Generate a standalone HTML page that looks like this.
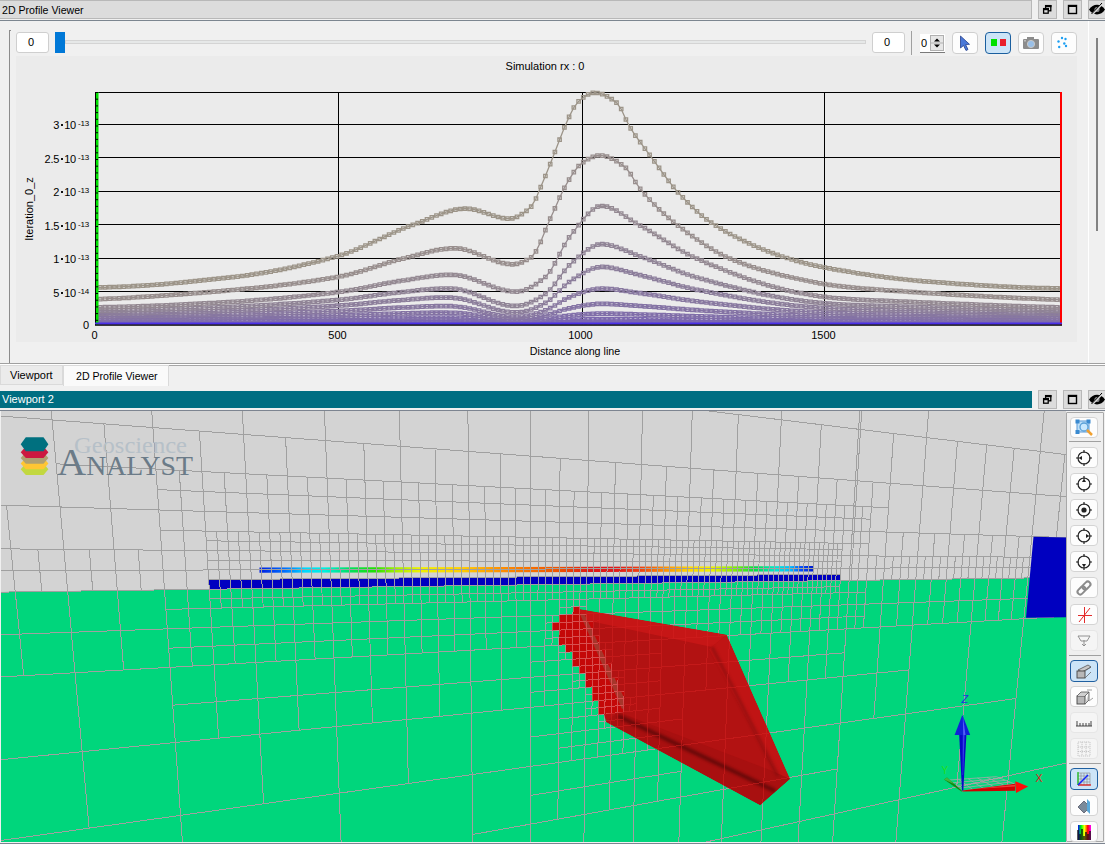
<!DOCTYPE html><html><head><meta charset="utf-8"><style>
*{box-sizing:border-box}
html,body{margin:0;padding:0}
body{width:1105px;height:844px;overflow:hidden;position:relative;background:#f0f0f0;font-family:"Liberation Sans", sans-serif;font-size:12px;color:#000}
.a{position:absolute}
.t{position:absolute;white-space:nowrap;line-height:1}
.btn{position:absolute;background:#fdfdfd;border:1px solid #cfcfcf;border-radius:4px}
</style></head><body>

<div class="a" style="left:0;top:0;width:1032px;height:19px;background:#dcdcdc;border:1px solid #b8b8b8;border-left:none"></div>
<div class="t" style="left:2px;top:4.5px;font-size:10.6px">2D Profile Viewer</div>
<div class="a" style="left:1038px;top:0;width:19px;height:19px;background:#dcdcdc;border:1px solid #b8b8b8"></div>
<div class="a" style="left:1063px;top:0;width:19px;height:19px;background:#dcdcdc;border:1px solid #b8b8b8"></div>
<div class="a" style="left:1088px;top:0;width:19px;height:19px;background:#dcdcdc;border:1px solid #b8b8b8"></div>
<div class="a" style="left:0;top:20px;width:1105px;height:1px;background:#7c8690"></div>
<svg class="a" style="left:1038px;top:0px" width="19" height="19" viewBox="0 0 19 19"><rect x="7.6" y="5.6" width="5.2" height="5.2" fill="none" stroke="#000" stroke-width="1.3"/><rect x="7" y="5" width="6.5" height="2.2" fill="#000"/><rect x="5.6" y="8.6" width="4.6" height="4.6" fill="#dcdcdc" stroke="#000" stroke-width="1.3"/><rect x="5" y="8" width="6" height="2.2" fill="#000"/></svg><svg class="a" style="left:1063px;top:0px" width="19" height="19" viewBox="0 0 19 19"><rect x="5.5" y="5.5" width="8" height="8" fill="none" stroke="#000" stroke-width="1.4"/><rect x="5" y="5" width="9" height="2" fill="#000"/></svg><svg class="a" style="left:1088px;top:0px" width="17" height="19" viewBox="0 0 17 19"><path d="M1,9.5 C5,3 13,3 17,9.5 C13,16 5,16 1,9.5Z" fill="#000"/><circle cx="9" cy="9.5" r="2.6" fill="#888"/><line x1="3.5" y1="15" x2="14.5" y2="3.5" stroke="#dcdcdc" stroke-width="2"/><line x1="3.5" y1="14" x2="14" y2="3" stroke="#000" stroke-width="1"/></svg>
<div class="a" style="left:9px;top:30px;width:2px;height:334px;border-left:1px solid #8c8c8c;border-top:1px solid #8c8c8c"></div>
<div class="a" style="left:1088px;top:21px;width:1px;height:342px;background:#ffffff"></div>
<div class="a" style="left:1096px;top:38px;width:2px;height:193px;background:#828282"></div>
<div class="btn" style="left:16px;top:32px;width:33px;height:21px;border-radius:3px;background:#fff"></div>
<div class="t" style="left:28px;top:37px;font-size:11px">0</div>
<div class="a" style="left:65px;top:40px;width:801px;height:4px;background:#e6e8e8;border:1px solid #d4d4d4"></div>
<div class="a" style="left:55px;top:32px;width:10px;height:21px;background:#0078d7"></div>
<div class="btn" style="left:872px;top:32px;width:33px;height:21px;border-radius:3px;background:#fff"></div>
<div class="t" style="left:884px;top:37px;font-size:11px">0</div>
<div class="a" style="left:911px;top:31px;width:1px;height:24px;background:#a0a0a0"></div>
<div class="a" style="left:920px;top:34px;width:25px;height:19px;background:#fff;border-bottom:1px solid #7a7a7a"></div>
<div class="t" style="left:921px;top:38px;font-size:11px">0</div>
<div class="a" style="left:930px;top:35px;width:14px;height:16px;background:#e6e6e6;border:1px solid #b0b0b0"></div>
<svg class="a" style="left:930px;top:35px" width="14" height="16"><path d="M4,6.5 L7,3.5 L10,6.5Z" fill="#000"/><path d="M4,9.5 L7,12.5 L10,9.5Z" fill="#000"/><line x1="1" y1="8" x2="13" y2="8" stroke="#b0b0b0"/></svg>
<div class="btn" style="left:952px;top:32px;width:26px;height:22px"></div>
<svg class="a" style="left:952px;top:32px" width="26" height="22"><path d="M8.5,4 L8.5,16 L11.5,13.5 L14,18.5 L16,17.5 L13.6,12.6 L17.5,12.3Z" fill="#4a78d8" stroke="#27408b" stroke-width="0.8"/></svg>
<div class="btn" style="left:985px;top:32px;width:26px;height:22px;background:#cce4f7;border:1px solid #1a5e9e"></div>
<div class="a" style="left:991px;top:39px;width:6px;height:7px;background:#00e000"></div><div class="a" style="left:1000px;top:39px;width:6px;height:7px;background:#e8202a"></div>
<div class="btn" style="left:1018px;top:32px;width:26px;height:22px"></div>
<svg class="a" style="left:1018px;top:32px" width="26" height="22"><rect x="5" y="7" width="16" height="10" rx="1" fill="#8c8c8c"/><rect x="9" y="5" width="7" height="3" fill="#8c8c8c"/><circle cx="13" cy="12" r="3.6" fill="#9ac0e8" stroke="#c8c8c8" stroke-width="1"/><rect x="6" y="8" width="2" height="1.5" fill="#bbb"/></svg>
<div class="btn" style="left:1051px;top:32px;width:26px;height:22px"></div>
<svg class="a" style="left:1051px;top:32px" width="26" height="22" fill="#1e9ff2"><circle cx="11" cy="6" r="1.2"/><circle cx="14.5" cy="7" r="1.2"/><circle cx="7.5" cy="9.5" r="1.2"/><circle cx="13.3" cy="11.5" r="1.2"/><circle cx="8.2" cy="15" r="1.2"/><circle cx="15" cy="14" r="1.2"/></svg>
<div class="a" style="left:16px;top:56px;width:1061px;height:286px;background:#ebebeb"></div>
<div class="t" style="left:0;top:61px;width:1090px;text-align:center;font-size:11px;padding-left:0px"><span style="position:relative;left:0px">Simulation rx : 0</span></div>
<svg class="a" style="left:0;top:0" width="1105" height="364" viewBox="0 0 1105 364"><line x1="95" y1="291.5" x2="1061" y2="291.5" stroke="#000" stroke-width="1"/><line x1="95" y1="258.5" x2="1061" y2="258.5" stroke="#000" stroke-width="1"/><line x1="95" y1="224.5" x2="1061" y2="224.5" stroke="#000" stroke-width="1"/><line x1="95" y1="191.5" x2="1061" y2="191.5" stroke="#000" stroke-width="1"/><line x1="95" y1="157.5" x2="1061" y2="157.5" stroke="#000" stroke-width="1"/><line x1="95" y1="124.5" x2="1061" y2="124.5" stroke="#000" stroke-width="1"/><line x1="338.5" y1="92" x2="338.5" y2="325" stroke="#000" stroke-width="1"/><line x1="582.5" y1="92" x2="582.5" y2="325" stroke="#000" stroke-width="1"/><line x1="824.5" y1="92" x2="824.5" y2="325" stroke="#000" stroke-width="1"/><line x1="95" y1="92.5" x2="1062" y2="92.5" stroke="#000" stroke-width="1.2"/><defs><clipPath id="plotc"><rect x="96" y="80" width="966" height="245"/></clipPath></defs><g clip-path="url(#plotc)"><polyline points="95.5,324.4 100.2,324.4 105.0,324.4 109.7,324.4 114.4,324.3 119.2,324.3 123.9,324.3 128.7,324.3 133.4,324.3 138.1,324.3 142.9,324.3 147.6,324.3 152.3,324.3 157.1,324.3 161.8,324.3 166.5,324.3 171.3,324.3 176.0,324.3 180.8,324.3 185.5,324.3 190.2,324.3 195.0,324.3 199.7,324.3 204.4,324.3 209.2,324.3 213.9,324.3 218.6,324.3 223.4,324.3 228.1,324.3 232.8,324.3 237.6,324.3 242.3,324.3 247.1,324.3 251.8,324.3 256.5,324.3 261.3,324.3 266.0,324.3 270.7,324.3 275.5,324.3 280.2,324.3 284.9,324.3 289.7,324.3 294.4,324.3 299.2,324.3 303.9,324.3 308.6,324.3 313.4,324.3 318.1,324.3 322.8,324.3 327.6,324.3 332.3,324.3 337.0,324.3 341.8,324.3 346.5,324.3 351.3,324.3 356.0,324.3 360.7,324.3 365.5,324.3 370.2,324.3 374.9,324.3 379.7,324.3 384.4,324.2 389.1,324.2 393.9,324.2 398.6,324.2 403.3,324.2 408.1,324.2 412.8,324.2 417.6,324.2 422.3,324.2 427.0,324.2 431.8,324.2 436.5,324.2 441.2,324.2 446.0,324.2 450.7,324.2 455.4,324.2 460.2,324.3 464.9,324.3 469.7,324.3 474.4,324.3 479.1,324.4 483.9,324.4 488.6,324.4 493.3,324.5 498.1,324.5 502.8,324.5 507.5,324.5 512.3,324.6 517.0,324.6 521.8,324.5 526.5,324.5 531.2,324.5 536.0,324.5 540.7,324.4 545.4,324.4 550.2,324.3 554.9,324.3 559.6,324.2 564.4,324.2 569.1,324.2 573.8,324.2 578.6,324.1 583.3,324.1 588.1,324.1 592.8,324.1 597.5,324.1 602.3,324.1 607.0,324.1 611.7,324.1 616.5,324.1 621.2,324.1 625.9,324.1 630.7,324.1 635.4,324.1 640.2,324.1 644.9,324.1 649.6,324.1 654.4,324.1 659.1,324.1 663.8,324.1 668.6,324.2 673.3,324.2 678.0,324.2 682.8,324.2 687.5,324.2 692.3,324.2 697.0,324.2 701.7,324.2 706.5,324.2 711.2,324.2 715.9,324.2 720.7,324.2 725.4,324.2 730.1,324.2 734.9,324.2 739.6,324.2 744.3,324.2 749.1,324.2 753.8,324.2 758.6,324.2 763.3,324.3 768.0,324.3 772.8,324.3 777.5,324.3 782.2,324.3 787.0,324.3 791.7,324.3 796.4,324.3 801.2,324.3 805.9,324.3 810.7,324.3 815.4,324.3 820.1,324.3 824.9,324.3 829.6,324.3 834.3,324.3 839.1,324.3 843.8,324.3 848.5,324.3 853.3,324.3 858.0,324.3 862.8,324.3 867.5,324.3 872.2,324.3 877.0,324.3 881.7,324.3 886.4,324.3 891.2,324.3 895.9,324.3 900.6,324.3 905.4,324.3 910.1,324.3 914.8,324.3 919.6,324.3 924.3,324.3 929.1,324.3 933.8,324.3 938.5,324.3 943.3,324.3 948.0,324.3 952.7,324.3 957.5,324.3 962.2,324.3 966.9,324.3 971.7,324.3 976.4,324.3 981.2,324.3 985.9,324.3 990.6,324.3 995.4,324.3 1000.1,324.3 1004.8,324.3 1009.6,324.3 1014.3,324.3 1019.0,324.3 1023.8,324.3 1028.5,324.3 1033.3,324.3 1038.0,324.3 1042.7,324.3 1047.5,324.3 1052.2,324.4 1056.9,324.4 1061.7,324.4" fill="none" stroke="rgb(124,104,174)" stroke-width="1.3"/><path d="M93.8,322.7h3.4v3.4h-3.4zM98.5,322.7h3.4v3.4h-3.4zM103.3,322.7h3.4v3.4h-3.4zM108.0,322.7h3.4v3.4h-3.4zM112.7,322.6h3.4v3.4h-3.4zM117.5,322.6h3.4v3.4h-3.4zM122.2,322.6h3.4v3.4h-3.4zM127.0,322.6h3.4v3.4h-3.4zM131.7,322.6h3.4v3.4h-3.4zM136.4,322.6h3.4v3.4h-3.4zM141.2,322.6h3.4v3.4h-3.4zM145.9,322.6h3.4v3.4h-3.4zM150.6,322.6h3.4v3.4h-3.4zM155.4,322.6h3.4v3.4h-3.4zM160.1,322.6h3.4v3.4h-3.4zM164.8,322.6h3.4v3.4h-3.4zM169.6,322.6h3.4v3.4h-3.4zM174.3,322.6h3.4v3.4h-3.4zM179.1,322.6h3.4v3.4h-3.4zM183.8,322.6h3.4v3.4h-3.4zM188.5,322.6h3.4v3.4h-3.4zM193.3,322.6h3.4v3.4h-3.4zM198.0,322.6h3.4v3.4h-3.4zM202.7,322.6h3.4v3.4h-3.4zM207.5,322.6h3.4v3.4h-3.4zM212.2,322.6h3.4v3.4h-3.4zM216.9,322.6h3.4v3.4h-3.4zM221.7,322.6h3.4v3.4h-3.4zM226.4,322.6h3.4v3.4h-3.4zM231.1,322.6h3.4v3.4h-3.4zM235.9,322.6h3.4v3.4h-3.4zM240.6,322.6h3.4v3.4h-3.4zM245.4,322.6h3.4v3.4h-3.4zM250.1,322.6h3.4v3.4h-3.4zM254.8,322.6h3.4v3.4h-3.4zM259.6,322.6h3.4v3.4h-3.4zM264.3,322.6h3.4v3.4h-3.4zM269.0,322.6h3.4v3.4h-3.4zM273.8,322.6h3.4v3.4h-3.4zM278.5,322.6h3.4v3.4h-3.4zM283.2,322.6h3.4v3.4h-3.4zM288.0,322.6h3.4v3.4h-3.4zM292.7,322.6h3.4v3.4h-3.4zM297.5,322.6h3.4v3.4h-3.4zM302.2,322.6h3.4v3.4h-3.4zM306.9,322.6h3.4v3.4h-3.4zM311.7,322.6h3.4v3.4h-3.4zM316.4,322.6h3.4v3.4h-3.4zM321.1,322.6h3.4v3.4h-3.4zM325.9,322.6h3.4v3.4h-3.4zM330.6,322.6h3.4v3.4h-3.4zM335.3,322.6h3.4v3.4h-3.4zM340.1,322.6h3.4v3.4h-3.4zM344.8,322.6h3.4v3.4h-3.4zM349.6,322.6h3.4v3.4h-3.4zM354.3,322.6h3.4v3.4h-3.4zM359.0,322.6h3.4v3.4h-3.4zM363.8,322.6h3.4v3.4h-3.4zM368.5,322.6h3.4v3.4h-3.4zM373.2,322.6h3.4v3.4h-3.4zM378.0,322.6h3.4v3.4h-3.4zM382.7,322.5h3.4v3.4h-3.4zM387.4,322.5h3.4v3.4h-3.4zM392.2,322.5h3.4v3.4h-3.4zM396.9,322.5h3.4v3.4h-3.4zM401.6,322.5h3.4v3.4h-3.4zM406.4,322.5h3.4v3.4h-3.4zM411.1,322.5h3.4v3.4h-3.4zM415.9,322.5h3.4v3.4h-3.4zM420.6,322.5h3.4v3.4h-3.4zM425.3,322.5h3.4v3.4h-3.4zM430.1,322.5h3.4v3.4h-3.4zM434.8,322.5h3.4v3.4h-3.4zM439.5,322.5h3.4v3.4h-3.4zM444.3,322.5h3.4v3.4h-3.4zM449.0,322.5h3.4v3.4h-3.4zM453.7,322.5h3.4v3.4h-3.4zM458.5,322.6h3.4v3.4h-3.4zM463.2,322.6h3.4v3.4h-3.4zM468.0,322.6h3.4v3.4h-3.4zM472.7,322.6h3.4v3.4h-3.4zM477.4,322.7h3.4v3.4h-3.4zM482.2,322.7h3.4v3.4h-3.4zM486.9,322.7h3.4v3.4h-3.4zM491.6,322.8h3.4v3.4h-3.4zM496.4,322.8h3.4v3.4h-3.4zM501.1,322.8h3.4v3.4h-3.4zM505.8,322.8h3.4v3.4h-3.4zM510.6,322.9h3.4v3.4h-3.4zM515.3,322.9h3.4v3.4h-3.4zM520.1,322.8h3.4v3.4h-3.4zM524.8,322.8h3.4v3.4h-3.4zM529.5,322.8h3.4v3.4h-3.4zM534.3,322.8h3.4v3.4h-3.4zM539.0,322.7h3.4v3.4h-3.4zM543.7,322.7h3.4v3.4h-3.4zM548.5,322.6h3.4v3.4h-3.4zM553.2,322.6h3.4v3.4h-3.4zM557.9,322.5h3.4v3.4h-3.4zM562.7,322.5h3.4v3.4h-3.4zM567.4,322.5h3.4v3.4h-3.4zM572.1,322.5h3.4v3.4h-3.4zM576.9,322.4h3.4v3.4h-3.4zM581.6,322.4h3.4v3.4h-3.4zM586.4,322.4h3.4v3.4h-3.4zM591.1,322.4h3.4v3.4h-3.4zM595.8,322.4h3.4v3.4h-3.4zM600.6,322.4h3.4v3.4h-3.4zM605.3,322.4h3.4v3.4h-3.4zM610.0,322.4h3.4v3.4h-3.4zM614.8,322.4h3.4v3.4h-3.4zM619.5,322.4h3.4v3.4h-3.4zM624.2,322.4h3.4v3.4h-3.4zM629.0,322.4h3.4v3.4h-3.4zM633.7,322.4h3.4v3.4h-3.4zM638.5,322.4h3.4v3.4h-3.4zM643.2,322.4h3.4v3.4h-3.4zM647.9,322.4h3.4v3.4h-3.4zM652.7,322.4h3.4v3.4h-3.4zM657.4,322.4h3.4v3.4h-3.4zM662.1,322.4h3.4v3.4h-3.4zM666.9,322.5h3.4v3.4h-3.4zM671.6,322.5h3.4v3.4h-3.4zM676.3,322.5h3.4v3.4h-3.4zM681.1,322.5h3.4v3.4h-3.4zM685.8,322.5h3.4v3.4h-3.4zM690.6,322.5h3.4v3.4h-3.4zM695.3,322.5h3.4v3.4h-3.4zM700.0,322.5h3.4v3.4h-3.4zM704.8,322.5h3.4v3.4h-3.4zM709.5,322.5h3.4v3.4h-3.4zM714.2,322.5h3.4v3.4h-3.4zM719.0,322.5h3.4v3.4h-3.4zM723.7,322.5h3.4v3.4h-3.4zM728.4,322.5h3.4v3.4h-3.4zM733.2,322.5h3.4v3.4h-3.4zM737.9,322.5h3.4v3.4h-3.4zM742.6,322.5h3.4v3.4h-3.4zM747.4,322.5h3.4v3.4h-3.4zM752.1,322.5h3.4v3.4h-3.4zM756.9,322.5h3.4v3.4h-3.4zM761.6,322.6h3.4v3.4h-3.4zM766.3,322.6h3.4v3.4h-3.4zM771.1,322.6h3.4v3.4h-3.4zM775.8,322.6h3.4v3.4h-3.4zM780.5,322.6h3.4v3.4h-3.4zM785.3,322.6h3.4v3.4h-3.4zM790.0,322.6h3.4v3.4h-3.4zM794.7,322.6h3.4v3.4h-3.4zM799.5,322.6h3.4v3.4h-3.4zM804.2,322.6h3.4v3.4h-3.4zM809.0,322.6h3.4v3.4h-3.4zM813.7,322.6h3.4v3.4h-3.4zM818.4,322.6h3.4v3.4h-3.4zM823.2,322.6h3.4v3.4h-3.4zM827.9,322.6h3.4v3.4h-3.4zM832.6,322.6h3.4v3.4h-3.4zM837.4,322.6h3.4v3.4h-3.4zM842.1,322.6h3.4v3.4h-3.4zM846.8,322.6h3.4v3.4h-3.4zM851.6,322.6h3.4v3.4h-3.4zM856.3,322.6h3.4v3.4h-3.4zM861.1,322.6h3.4v3.4h-3.4zM865.8,322.6h3.4v3.4h-3.4zM870.5,322.6h3.4v3.4h-3.4zM875.3,322.6h3.4v3.4h-3.4zM880.0,322.6h3.4v3.4h-3.4zM884.7,322.6h3.4v3.4h-3.4zM889.5,322.6h3.4v3.4h-3.4zM894.2,322.6h3.4v3.4h-3.4zM898.9,322.6h3.4v3.4h-3.4zM903.7,322.6h3.4v3.4h-3.4zM908.4,322.6h3.4v3.4h-3.4zM913.1,322.6h3.4v3.4h-3.4zM917.9,322.6h3.4v3.4h-3.4zM922.6,322.6h3.4v3.4h-3.4zM927.4,322.6h3.4v3.4h-3.4zM932.1,322.6h3.4v3.4h-3.4zM936.8,322.6h3.4v3.4h-3.4zM941.6,322.6h3.4v3.4h-3.4zM946.3,322.6h3.4v3.4h-3.4zM951.0,322.6h3.4v3.4h-3.4zM955.8,322.6h3.4v3.4h-3.4zM960.5,322.6h3.4v3.4h-3.4zM965.2,322.6h3.4v3.4h-3.4zM970.0,322.6h3.4v3.4h-3.4zM974.7,322.6h3.4v3.4h-3.4zM979.5,322.6h3.4v3.4h-3.4zM984.2,322.6h3.4v3.4h-3.4zM988.9,322.6h3.4v3.4h-3.4zM993.7,322.6h3.4v3.4h-3.4zM998.4,322.6h3.4v3.4h-3.4zM1003.1,322.6h3.4v3.4h-3.4zM1007.9,322.6h3.4v3.4h-3.4zM1012.6,322.6h3.4v3.4h-3.4zM1017.3,322.6h3.4v3.4h-3.4zM1022.1,322.6h3.4v3.4h-3.4zM1026.8,322.6h3.4v3.4h-3.4zM1031.6,322.6h3.4v3.4h-3.4zM1036.3,322.6h3.4v3.4h-3.4zM1041.0,322.6h3.4v3.4h-3.4zM1045.8,322.6h3.4v3.4h-3.4zM1050.5,322.7h3.4v3.4h-3.4zM1055.2,322.7h3.4v3.4h-3.4zM1060.0,322.7h3.4v3.4h-3.4z" stroke="rgb(124,104,174)" stroke-width="1.3" fill="none"/><polyline points="95.5,323.9 100.2,323.9 105.0,323.9 109.7,323.9 114.4,323.9 119.2,323.9 123.9,323.9 128.7,323.9 133.4,323.9 138.1,323.9 142.9,323.9 147.6,323.9 152.3,323.9 157.1,323.9 161.8,323.9 166.5,323.9 171.3,323.9 176.0,323.9 180.8,323.9 185.5,323.9 190.2,323.9 195.0,323.9 199.7,323.9 204.4,323.9 209.2,323.9 213.9,323.9 218.6,323.9 223.4,323.9 228.1,323.9 232.8,323.9 237.6,323.9 242.3,323.9 247.1,323.9 251.8,323.9 256.5,323.9 261.3,323.9 266.0,323.9 270.7,323.8 275.5,323.8 280.2,323.8 284.9,323.8 289.7,323.8 294.4,323.8 299.2,323.8 303.9,323.8 308.6,323.8 313.4,323.8 318.1,323.8 322.8,323.8 327.6,323.8 332.3,323.8 337.0,323.8 341.8,323.8 346.5,323.8 351.3,323.8 356.0,323.8 360.7,323.8 365.5,323.7 370.2,323.7 374.9,323.7 379.7,323.7 384.4,323.7 389.1,323.7 393.9,323.7 398.6,323.7 403.3,323.7 408.1,323.7 412.8,323.7 417.6,323.7 422.3,323.7 427.0,323.7 431.8,323.7 436.5,323.7 441.2,323.7 446.0,323.7 450.7,323.7 455.4,323.7 460.2,323.7 464.9,323.8 469.7,323.8 474.4,323.9 479.1,323.9 483.9,324.0 488.6,324.0 493.3,324.1 498.1,324.2 502.8,324.2 507.5,324.3 512.3,324.3 517.0,324.3 521.8,324.3 526.5,324.2 531.2,324.2 536.0,324.1 540.7,324.0 545.4,323.9 550.2,323.9 554.9,323.8 559.6,323.7 564.4,323.6 569.1,323.5 573.8,323.5 578.6,323.5 583.3,323.4 588.1,323.4 592.8,323.4 597.5,323.4 602.3,323.4 607.0,323.4 611.7,323.4 616.5,323.4 621.2,323.4 625.9,323.4 630.7,323.4 635.4,323.4 640.2,323.4 644.9,323.4 649.6,323.4 654.4,323.5 659.1,323.5 663.8,323.5 668.6,323.5 673.3,323.5 678.0,323.5 682.8,323.5 687.5,323.5 692.3,323.6 697.0,323.6 701.7,323.6 706.5,323.6 711.2,323.6 715.9,323.6 720.7,323.6 725.4,323.6 730.1,323.6 734.9,323.7 739.6,323.7 744.3,323.7 749.1,323.7 753.8,323.7 758.6,323.7 763.3,323.7 768.0,323.7 772.8,323.7 777.5,323.7 782.2,323.8 787.0,323.8 791.7,323.8 796.4,323.8 801.2,323.8 805.9,323.8 810.7,323.8 815.4,323.8 820.1,323.8 824.9,323.8 829.6,323.8 834.3,323.8 839.1,323.8 843.8,323.8 848.5,323.8 853.3,323.9 858.0,323.9 862.8,323.9 867.5,323.9 872.2,323.9 877.0,323.9 881.7,323.9 886.4,323.9 891.2,323.9 895.9,323.9 900.6,323.9 905.4,323.9 910.1,323.9 914.8,323.9 919.6,323.9 924.3,323.9 929.1,323.9 933.8,323.9 938.5,323.9 943.3,323.9 948.0,323.9 952.7,323.9 957.5,323.9 962.2,323.9 966.9,323.9 971.7,323.9 976.4,323.9 981.2,323.9 985.9,323.9 990.6,323.9 995.4,323.9 1000.1,323.9 1004.8,323.9 1009.6,323.9 1014.3,323.9 1019.0,323.9 1023.8,323.9 1028.5,323.9 1033.3,323.9 1038.0,323.9 1042.7,323.9 1047.5,323.9 1052.2,323.9 1056.9,323.9 1061.7,323.9" fill="none" stroke="rgb(124,104,174)" stroke-width="1.3"/><path d="M93.8,322.2h3.4v3.4h-3.4zM98.5,322.2h3.4v3.4h-3.4zM103.3,322.2h3.4v3.4h-3.4zM108.0,322.2h3.4v3.4h-3.4zM112.7,322.2h3.4v3.4h-3.4zM117.5,322.2h3.4v3.4h-3.4zM122.2,322.2h3.4v3.4h-3.4zM127.0,322.2h3.4v3.4h-3.4zM131.7,322.2h3.4v3.4h-3.4zM136.4,322.2h3.4v3.4h-3.4zM141.2,322.2h3.4v3.4h-3.4zM145.9,322.2h3.4v3.4h-3.4zM150.6,322.2h3.4v3.4h-3.4zM155.4,322.2h3.4v3.4h-3.4zM160.1,322.2h3.4v3.4h-3.4zM164.8,322.2h3.4v3.4h-3.4zM169.6,322.2h3.4v3.4h-3.4zM174.3,322.2h3.4v3.4h-3.4zM179.1,322.2h3.4v3.4h-3.4zM183.8,322.2h3.4v3.4h-3.4zM188.5,322.2h3.4v3.4h-3.4zM193.3,322.2h3.4v3.4h-3.4zM198.0,322.2h3.4v3.4h-3.4zM202.7,322.2h3.4v3.4h-3.4zM207.5,322.2h3.4v3.4h-3.4zM212.2,322.2h3.4v3.4h-3.4zM216.9,322.2h3.4v3.4h-3.4zM221.7,322.2h3.4v3.4h-3.4zM226.4,322.2h3.4v3.4h-3.4zM231.1,322.2h3.4v3.4h-3.4zM235.9,322.2h3.4v3.4h-3.4zM240.6,322.2h3.4v3.4h-3.4zM245.4,322.2h3.4v3.4h-3.4zM250.1,322.2h3.4v3.4h-3.4zM254.8,322.2h3.4v3.4h-3.4zM259.6,322.2h3.4v3.4h-3.4zM264.3,322.2h3.4v3.4h-3.4zM269.0,322.1h3.4v3.4h-3.4zM273.8,322.1h3.4v3.4h-3.4zM278.5,322.1h3.4v3.4h-3.4zM283.2,322.1h3.4v3.4h-3.4zM288.0,322.1h3.4v3.4h-3.4zM292.7,322.1h3.4v3.4h-3.4zM297.5,322.1h3.4v3.4h-3.4zM302.2,322.1h3.4v3.4h-3.4zM306.9,322.1h3.4v3.4h-3.4zM311.7,322.1h3.4v3.4h-3.4zM316.4,322.1h3.4v3.4h-3.4zM321.1,322.1h3.4v3.4h-3.4zM325.9,322.1h3.4v3.4h-3.4zM330.6,322.1h3.4v3.4h-3.4zM335.3,322.1h3.4v3.4h-3.4zM340.1,322.1h3.4v3.4h-3.4zM344.8,322.1h3.4v3.4h-3.4zM349.6,322.1h3.4v3.4h-3.4zM354.3,322.1h3.4v3.4h-3.4zM359.0,322.1h3.4v3.4h-3.4zM363.8,322.0h3.4v3.4h-3.4zM368.5,322.0h3.4v3.4h-3.4zM373.2,322.0h3.4v3.4h-3.4zM378.0,322.0h3.4v3.4h-3.4zM382.7,322.0h3.4v3.4h-3.4zM387.4,322.0h3.4v3.4h-3.4zM392.2,322.0h3.4v3.4h-3.4zM396.9,322.0h3.4v3.4h-3.4zM401.6,322.0h3.4v3.4h-3.4zM406.4,322.0h3.4v3.4h-3.4zM411.1,322.0h3.4v3.4h-3.4zM415.9,322.0h3.4v3.4h-3.4zM420.6,322.0h3.4v3.4h-3.4zM425.3,322.0h3.4v3.4h-3.4zM430.1,322.0h3.4v3.4h-3.4zM434.8,322.0h3.4v3.4h-3.4zM439.5,322.0h3.4v3.4h-3.4zM444.3,322.0h3.4v3.4h-3.4zM449.0,322.0h3.4v3.4h-3.4zM453.7,322.0h3.4v3.4h-3.4zM458.5,322.0h3.4v3.4h-3.4zM463.2,322.1h3.4v3.4h-3.4zM468.0,322.1h3.4v3.4h-3.4zM472.7,322.2h3.4v3.4h-3.4zM477.4,322.2h3.4v3.4h-3.4zM482.2,322.3h3.4v3.4h-3.4zM486.9,322.3h3.4v3.4h-3.4zM491.6,322.4h3.4v3.4h-3.4zM496.4,322.5h3.4v3.4h-3.4zM501.1,322.5h3.4v3.4h-3.4zM505.8,322.6h3.4v3.4h-3.4zM510.6,322.6h3.4v3.4h-3.4zM515.3,322.6h3.4v3.4h-3.4zM520.1,322.6h3.4v3.4h-3.4zM524.8,322.5h3.4v3.4h-3.4zM529.5,322.5h3.4v3.4h-3.4zM534.3,322.4h3.4v3.4h-3.4zM539.0,322.3h3.4v3.4h-3.4zM543.7,322.2h3.4v3.4h-3.4zM548.5,322.2h3.4v3.4h-3.4zM553.2,322.1h3.4v3.4h-3.4zM557.9,322.0h3.4v3.4h-3.4zM562.7,321.9h3.4v3.4h-3.4zM567.4,321.8h3.4v3.4h-3.4zM572.1,321.8h3.4v3.4h-3.4zM576.9,321.8h3.4v3.4h-3.4zM581.6,321.7h3.4v3.4h-3.4zM586.4,321.7h3.4v3.4h-3.4zM591.1,321.7h3.4v3.4h-3.4zM595.8,321.7h3.4v3.4h-3.4zM600.6,321.7h3.4v3.4h-3.4zM605.3,321.7h3.4v3.4h-3.4zM610.0,321.7h3.4v3.4h-3.4zM614.8,321.7h3.4v3.4h-3.4zM619.5,321.7h3.4v3.4h-3.4zM624.2,321.7h3.4v3.4h-3.4zM629.0,321.7h3.4v3.4h-3.4zM633.7,321.7h3.4v3.4h-3.4zM638.5,321.7h3.4v3.4h-3.4zM643.2,321.7h3.4v3.4h-3.4zM647.9,321.7h3.4v3.4h-3.4zM652.7,321.8h3.4v3.4h-3.4zM657.4,321.8h3.4v3.4h-3.4zM662.1,321.8h3.4v3.4h-3.4zM666.9,321.8h3.4v3.4h-3.4zM671.6,321.8h3.4v3.4h-3.4zM676.3,321.8h3.4v3.4h-3.4zM681.1,321.8h3.4v3.4h-3.4zM685.8,321.8h3.4v3.4h-3.4zM690.6,321.9h3.4v3.4h-3.4zM695.3,321.9h3.4v3.4h-3.4zM700.0,321.9h3.4v3.4h-3.4zM704.8,321.9h3.4v3.4h-3.4zM709.5,321.9h3.4v3.4h-3.4zM714.2,321.9h3.4v3.4h-3.4zM719.0,321.9h3.4v3.4h-3.4zM723.7,321.9h3.4v3.4h-3.4zM728.4,321.9h3.4v3.4h-3.4zM733.2,322.0h3.4v3.4h-3.4zM737.9,322.0h3.4v3.4h-3.4zM742.6,322.0h3.4v3.4h-3.4zM747.4,322.0h3.4v3.4h-3.4zM752.1,322.0h3.4v3.4h-3.4zM756.9,322.0h3.4v3.4h-3.4zM761.6,322.0h3.4v3.4h-3.4zM766.3,322.0h3.4v3.4h-3.4zM771.1,322.0h3.4v3.4h-3.4zM775.8,322.0h3.4v3.4h-3.4zM780.5,322.1h3.4v3.4h-3.4zM785.3,322.1h3.4v3.4h-3.4zM790.0,322.1h3.4v3.4h-3.4zM794.7,322.1h3.4v3.4h-3.4zM799.5,322.1h3.4v3.4h-3.4zM804.2,322.1h3.4v3.4h-3.4zM809.0,322.1h3.4v3.4h-3.4zM813.7,322.1h3.4v3.4h-3.4zM818.4,322.1h3.4v3.4h-3.4zM823.2,322.1h3.4v3.4h-3.4zM827.9,322.1h3.4v3.4h-3.4zM832.6,322.1h3.4v3.4h-3.4zM837.4,322.1h3.4v3.4h-3.4zM842.1,322.1h3.4v3.4h-3.4zM846.8,322.1h3.4v3.4h-3.4zM851.6,322.2h3.4v3.4h-3.4zM856.3,322.2h3.4v3.4h-3.4zM861.1,322.2h3.4v3.4h-3.4zM865.8,322.2h3.4v3.4h-3.4zM870.5,322.2h3.4v3.4h-3.4zM875.3,322.2h3.4v3.4h-3.4zM880.0,322.2h3.4v3.4h-3.4zM884.7,322.2h3.4v3.4h-3.4zM889.5,322.2h3.4v3.4h-3.4zM894.2,322.2h3.4v3.4h-3.4zM898.9,322.2h3.4v3.4h-3.4zM903.7,322.2h3.4v3.4h-3.4zM908.4,322.2h3.4v3.4h-3.4zM913.1,322.2h3.4v3.4h-3.4zM917.9,322.2h3.4v3.4h-3.4zM922.6,322.2h3.4v3.4h-3.4zM927.4,322.2h3.4v3.4h-3.4zM932.1,322.2h3.4v3.4h-3.4zM936.8,322.2h3.4v3.4h-3.4zM941.6,322.2h3.4v3.4h-3.4zM946.3,322.2h3.4v3.4h-3.4zM951.0,322.2h3.4v3.4h-3.4zM955.8,322.2h3.4v3.4h-3.4zM960.5,322.2h3.4v3.4h-3.4zM965.2,322.2h3.4v3.4h-3.4zM970.0,322.2h3.4v3.4h-3.4zM974.7,322.2h3.4v3.4h-3.4zM979.5,322.2h3.4v3.4h-3.4zM984.2,322.2h3.4v3.4h-3.4zM988.9,322.2h3.4v3.4h-3.4zM993.7,322.2h3.4v3.4h-3.4zM998.4,322.2h3.4v3.4h-3.4zM1003.1,322.2h3.4v3.4h-3.4zM1007.9,322.2h3.4v3.4h-3.4zM1012.6,322.2h3.4v3.4h-3.4zM1017.3,322.2h3.4v3.4h-3.4zM1022.1,322.2h3.4v3.4h-3.4zM1026.8,322.2h3.4v3.4h-3.4zM1031.6,322.2h3.4v3.4h-3.4zM1036.3,322.2h3.4v3.4h-3.4zM1041.0,322.2h3.4v3.4h-3.4zM1045.8,322.2h3.4v3.4h-3.4zM1050.5,322.2h3.4v3.4h-3.4zM1055.2,322.2h3.4v3.4h-3.4zM1060.0,322.2h3.4v3.4h-3.4z" stroke="rgb(124,104,174)" stroke-width="1.3" fill="none"/><polyline points="95.5,323.2 100.2,323.2 105.0,323.2 109.7,323.2 114.4,323.2 119.2,323.2 123.9,323.2 128.7,323.2 133.4,323.2 138.1,323.2 142.9,323.2 147.6,323.2 152.3,323.2 157.1,323.2 161.8,323.1 166.5,323.1 171.3,323.1 176.0,323.1 180.8,323.1 185.5,323.1 190.2,323.1 195.0,323.1 199.7,323.1 204.4,323.1 209.2,323.1 213.9,323.1 218.6,323.1 223.4,323.1 228.1,323.1 232.8,323.1 237.6,323.1 242.3,323.0 247.1,323.0 251.8,323.0 256.5,323.0 261.3,323.0 266.0,323.0 270.7,323.0 275.5,323.0 280.2,323.0 284.9,323.0 289.7,323.0 294.4,322.9 299.2,322.9 303.9,322.9 308.6,322.9 313.4,322.9 318.1,322.9 322.8,322.9 327.6,322.9 332.3,322.9 337.0,322.9 341.8,322.8 346.5,322.8 351.3,322.8 356.0,322.8 360.7,322.8 365.5,322.8 370.2,322.8 374.9,322.7 379.7,322.7 384.4,322.7 389.1,322.7 393.9,322.7 398.6,322.7 403.3,322.7 408.1,322.6 412.8,322.6 417.6,322.6 422.3,322.6 427.0,322.6 431.8,322.6 436.5,322.6 441.2,322.6 446.0,322.6 450.7,322.6 455.4,322.7 460.2,322.7 464.9,322.8 469.7,322.8 474.4,322.9 479.1,323.1 483.9,323.2 488.6,323.3 493.3,323.4 498.1,323.6 502.8,323.7 507.5,323.7 512.3,323.8 517.0,323.8 521.8,323.7 526.5,323.6 531.2,323.5 536.0,323.4 540.7,323.3 545.4,323.1 550.2,322.9 554.9,322.7 559.6,322.6 564.4,322.4 569.1,322.3 573.8,322.2 578.6,322.1 583.3,322.0 588.1,322.0 592.8,321.9 597.5,321.9 602.3,321.9 607.0,321.9 611.7,321.9 616.5,321.9 621.2,321.9 625.9,322.0 630.7,322.0 635.4,322.0 640.2,322.0 644.9,322.1 649.6,322.1 654.4,322.1 659.1,322.1 663.8,322.2 668.6,322.2 673.3,322.2 678.0,322.3 682.8,322.3 687.5,322.3 692.3,322.3 697.0,322.4 701.7,322.4 706.5,322.4 711.2,322.4 715.9,322.5 720.7,322.5 725.4,322.5 730.1,322.5 734.9,322.6 739.6,322.6 744.3,322.6 749.1,322.6 753.8,322.7 758.6,322.7 763.3,322.7 768.0,322.7 772.8,322.8 777.5,322.8 782.2,322.8 787.0,322.8 791.7,322.8 796.4,322.9 801.2,322.9 805.9,322.9 810.7,322.9 815.4,322.9 820.1,322.9 824.9,322.9 829.6,323.0 834.3,323.0 839.1,323.0 843.8,323.0 848.5,323.0 853.3,323.0 858.0,323.0 862.8,323.0 867.5,323.0 872.2,323.0 877.0,323.0 881.7,323.0 886.4,323.0 891.2,323.0 895.9,323.0 900.6,323.0 905.4,323.1 910.1,323.1 914.8,323.1 919.6,323.1 924.3,323.1 929.1,323.1 933.8,323.1 938.5,323.1 943.3,323.1 948.0,323.1 952.7,323.1 957.5,323.1 962.2,323.1 966.9,323.1 971.7,323.1 976.4,323.1 981.2,323.1 985.9,323.1 990.6,323.1 995.4,323.1 1000.1,323.1 1004.8,323.2 1009.6,323.2 1014.3,323.2 1019.0,323.2 1023.8,323.2 1028.5,323.2 1033.3,323.2 1038.0,323.2 1042.7,323.2 1047.5,323.2 1052.2,323.2 1056.9,323.2 1061.7,323.2" fill="none" stroke="rgb(124,104,174)" stroke-width="1.3"/><path d="M93.8,321.5h3.4v3.4h-3.4zM98.5,321.5h3.4v3.4h-3.4zM103.3,321.5h3.4v3.4h-3.4zM108.0,321.5h3.4v3.4h-3.4zM112.7,321.5h3.4v3.4h-3.4zM117.5,321.5h3.4v3.4h-3.4zM122.2,321.5h3.4v3.4h-3.4zM127.0,321.5h3.4v3.4h-3.4zM131.7,321.5h3.4v3.4h-3.4zM136.4,321.5h3.4v3.4h-3.4zM141.2,321.5h3.4v3.4h-3.4zM145.9,321.5h3.4v3.4h-3.4zM150.6,321.5h3.4v3.4h-3.4zM155.4,321.5h3.4v3.4h-3.4zM160.1,321.4h3.4v3.4h-3.4zM164.8,321.4h3.4v3.4h-3.4zM169.6,321.4h3.4v3.4h-3.4zM174.3,321.4h3.4v3.4h-3.4zM179.1,321.4h3.4v3.4h-3.4zM183.8,321.4h3.4v3.4h-3.4zM188.5,321.4h3.4v3.4h-3.4zM193.3,321.4h3.4v3.4h-3.4zM198.0,321.4h3.4v3.4h-3.4zM202.7,321.4h3.4v3.4h-3.4zM207.5,321.4h3.4v3.4h-3.4zM212.2,321.4h3.4v3.4h-3.4zM216.9,321.4h3.4v3.4h-3.4zM221.7,321.4h3.4v3.4h-3.4zM226.4,321.4h3.4v3.4h-3.4zM231.1,321.4h3.4v3.4h-3.4zM235.9,321.4h3.4v3.4h-3.4zM240.6,321.3h3.4v3.4h-3.4zM245.4,321.3h3.4v3.4h-3.4zM250.1,321.3h3.4v3.4h-3.4zM254.8,321.3h3.4v3.4h-3.4zM259.6,321.3h3.4v3.4h-3.4zM264.3,321.3h3.4v3.4h-3.4zM269.0,321.3h3.4v3.4h-3.4zM273.8,321.3h3.4v3.4h-3.4zM278.5,321.3h3.4v3.4h-3.4zM283.2,321.3h3.4v3.4h-3.4zM288.0,321.3h3.4v3.4h-3.4zM292.7,321.2h3.4v3.4h-3.4zM297.5,321.2h3.4v3.4h-3.4zM302.2,321.2h3.4v3.4h-3.4zM306.9,321.2h3.4v3.4h-3.4zM311.7,321.2h3.4v3.4h-3.4zM316.4,321.2h3.4v3.4h-3.4zM321.1,321.2h3.4v3.4h-3.4zM325.9,321.2h3.4v3.4h-3.4zM330.6,321.2h3.4v3.4h-3.4zM335.3,321.2h3.4v3.4h-3.4zM340.1,321.1h3.4v3.4h-3.4zM344.8,321.1h3.4v3.4h-3.4zM349.6,321.1h3.4v3.4h-3.4zM354.3,321.1h3.4v3.4h-3.4zM359.0,321.1h3.4v3.4h-3.4zM363.8,321.1h3.4v3.4h-3.4zM368.5,321.1h3.4v3.4h-3.4zM373.2,321.0h3.4v3.4h-3.4zM378.0,321.0h3.4v3.4h-3.4zM382.7,321.0h3.4v3.4h-3.4zM387.4,321.0h3.4v3.4h-3.4zM392.2,321.0h3.4v3.4h-3.4zM396.9,321.0h3.4v3.4h-3.4zM401.6,321.0h3.4v3.4h-3.4zM406.4,320.9h3.4v3.4h-3.4zM411.1,320.9h3.4v3.4h-3.4zM415.9,320.9h3.4v3.4h-3.4zM420.6,320.9h3.4v3.4h-3.4zM425.3,320.9h3.4v3.4h-3.4zM430.1,320.9h3.4v3.4h-3.4zM434.8,320.9h3.4v3.4h-3.4zM439.5,320.9h3.4v3.4h-3.4zM444.3,320.9h3.4v3.4h-3.4zM449.0,320.9h3.4v3.4h-3.4zM453.7,321.0h3.4v3.4h-3.4zM458.5,321.0h3.4v3.4h-3.4zM463.2,321.1h3.4v3.4h-3.4zM468.0,321.1h3.4v3.4h-3.4zM472.7,321.2h3.4v3.4h-3.4zM477.4,321.4h3.4v3.4h-3.4zM482.2,321.5h3.4v3.4h-3.4zM486.9,321.6h3.4v3.4h-3.4zM491.6,321.7h3.4v3.4h-3.4zM496.4,321.9h3.4v3.4h-3.4zM501.1,322.0h3.4v3.4h-3.4zM505.8,322.0h3.4v3.4h-3.4zM510.6,322.1h3.4v3.4h-3.4zM515.3,322.1h3.4v3.4h-3.4zM520.1,322.0h3.4v3.4h-3.4zM524.8,321.9h3.4v3.4h-3.4zM529.5,321.8h3.4v3.4h-3.4zM534.3,321.7h3.4v3.4h-3.4zM539.0,321.6h3.4v3.4h-3.4zM543.7,321.4h3.4v3.4h-3.4zM548.5,321.2h3.4v3.4h-3.4zM553.2,321.0h3.4v3.4h-3.4zM557.9,320.9h3.4v3.4h-3.4zM562.7,320.7h3.4v3.4h-3.4zM567.4,320.6h3.4v3.4h-3.4zM572.1,320.5h3.4v3.4h-3.4zM576.9,320.4h3.4v3.4h-3.4zM581.6,320.3h3.4v3.4h-3.4zM586.4,320.3h3.4v3.4h-3.4zM591.1,320.2h3.4v3.4h-3.4zM595.8,320.2h3.4v3.4h-3.4zM600.6,320.2h3.4v3.4h-3.4zM605.3,320.2h3.4v3.4h-3.4zM610.0,320.2h3.4v3.4h-3.4zM614.8,320.2h3.4v3.4h-3.4zM619.5,320.2h3.4v3.4h-3.4zM624.2,320.3h3.4v3.4h-3.4zM629.0,320.3h3.4v3.4h-3.4zM633.7,320.3h3.4v3.4h-3.4zM638.5,320.3h3.4v3.4h-3.4zM643.2,320.4h3.4v3.4h-3.4zM647.9,320.4h3.4v3.4h-3.4zM652.7,320.4h3.4v3.4h-3.4zM657.4,320.4h3.4v3.4h-3.4zM662.1,320.5h3.4v3.4h-3.4zM666.9,320.5h3.4v3.4h-3.4zM671.6,320.5h3.4v3.4h-3.4zM676.3,320.6h3.4v3.4h-3.4zM681.1,320.6h3.4v3.4h-3.4zM685.8,320.6h3.4v3.4h-3.4zM690.6,320.6h3.4v3.4h-3.4zM695.3,320.7h3.4v3.4h-3.4zM700.0,320.7h3.4v3.4h-3.4zM704.8,320.7h3.4v3.4h-3.4zM709.5,320.7h3.4v3.4h-3.4zM714.2,320.8h3.4v3.4h-3.4zM719.0,320.8h3.4v3.4h-3.4zM723.7,320.8h3.4v3.4h-3.4zM728.4,320.8h3.4v3.4h-3.4zM733.2,320.9h3.4v3.4h-3.4zM737.9,320.9h3.4v3.4h-3.4zM742.6,320.9h3.4v3.4h-3.4zM747.4,320.9h3.4v3.4h-3.4zM752.1,321.0h3.4v3.4h-3.4zM756.9,321.0h3.4v3.4h-3.4zM761.6,321.0h3.4v3.4h-3.4zM766.3,321.0h3.4v3.4h-3.4zM771.1,321.1h3.4v3.4h-3.4zM775.8,321.1h3.4v3.4h-3.4zM780.5,321.1h3.4v3.4h-3.4zM785.3,321.1h3.4v3.4h-3.4zM790.0,321.1h3.4v3.4h-3.4zM794.7,321.2h3.4v3.4h-3.4zM799.5,321.2h3.4v3.4h-3.4zM804.2,321.2h3.4v3.4h-3.4zM809.0,321.2h3.4v3.4h-3.4zM813.7,321.2h3.4v3.4h-3.4zM818.4,321.2h3.4v3.4h-3.4zM823.2,321.2h3.4v3.4h-3.4zM827.9,321.3h3.4v3.4h-3.4zM832.6,321.3h3.4v3.4h-3.4zM837.4,321.3h3.4v3.4h-3.4zM842.1,321.3h3.4v3.4h-3.4zM846.8,321.3h3.4v3.4h-3.4zM851.6,321.3h3.4v3.4h-3.4zM856.3,321.3h3.4v3.4h-3.4zM861.1,321.3h3.4v3.4h-3.4zM865.8,321.3h3.4v3.4h-3.4zM870.5,321.3h3.4v3.4h-3.4zM875.3,321.3h3.4v3.4h-3.4zM880.0,321.3h3.4v3.4h-3.4zM884.7,321.3h3.4v3.4h-3.4zM889.5,321.3h3.4v3.4h-3.4zM894.2,321.3h3.4v3.4h-3.4zM898.9,321.3h3.4v3.4h-3.4zM903.7,321.4h3.4v3.4h-3.4zM908.4,321.4h3.4v3.4h-3.4zM913.1,321.4h3.4v3.4h-3.4zM917.9,321.4h3.4v3.4h-3.4zM922.6,321.4h3.4v3.4h-3.4zM927.4,321.4h3.4v3.4h-3.4zM932.1,321.4h3.4v3.4h-3.4zM936.8,321.4h3.4v3.4h-3.4zM941.6,321.4h3.4v3.4h-3.4zM946.3,321.4h3.4v3.4h-3.4zM951.0,321.4h3.4v3.4h-3.4zM955.8,321.4h3.4v3.4h-3.4zM960.5,321.4h3.4v3.4h-3.4zM965.2,321.4h3.4v3.4h-3.4zM970.0,321.4h3.4v3.4h-3.4zM974.7,321.4h3.4v3.4h-3.4zM979.5,321.4h3.4v3.4h-3.4zM984.2,321.4h3.4v3.4h-3.4zM988.9,321.4h3.4v3.4h-3.4zM993.7,321.4h3.4v3.4h-3.4zM998.4,321.4h3.4v3.4h-3.4zM1003.1,321.5h3.4v3.4h-3.4zM1007.9,321.5h3.4v3.4h-3.4zM1012.6,321.5h3.4v3.4h-3.4zM1017.3,321.5h3.4v3.4h-3.4zM1022.1,321.5h3.4v3.4h-3.4zM1026.8,321.5h3.4v3.4h-3.4zM1031.6,321.5h3.4v3.4h-3.4zM1036.3,321.5h3.4v3.4h-3.4zM1041.0,321.5h3.4v3.4h-3.4zM1045.8,321.5h3.4v3.4h-3.4zM1050.5,321.5h3.4v3.4h-3.4zM1055.2,321.5h3.4v3.4h-3.4zM1060.0,321.5h3.4v3.4h-3.4z" stroke="rgb(124,104,174)" stroke-width="1.3" fill="none"/><polyline points="95.5,321.9 100.2,321.9 105.0,321.9 109.7,321.9 114.4,321.9 119.2,321.9 123.9,321.9 128.7,321.9 133.4,321.9 138.1,321.9 142.9,321.9 147.6,321.9 152.3,321.8 157.1,321.8 161.8,321.8 166.5,321.8 171.3,321.8 176.0,321.8 180.8,321.8 185.5,321.8 190.2,321.8 195.0,321.7 199.7,321.7 204.4,321.7 209.2,321.7 213.9,321.7 218.6,321.7 223.4,321.7 228.1,321.7 232.8,321.6 237.6,321.6 242.3,321.6 247.1,321.6 251.8,321.6 256.5,321.6 261.3,321.5 266.0,321.5 270.7,321.5 275.5,321.5 280.2,321.5 284.9,321.4 289.7,321.4 294.4,321.4 299.2,321.4 303.9,321.4 308.6,321.3 313.4,321.3 318.1,321.3 322.8,321.3 327.6,321.2 332.3,321.2 337.0,321.2 341.8,321.2 346.5,321.1 351.3,321.1 356.0,321.1 360.7,321.0 365.5,321.0 370.2,321.0 374.9,320.9 379.7,320.9 384.4,320.9 389.1,320.8 393.9,320.8 398.6,320.8 403.3,320.8 408.1,320.7 412.8,320.7 417.6,320.7 422.3,320.7 427.0,320.6 431.8,320.6 436.5,320.6 441.2,320.6 446.0,320.6 450.7,320.7 455.4,320.7 460.2,320.8 464.9,320.9 469.7,321.1 474.4,321.3 479.1,321.5 483.9,321.8 488.6,322.0 493.3,322.2 498.1,322.5 502.8,322.6 507.5,322.8 512.3,322.8 517.0,322.8 521.8,322.8 526.5,322.6 531.2,322.4 536.0,322.2 540.7,321.9 545.4,321.6 550.2,321.2 554.9,320.9 559.6,320.5 564.4,320.1 569.1,319.9 573.8,319.7 578.6,319.5 583.3,319.3 588.1,319.2 592.8,319.1 597.5,319.0 602.3,319.0 607.0,319.0 611.7,319.0 616.5,319.1 621.2,319.1 625.9,319.2 630.7,319.3 635.4,319.3 640.2,319.4 644.9,319.4 649.6,319.5 654.4,319.5 659.1,319.6 663.8,319.7 668.6,319.7 673.3,319.8 678.0,319.9 682.8,319.9 687.5,320.0 692.3,320.1 697.0,320.1 701.7,320.2 706.5,320.2 711.2,320.3 715.9,320.3 720.7,320.4 725.4,320.5 730.1,320.5 734.9,320.6 739.6,320.6 744.3,320.7 749.1,320.7 753.8,320.8 758.6,320.8 763.3,320.9 768.0,320.9 772.8,321.0 777.5,321.0 782.2,321.1 787.0,321.1 791.7,321.2 796.4,321.2 801.2,321.2 805.9,321.3 810.7,321.3 815.4,321.3 820.1,321.4 824.9,321.4 829.6,321.4 834.3,321.4 839.1,321.5 843.8,321.5 848.5,321.5 853.3,321.5 858.0,321.5 862.8,321.5 867.5,321.5 872.2,321.6 877.0,321.6 881.7,321.6 886.4,321.6 891.2,321.6 895.9,321.6 900.6,321.6 905.4,321.6 910.1,321.6 914.8,321.6 919.6,321.7 924.3,321.7 929.1,321.7 933.8,321.7 938.5,321.7 943.3,321.7 948.0,321.7 952.7,321.7 957.5,321.7 962.2,321.8 966.9,321.8 971.7,321.8 976.4,321.8 981.2,321.8 985.9,321.8 990.6,321.8 995.4,321.8 1000.1,321.8 1004.8,321.8 1009.6,321.8 1014.3,321.9 1019.0,321.9 1023.8,321.9 1028.5,321.9 1033.3,321.9 1038.0,321.9 1042.7,321.9 1047.5,321.9 1052.2,321.9 1056.9,321.9 1061.7,321.9" fill="none" stroke="rgb(124,104,174)" stroke-width="1.3"/><path d="M93.8,320.2h3.4v3.4h-3.4zM98.5,320.2h3.4v3.4h-3.4zM103.3,320.2h3.4v3.4h-3.4zM108.0,320.2h3.4v3.4h-3.4zM112.7,320.2h3.4v3.4h-3.4zM117.5,320.2h3.4v3.4h-3.4zM122.2,320.2h3.4v3.4h-3.4zM127.0,320.2h3.4v3.4h-3.4zM131.7,320.2h3.4v3.4h-3.4zM136.4,320.2h3.4v3.4h-3.4zM141.2,320.2h3.4v3.4h-3.4zM145.9,320.2h3.4v3.4h-3.4zM150.6,320.1h3.4v3.4h-3.4zM155.4,320.1h3.4v3.4h-3.4zM160.1,320.1h3.4v3.4h-3.4zM164.8,320.1h3.4v3.4h-3.4zM169.6,320.1h3.4v3.4h-3.4zM174.3,320.1h3.4v3.4h-3.4zM179.1,320.1h3.4v3.4h-3.4zM183.8,320.1h3.4v3.4h-3.4zM188.5,320.1h3.4v3.4h-3.4zM193.3,320.0h3.4v3.4h-3.4zM198.0,320.0h3.4v3.4h-3.4zM202.7,320.0h3.4v3.4h-3.4zM207.5,320.0h3.4v3.4h-3.4zM212.2,320.0h3.4v3.4h-3.4zM216.9,320.0h3.4v3.4h-3.4zM221.7,320.0h3.4v3.4h-3.4zM226.4,320.0h3.4v3.4h-3.4zM231.1,319.9h3.4v3.4h-3.4zM235.9,319.9h3.4v3.4h-3.4zM240.6,319.9h3.4v3.4h-3.4zM245.4,319.9h3.4v3.4h-3.4zM250.1,319.9h3.4v3.4h-3.4zM254.8,319.9h3.4v3.4h-3.4zM259.6,319.8h3.4v3.4h-3.4zM264.3,319.8h3.4v3.4h-3.4zM269.0,319.8h3.4v3.4h-3.4zM273.8,319.8h3.4v3.4h-3.4zM278.5,319.8h3.4v3.4h-3.4zM283.2,319.7h3.4v3.4h-3.4zM288.0,319.7h3.4v3.4h-3.4zM292.7,319.7h3.4v3.4h-3.4zM297.5,319.7h3.4v3.4h-3.4zM302.2,319.7h3.4v3.4h-3.4zM306.9,319.6h3.4v3.4h-3.4zM311.7,319.6h3.4v3.4h-3.4zM316.4,319.6h3.4v3.4h-3.4zM321.1,319.6h3.4v3.4h-3.4zM325.9,319.5h3.4v3.4h-3.4zM330.6,319.5h3.4v3.4h-3.4zM335.3,319.5h3.4v3.4h-3.4zM340.1,319.5h3.4v3.4h-3.4zM344.8,319.4h3.4v3.4h-3.4zM349.6,319.4h3.4v3.4h-3.4zM354.3,319.4h3.4v3.4h-3.4zM359.0,319.3h3.4v3.4h-3.4zM363.8,319.3h3.4v3.4h-3.4zM368.5,319.3h3.4v3.4h-3.4zM373.2,319.2h3.4v3.4h-3.4zM378.0,319.2h3.4v3.4h-3.4zM382.7,319.2h3.4v3.4h-3.4zM387.4,319.1h3.4v3.4h-3.4zM392.2,319.1h3.4v3.4h-3.4zM396.9,319.1h3.4v3.4h-3.4zM401.6,319.1h3.4v3.4h-3.4zM406.4,319.0h3.4v3.4h-3.4zM411.1,319.0h3.4v3.4h-3.4zM415.9,319.0h3.4v3.4h-3.4zM420.6,319.0h3.4v3.4h-3.4zM425.3,318.9h3.4v3.4h-3.4zM430.1,318.9h3.4v3.4h-3.4zM434.8,318.9h3.4v3.4h-3.4zM439.5,318.9h3.4v3.4h-3.4zM444.3,318.9h3.4v3.4h-3.4zM449.0,319.0h3.4v3.4h-3.4zM453.7,319.0h3.4v3.4h-3.4zM458.5,319.1h3.4v3.4h-3.4zM463.2,319.2h3.4v3.4h-3.4zM468.0,319.4h3.4v3.4h-3.4zM472.7,319.6h3.4v3.4h-3.4zM477.4,319.8h3.4v3.4h-3.4zM482.2,320.1h3.4v3.4h-3.4zM486.9,320.3h3.4v3.4h-3.4zM491.6,320.5h3.4v3.4h-3.4zM496.4,320.8h3.4v3.4h-3.4zM501.1,320.9h3.4v3.4h-3.4zM505.8,321.1h3.4v3.4h-3.4zM510.6,321.1h3.4v3.4h-3.4zM515.3,321.1h3.4v3.4h-3.4zM520.1,321.1h3.4v3.4h-3.4zM524.8,320.9h3.4v3.4h-3.4zM529.5,320.7h3.4v3.4h-3.4zM534.3,320.5h3.4v3.4h-3.4zM539.0,320.2h3.4v3.4h-3.4zM543.7,319.9h3.4v3.4h-3.4zM548.5,319.5h3.4v3.4h-3.4zM553.2,319.2h3.4v3.4h-3.4zM557.9,318.8h3.4v3.4h-3.4zM562.7,318.4h3.4v3.4h-3.4zM567.4,318.2h3.4v3.4h-3.4zM572.1,318.0h3.4v3.4h-3.4zM576.9,317.8h3.4v3.4h-3.4zM581.6,317.6h3.4v3.4h-3.4zM586.4,317.5h3.4v3.4h-3.4zM591.1,317.4h3.4v3.4h-3.4zM595.8,317.3h3.4v3.4h-3.4zM600.6,317.3h3.4v3.4h-3.4zM605.3,317.3h3.4v3.4h-3.4zM610.0,317.3h3.4v3.4h-3.4zM614.8,317.4h3.4v3.4h-3.4zM619.5,317.4h3.4v3.4h-3.4zM624.2,317.5h3.4v3.4h-3.4zM629.0,317.6h3.4v3.4h-3.4zM633.7,317.6h3.4v3.4h-3.4zM638.5,317.7h3.4v3.4h-3.4zM643.2,317.7h3.4v3.4h-3.4zM647.9,317.8h3.4v3.4h-3.4zM652.7,317.8h3.4v3.4h-3.4zM657.4,317.9h3.4v3.4h-3.4zM662.1,318.0h3.4v3.4h-3.4zM666.9,318.0h3.4v3.4h-3.4zM671.6,318.1h3.4v3.4h-3.4zM676.3,318.2h3.4v3.4h-3.4zM681.1,318.2h3.4v3.4h-3.4zM685.8,318.3h3.4v3.4h-3.4zM690.6,318.4h3.4v3.4h-3.4zM695.3,318.4h3.4v3.4h-3.4zM700.0,318.5h3.4v3.4h-3.4zM704.8,318.5h3.4v3.4h-3.4zM709.5,318.6h3.4v3.4h-3.4zM714.2,318.6h3.4v3.4h-3.4zM719.0,318.7h3.4v3.4h-3.4zM723.7,318.8h3.4v3.4h-3.4zM728.4,318.8h3.4v3.4h-3.4zM733.2,318.9h3.4v3.4h-3.4zM737.9,318.9h3.4v3.4h-3.4zM742.6,319.0h3.4v3.4h-3.4zM747.4,319.0h3.4v3.4h-3.4zM752.1,319.1h3.4v3.4h-3.4zM756.9,319.1h3.4v3.4h-3.4zM761.6,319.2h3.4v3.4h-3.4zM766.3,319.2h3.4v3.4h-3.4zM771.1,319.3h3.4v3.4h-3.4zM775.8,319.3h3.4v3.4h-3.4zM780.5,319.4h3.4v3.4h-3.4zM785.3,319.4h3.4v3.4h-3.4zM790.0,319.5h3.4v3.4h-3.4zM794.7,319.5h3.4v3.4h-3.4zM799.5,319.5h3.4v3.4h-3.4zM804.2,319.6h3.4v3.4h-3.4zM809.0,319.6h3.4v3.4h-3.4zM813.7,319.6h3.4v3.4h-3.4zM818.4,319.7h3.4v3.4h-3.4zM823.2,319.7h3.4v3.4h-3.4zM827.9,319.7h3.4v3.4h-3.4zM832.6,319.7h3.4v3.4h-3.4zM837.4,319.8h3.4v3.4h-3.4zM842.1,319.8h3.4v3.4h-3.4zM846.8,319.8h3.4v3.4h-3.4zM851.6,319.8h3.4v3.4h-3.4zM856.3,319.8h3.4v3.4h-3.4zM861.1,319.8h3.4v3.4h-3.4zM865.8,319.8h3.4v3.4h-3.4zM870.5,319.9h3.4v3.4h-3.4zM875.3,319.9h3.4v3.4h-3.4zM880.0,319.9h3.4v3.4h-3.4zM884.7,319.9h3.4v3.4h-3.4zM889.5,319.9h3.4v3.4h-3.4zM894.2,319.9h3.4v3.4h-3.4zM898.9,319.9h3.4v3.4h-3.4zM903.7,319.9h3.4v3.4h-3.4zM908.4,319.9h3.4v3.4h-3.4zM913.1,319.9h3.4v3.4h-3.4zM917.9,320.0h3.4v3.4h-3.4zM922.6,320.0h3.4v3.4h-3.4zM927.4,320.0h3.4v3.4h-3.4zM932.1,320.0h3.4v3.4h-3.4zM936.8,320.0h3.4v3.4h-3.4zM941.6,320.0h3.4v3.4h-3.4zM946.3,320.0h3.4v3.4h-3.4zM951.0,320.0h3.4v3.4h-3.4zM955.8,320.0h3.4v3.4h-3.4zM960.5,320.1h3.4v3.4h-3.4zM965.2,320.1h3.4v3.4h-3.4zM970.0,320.1h3.4v3.4h-3.4zM974.7,320.1h3.4v3.4h-3.4zM979.5,320.1h3.4v3.4h-3.4zM984.2,320.1h3.4v3.4h-3.4zM988.9,320.1h3.4v3.4h-3.4zM993.7,320.1h3.4v3.4h-3.4zM998.4,320.1h3.4v3.4h-3.4zM1003.1,320.1h3.4v3.4h-3.4zM1007.9,320.1h3.4v3.4h-3.4zM1012.6,320.2h3.4v3.4h-3.4zM1017.3,320.2h3.4v3.4h-3.4zM1022.1,320.2h3.4v3.4h-3.4zM1026.8,320.2h3.4v3.4h-3.4zM1031.6,320.2h3.4v3.4h-3.4zM1036.3,320.2h3.4v3.4h-3.4zM1041.0,320.2h3.4v3.4h-3.4zM1045.8,320.2h3.4v3.4h-3.4zM1050.5,320.2h3.4v3.4h-3.4zM1055.2,320.2h3.4v3.4h-3.4zM1060.0,320.2h3.4v3.4h-3.4z" stroke="rgb(124,104,174)" stroke-width="1.3" fill="none"/><polyline points="95.5,320.3 100.2,320.3 105.0,320.3 109.7,320.3 114.4,320.3 119.2,320.3 123.9,320.2 128.7,320.2 133.4,320.2 138.1,320.2 142.9,320.2 147.6,320.2 152.3,320.1 157.1,320.1 161.8,320.1 166.5,320.1 171.3,320.0 176.0,320.0 180.8,320.0 185.5,320.0 190.2,319.9 195.0,319.9 199.7,319.9 204.4,319.9 209.2,319.8 213.9,319.8 218.6,319.8 223.4,319.8 228.1,319.7 232.8,319.7 237.6,319.7 242.3,319.6 247.1,319.6 251.8,319.6 256.5,319.5 261.3,319.5 266.0,319.4 270.7,319.4 275.5,319.4 280.2,319.3 284.9,319.3 289.7,319.2 294.4,319.2 299.2,319.1 303.9,319.1 308.6,319.1 313.4,319.0 318.1,319.0 322.8,318.9 327.6,318.9 332.3,318.8 337.0,318.8 341.8,318.7 346.5,318.6 351.3,318.6 356.0,318.5 360.7,318.4 365.5,318.3 370.2,318.3 374.9,318.2 379.7,318.1 384.4,318.0 389.1,318.0 393.9,317.9 398.6,317.8 403.3,317.8 408.1,317.7 412.8,317.7 417.6,317.6 422.3,317.6 427.0,317.5 431.8,317.5 436.5,317.5 441.2,317.5 446.0,317.5 450.7,317.5 455.4,317.6 460.2,317.8 464.9,318.0 469.7,318.3 474.4,318.7 479.1,319.1 483.9,319.5 488.6,320.0 493.3,320.4 498.1,320.8 502.8,321.1 507.5,321.4 512.3,321.5 517.0,321.5 521.8,321.4 526.5,321.1 531.2,320.7 536.0,320.2 540.7,319.7 545.4,319.1 550.2,318.5 554.9,317.7 559.6,316.9 564.4,316.2 569.1,315.6 573.8,315.1 578.6,314.7 583.3,314.3 588.1,314.0 592.8,313.8 597.5,313.6 602.3,313.6 607.0,313.6 611.7,313.7 616.5,313.8 621.2,313.9 625.9,314.1 630.7,314.2 635.4,314.4 640.2,314.5 644.9,314.6 649.6,314.8 654.4,314.9 659.1,315.1 663.8,315.2 668.6,315.4 673.3,315.6 678.0,315.7 682.8,315.9 687.5,316.0 692.3,316.2 697.0,316.3 701.7,316.4 706.5,316.6 711.2,316.7 715.9,316.8 720.7,317.0 725.4,317.1 730.1,317.2 734.9,317.3 739.6,317.5 744.3,317.6 749.1,317.7 753.8,317.8 758.6,317.9 763.3,318.1 768.0,318.2 772.8,318.3 777.5,318.4 782.2,318.5 787.0,318.6 791.7,318.7 796.4,318.8 801.2,318.8 805.9,318.9 810.7,319.0 815.4,319.1 820.1,319.1 824.9,319.2 829.6,319.2 834.3,319.3 839.1,319.3 843.8,319.4 848.5,319.4 853.3,319.4 858.0,319.5 862.8,319.5 867.5,319.5 872.2,319.5 877.0,319.5 881.7,319.6 886.4,319.6 891.2,319.6 895.9,319.6 900.6,319.6 905.4,319.7 910.1,319.7 914.8,319.7 919.6,319.7 924.3,319.8 929.1,319.8 933.8,319.8 938.5,319.8 943.3,319.8 948.0,319.9 952.7,319.9 957.5,319.9 962.2,319.9 966.9,320.0 971.7,320.0 976.4,320.0 981.2,320.0 985.9,320.0 990.6,320.1 995.4,320.1 1000.1,320.1 1004.8,320.1 1009.6,320.1 1014.3,320.2 1019.0,320.2 1023.8,320.2 1028.5,320.2 1033.3,320.2 1038.0,320.2 1042.7,320.3 1047.5,320.3 1052.2,320.3 1056.9,320.3 1061.7,320.3" fill="none" stroke="rgb(128,110,169)" stroke-width="1.3"/><path d="M93.8,318.6h3.4v3.4h-3.4zM98.5,318.6h3.4v3.4h-3.4zM103.3,318.6h3.4v3.4h-3.4zM108.0,318.6h3.4v3.4h-3.4zM112.7,318.6h3.4v3.4h-3.4zM117.5,318.6h3.4v3.4h-3.4zM122.2,318.5h3.4v3.4h-3.4zM127.0,318.5h3.4v3.4h-3.4zM131.7,318.5h3.4v3.4h-3.4zM136.4,318.5h3.4v3.4h-3.4zM141.2,318.5h3.4v3.4h-3.4zM145.9,318.5h3.4v3.4h-3.4zM150.6,318.4h3.4v3.4h-3.4zM155.4,318.4h3.4v3.4h-3.4zM160.1,318.4h3.4v3.4h-3.4zM164.8,318.4h3.4v3.4h-3.4zM169.6,318.3h3.4v3.4h-3.4zM174.3,318.3h3.4v3.4h-3.4zM179.1,318.3h3.4v3.4h-3.4zM183.8,318.3h3.4v3.4h-3.4zM188.5,318.2h3.4v3.4h-3.4zM193.3,318.2h3.4v3.4h-3.4zM198.0,318.2h3.4v3.4h-3.4zM202.7,318.2h3.4v3.4h-3.4zM207.5,318.1h3.4v3.4h-3.4zM212.2,318.1h3.4v3.4h-3.4zM216.9,318.1h3.4v3.4h-3.4zM221.7,318.1h3.4v3.4h-3.4zM226.4,318.0h3.4v3.4h-3.4zM231.1,318.0h3.4v3.4h-3.4zM235.9,318.0h3.4v3.4h-3.4zM240.6,317.9h3.4v3.4h-3.4zM245.4,317.9h3.4v3.4h-3.4zM250.1,317.9h3.4v3.4h-3.4zM254.8,317.8h3.4v3.4h-3.4zM259.6,317.8h3.4v3.4h-3.4zM264.3,317.7h3.4v3.4h-3.4zM269.0,317.7h3.4v3.4h-3.4zM273.8,317.7h3.4v3.4h-3.4zM278.5,317.6h3.4v3.4h-3.4zM283.2,317.6h3.4v3.4h-3.4zM288.0,317.5h3.4v3.4h-3.4zM292.7,317.5h3.4v3.4h-3.4zM297.5,317.4h3.4v3.4h-3.4zM302.2,317.4h3.4v3.4h-3.4zM306.9,317.4h3.4v3.4h-3.4zM311.7,317.3h3.4v3.4h-3.4zM316.4,317.3h3.4v3.4h-3.4zM321.1,317.2h3.4v3.4h-3.4zM325.9,317.2h3.4v3.4h-3.4zM330.6,317.1h3.4v3.4h-3.4zM335.3,317.1h3.4v3.4h-3.4zM340.1,317.0h3.4v3.4h-3.4zM344.8,316.9h3.4v3.4h-3.4zM349.6,316.9h3.4v3.4h-3.4zM354.3,316.8h3.4v3.4h-3.4zM359.0,316.7h3.4v3.4h-3.4zM363.8,316.6h3.4v3.4h-3.4zM368.5,316.6h3.4v3.4h-3.4zM373.2,316.5h3.4v3.4h-3.4zM378.0,316.4h3.4v3.4h-3.4zM382.7,316.3h3.4v3.4h-3.4zM387.4,316.3h3.4v3.4h-3.4zM392.2,316.2h3.4v3.4h-3.4zM396.9,316.1h3.4v3.4h-3.4zM401.6,316.1h3.4v3.4h-3.4zM406.4,316.0h3.4v3.4h-3.4zM411.1,316.0h3.4v3.4h-3.4zM415.9,315.9h3.4v3.4h-3.4zM420.6,315.9h3.4v3.4h-3.4zM425.3,315.8h3.4v3.4h-3.4zM430.1,315.8h3.4v3.4h-3.4zM434.8,315.8h3.4v3.4h-3.4zM439.5,315.8h3.4v3.4h-3.4zM444.3,315.8h3.4v3.4h-3.4zM449.0,315.8h3.4v3.4h-3.4zM453.7,315.9h3.4v3.4h-3.4zM458.5,316.1h3.4v3.4h-3.4zM463.2,316.3h3.4v3.4h-3.4zM468.0,316.6h3.4v3.4h-3.4zM472.7,317.0h3.4v3.4h-3.4zM477.4,317.4h3.4v3.4h-3.4zM482.2,317.8h3.4v3.4h-3.4zM486.9,318.3h3.4v3.4h-3.4zM491.6,318.7h3.4v3.4h-3.4zM496.4,319.1h3.4v3.4h-3.4zM501.1,319.4h3.4v3.4h-3.4zM505.8,319.7h3.4v3.4h-3.4zM510.6,319.8h3.4v3.4h-3.4zM515.3,319.8h3.4v3.4h-3.4zM520.1,319.7h3.4v3.4h-3.4zM524.8,319.4h3.4v3.4h-3.4zM529.5,319.0h3.4v3.4h-3.4zM534.3,318.5h3.4v3.4h-3.4zM539.0,318.0h3.4v3.4h-3.4zM543.7,317.4h3.4v3.4h-3.4zM548.5,316.8h3.4v3.4h-3.4zM553.2,316.0h3.4v3.4h-3.4zM557.9,315.2h3.4v3.4h-3.4zM562.7,314.5h3.4v3.4h-3.4zM567.4,313.9h3.4v3.4h-3.4zM572.1,313.4h3.4v3.4h-3.4zM576.9,313.0h3.4v3.4h-3.4zM581.6,312.6h3.4v3.4h-3.4zM586.4,312.3h3.4v3.4h-3.4zM591.1,312.1h3.4v3.4h-3.4zM595.8,311.9h3.4v3.4h-3.4zM600.6,311.9h3.4v3.4h-3.4zM605.3,311.9h3.4v3.4h-3.4zM610.0,312.0h3.4v3.4h-3.4zM614.8,312.1h3.4v3.4h-3.4zM619.5,312.2h3.4v3.4h-3.4zM624.2,312.4h3.4v3.4h-3.4zM629.0,312.5h3.4v3.4h-3.4zM633.7,312.7h3.4v3.4h-3.4zM638.5,312.8h3.4v3.4h-3.4zM643.2,312.9h3.4v3.4h-3.4zM647.9,313.1h3.4v3.4h-3.4zM652.7,313.2h3.4v3.4h-3.4zM657.4,313.4h3.4v3.4h-3.4zM662.1,313.5h3.4v3.4h-3.4zM666.9,313.7h3.4v3.4h-3.4zM671.6,313.9h3.4v3.4h-3.4zM676.3,314.0h3.4v3.4h-3.4zM681.1,314.2h3.4v3.4h-3.4zM685.8,314.3h3.4v3.4h-3.4zM690.6,314.5h3.4v3.4h-3.4zM695.3,314.6h3.4v3.4h-3.4zM700.0,314.7h3.4v3.4h-3.4zM704.8,314.9h3.4v3.4h-3.4zM709.5,315.0h3.4v3.4h-3.4zM714.2,315.1h3.4v3.4h-3.4zM719.0,315.3h3.4v3.4h-3.4zM723.7,315.4h3.4v3.4h-3.4zM728.4,315.5h3.4v3.4h-3.4zM733.2,315.6h3.4v3.4h-3.4zM737.9,315.8h3.4v3.4h-3.4zM742.6,315.9h3.4v3.4h-3.4zM747.4,316.0h3.4v3.4h-3.4zM752.1,316.1h3.4v3.4h-3.4zM756.9,316.2h3.4v3.4h-3.4zM761.6,316.4h3.4v3.4h-3.4zM766.3,316.5h3.4v3.4h-3.4zM771.1,316.6h3.4v3.4h-3.4zM775.8,316.7h3.4v3.4h-3.4zM780.5,316.8h3.4v3.4h-3.4zM785.3,316.9h3.4v3.4h-3.4zM790.0,317.0h3.4v3.4h-3.4zM794.7,317.1h3.4v3.4h-3.4zM799.5,317.1h3.4v3.4h-3.4zM804.2,317.2h3.4v3.4h-3.4zM809.0,317.3h3.4v3.4h-3.4zM813.7,317.4h3.4v3.4h-3.4zM818.4,317.4h3.4v3.4h-3.4zM823.2,317.5h3.4v3.4h-3.4zM827.9,317.5h3.4v3.4h-3.4zM832.6,317.6h3.4v3.4h-3.4zM837.4,317.6h3.4v3.4h-3.4zM842.1,317.7h3.4v3.4h-3.4zM846.8,317.7h3.4v3.4h-3.4zM851.6,317.7h3.4v3.4h-3.4zM856.3,317.8h3.4v3.4h-3.4zM861.1,317.8h3.4v3.4h-3.4zM865.8,317.8h3.4v3.4h-3.4zM870.5,317.8h3.4v3.4h-3.4zM875.3,317.8h3.4v3.4h-3.4zM880.0,317.9h3.4v3.4h-3.4zM884.7,317.9h3.4v3.4h-3.4zM889.5,317.9h3.4v3.4h-3.4zM894.2,317.9h3.4v3.4h-3.4zM898.9,317.9h3.4v3.4h-3.4zM903.7,318.0h3.4v3.4h-3.4zM908.4,318.0h3.4v3.4h-3.4zM913.1,318.0h3.4v3.4h-3.4zM917.9,318.0h3.4v3.4h-3.4zM922.6,318.1h3.4v3.4h-3.4zM927.4,318.1h3.4v3.4h-3.4zM932.1,318.1h3.4v3.4h-3.4zM936.8,318.1h3.4v3.4h-3.4zM941.6,318.1h3.4v3.4h-3.4zM946.3,318.2h3.4v3.4h-3.4zM951.0,318.2h3.4v3.4h-3.4zM955.8,318.2h3.4v3.4h-3.4zM960.5,318.2h3.4v3.4h-3.4zM965.2,318.3h3.4v3.4h-3.4zM970.0,318.3h3.4v3.4h-3.4zM974.7,318.3h3.4v3.4h-3.4zM979.5,318.3h3.4v3.4h-3.4zM984.2,318.3h3.4v3.4h-3.4zM988.9,318.4h3.4v3.4h-3.4zM993.7,318.4h3.4v3.4h-3.4zM998.4,318.4h3.4v3.4h-3.4zM1003.1,318.4h3.4v3.4h-3.4zM1007.9,318.4h3.4v3.4h-3.4zM1012.6,318.5h3.4v3.4h-3.4zM1017.3,318.5h3.4v3.4h-3.4zM1022.1,318.5h3.4v3.4h-3.4zM1026.8,318.5h3.4v3.4h-3.4zM1031.6,318.5h3.4v3.4h-3.4zM1036.3,318.5h3.4v3.4h-3.4zM1041.0,318.6h3.4v3.4h-3.4zM1045.8,318.6h3.4v3.4h-3.4zM1050.5,318.6h3.4v3.4h-3.4zM1055.2,318.6h3.4v3.4h-3.4zM1060.0,318.6h3.4v3.4h-3.4z" stroke="rgb(128,110,169)" stroke-width="1.3" fill="none"/><polyline points="95.5,318.4 100.2,318.4 105.0,318.4 109.7,318.4 114.4,318.3 119.2,318.3 123.9,318.3 128.7,318.2 133.4,318.2 138.1,318.2 142.9,318.1 147.6,318.1 152.3,318.1 157.1,318.0 161.8,318.0 166.5,317.9 171.3,317.9 176.0,317.8 180.8,317.8 185.5,317.8 190.2,317.7 195.0,317.7 199.7,317.6 204.4,317.6 209.2,317.5 213.9,317.4 218.6,317.4 223.4,317.3 228.1,317.3 232.8,317.2 237.6,317.2 242.3,317.1 247.1,317.0 251.8,317.0 256.5,316.9 261.3,316.8 266.0,316.7 270.7,316.7 275.5,316.6 280.2,316.5 284.9,316.4 289.7,316.3 294.4,316.2 299.2,316.2 303.9,316.1 308.6,316.0 313.4,315.9 318.1,315.8 322.8,315.7 327.6,315.6 332.3,315.5 337.0,315.4 341.8,315.3 346.5,315.1 351.3,315.0 356.0,314.9 360.7,314.7 365.5,314.5 370.2,314.4 374.9,314.2 379.7,314.1 384.4,313.9 389.1,313.8 393.9,313.6 398.6,313.5 403.3,313.4 408.1,313.3 412.8,313.2 417.6,313.0 422.3,312.9 427.0,312.8 431.8,312.7 436.5,312.7 441.2,312.7 446.0,312.7 450.7,312.8 455.4,312.9 460.2,313.2 464.9,313.7 469.7,314.2 474.4,314.8 479.1,315.5 483.9,316.3 488.6,317.1 493.3,317.8 498.1,318.5 502.8,319.0 507.5,319.4 512.3,319.6 517.0,319.6 521.8,319.4 526.5,318.9 531.2,318.3 536.0,317.4 540.7,316.5 545.4,315.5 550.2,314.2 554.9,312.7 559.6,311.0 564.4,309.5 569.1,308.3 573.8,307.3 578.6,306.3 583.3,305.5 588.1,304.8 592.8,304.3 597.5,303.9 602.3,303.8 607.0,303.9 611.7,304.1 616.5,304.3 621.2,304.6 625.9,305.0 630.7,305.3 635.4,305.7 640.2,306.0 644.9,306.3 649.6,306.7 654.4,307.0 659.1,307.4 663.8,307.7 668.6,308.1 673.3,308.5 678.0,308.9 682.8,309.2 687.5,309.6 692.3,309.9 697.0,310.2 701.7,310.5 706.5,310.8 711.2,311.0 715.9,311.3 720.7,311.6 725.4,311.9 730.1,312.1 734.9,312.4 739.6,312.7 744.3,312.9 749.1,313.2 753.8,313.5 758.6,313.7 763.3,313.9 768.0,314.2 772.8,314.4 777.5,314.6 782.2,314.8 787.0,315.0 791.7,315.2 796.4,315.4 801.2,315.6 805.9,315.7 810.7,315.9 815.4,316.0 820.1,316.1 824.9,316.2 829.6,316.4 834.3,316.4 839.1,316.5 843.8,316.6 848.5,316.7 853.3,316.7 858.0,316.8 862.8,316.8 867.5,316.9 872.2,316.9 877.0,316.9 881.7,317.0 886.4,317.0 891.2,317.1 895.9,317.1 900.6,317.1 905.4,317.2 910.1,317.2 914.8,317.3 919.6,317.3 924.3,317.4 929.1,317.4 933.8,317.4 938.5,317.5 943.3,317.5 948.0,317.6 952.7,317.6 957.5,317.6 962.2,317.7 966.9,317.7 971.7,317.8 976.4,317.8 981.2,317.8 985.9,317.9 990.6,317.9 995.4,318.0 1000.1,318.0 1004.8,318.0 1009.6,318.1 1014.3,318.1 1019.0,318.1 1023.8,318.2 1028.5,318.2 1033.3,318.2 1038.0,318.3 1042.7,318.3 1047.5,318.3 1052.2,318.4 1056.9,318.4 1061.7,318.4" fill="none" stroke="rgb(132,115,164)" stroke-width="1.3"/><path d="M93.8,316.7h3.4v3.4h-3.4zM98.5,316.7h3.4v3.4h-3.4zM103.3,316.7h3.4v3.4h-3.4zM108.0,316.7h3.4v3.4h-3.4zM112.7,316.6h3.4v3.4h-3.4zM117.5,316.6h3.4v3.4h-3.4zM122.2,316.6h3.4v3.4h-3.4zM127.0,316.5h3.4v3.4h-3.4zM131.7,316.5h3.4v3.4h-3.4zM136.4,316.5h3.4v3.4h-3.4zM141.2,316.4h3.4v3.4h-3.4zM145.9,316.4h3.4v3.4h-3.4zM150.6,316.4h3.4v3.4h-3.4zM155.4,316.3h3.4v3.4h-3.4zM160.1,316.3h3.4v3.4h-3.4zM164.8,316.2h3.4v3.4h-3.4zM169.6,316.2h3.4v3.4h-3.4zM174.3,316.1h3.4v3.4h-3.4zM179.1,316.1h3.4v3.4h-3.4zM183.8,316.1h3.4v3.4h-3.4zM188.5,316.0h3.4v3.4h-3.4zM193.3,316.0h3.4v3.4h-3.4zM198.0,315.9h3.4v3.4h-3.4zM202.7,315.9h3.4v3.4h-3.4zM207.5,315.8h3.4v3.4h-3.4zM212.2,315.7h3.4v3.4h-3.4zM216.9,315.7h3.4v3.4h-3.4zM221.7,315.6h3.4v3.4h-3.4zM226.4,315.6h3.4v3.4h-3.4zM231.1,315.5h3.4v3.4h-3.4zM235.9,315.5h3.4v3.4h-3.4zM240.6,315.4h3.4v3.4h-3.4zM245.4,315.3h3.4v3.4h-3.4zM250.1,315.3h3.4v3.4h-3.4zM254.8,315.2h3.4v3.4h-3.4zM259.6,315.1h3.4v3.4h-3.4zM264.3,315.0h3.4v3.4h-3.4zM269.0,315.0h3.4v3.4h-3.4zM273.8,314.9h3.4v3.4h-3.4zM278.5,314.8h3.4v3.4h-3.4zM283.2,314.7h3.4v3.4h-3.4zM288.0,314.6h3.4v3.4h-3.4zM292.7,314.5h3.4v3.4h-3.4zM297.5,314.5h3.4v3.4h-3.4zM302.2,314.4h3.4v3.4h-3.4zM306.9,314.3h3.4v3.4h-3.4zM311.7,314.2h3.4v3.4h-3.4zM316.4,314.1h3.4v3.4h-3.4zM321.1,314.0h3.4v3.4h-3.4zM325.9,313.9h3.4v3.4h-3.4zM330.6,313.8h3.4v3.4h-3.4zM335.3,313.7h3.4v3.4h-3.4zM340.1,313.6h3.4v3.4h-3.4zM344.8,313.4h3.4v3.4h-3.4zM349.6,313.3h3.4v3.4h-3.4zM354.3,313.2h3.4v3.4h-3.4zM359.0,313.0h3.4v3.4h-3.4zM363.8,312.8h3.4v3.4h-3.4zM368.5,312.7h3.4v3.4h-3.4zM373.2,312.5h3.4v3.4h-3.4zM378.0,312.4h3.4v3.4h-3.4zM382.7,312.2h3.4v3.4h-3.4zM387.4,312.1h3.4v3.4h-3.4zM392.2,311.9h3.4v3.4h-3.4zM396.9,311.8h3.4v3.4h-3.4zM401.6,311.7h3.4v3.4h-3.4zM406.4,311.6h3.4v3.4h-3.4zM411.1,311.5h3.4v3.4h-3.4zM415.9,311.3h3.4v3.4h-3.4zM420.6,311.2h3.4v3.4h-3.4zM425.3,311.1h3.4v3.4h-3.4zM430.1,311.0h3.4v3.4h-3.4zM434.8,311.0h3.4v3.4h-3.4zM439.5,311.0h3.4v3.4h-3.4zM444.3,311.0h3.4v3.4h-3.4zM449.0,311.1h3.4v3.4h-3.4zM453.7,311.2h3.4v3.4h-3.4zM458.5,311.5h3.4v3.4h-3.4zM463.2,312.0h3.4v3.4h-3.4zM468.0,312.5h3.4v3.4h-3.4zM472.7,313.1h3.4v3.4h-3.4zM477.4,313.8h3.4v3.4h-3.4zM482.2,314.6h3.4v3.4h-3.4zM486.9,315.4h3.4v3.4h-3.4zM491.6,316.1h3.4v3.4h-3.4zM496.4,316.8h3.4v3.4h-3.4zM501.1,317.3h3.4v3.4h-3.4zM505.8,317.7h3.4v3.4h-3.4zM510.6,317.9h3.4v3.4h-3.4zM515.3,317.9h3.4v3.4h-3.4zM520.1,317.7h3.4v3.4h-3.4zM524.8,317.2h3.4v3.4h-3.4zM529.5,316.6h3.4v3.4h-3.4zM534.3,315.7h3.4v3.4h-3.4zM539.0,314.8h3.4v3.4h-3.4zM543.7,313.8h3.4v3.4h-3.4zM548.5,312.5h3.4v3.4h-3.4zM553.2,311.0h3.4v3.4h-3.4zM557.9,309.3h3.4v3.4h-3.4zM562.7,307.8h3.4v3.4h-3.4zM567.4,306.6h3.4v3.4h-3.4zM572.1,305.6h3.4v3.4h-3.4zM576.9,304.6h3.4v3.4h-3.4zM581.6,303.8h3.4v3.4h-3.4zM586.4,303.1h3.4v3.4h-3.4zM591.1,302.6h3.4v3.4h-3.4zM595.8,302.2h3.4v3.4h-3.4zM600.6,302.1h3.4v3.4h-3.4zM605.3,302.2h3.4v3.4h-3.4zM610.0,302.4h3.4v3.4h-3.4zM614.8,302.6h3.4v3.4h-3.4zM619.5,302.9h3.4v3.4h-3.4zM624.2,303.3h3.4v3.4h-3.4zM629.0,303.6h3.4v3.4h-3.4zM633.7,304.0h3.4v3.4h-3.4zM638.5,304.3h3.4v3.4h-3.4zM643.2,304.6h3.4v3.4h-3.4zM647.9,305.0h3.4v3.4h-3.4zM652.7,305.3h3.4v3.4h-3.4zM657.4,305.7h3.4v3.4h-3.4zM662.1,306.0h3.4v3.4h-3.4zM666.9,306.4h3.4v3.4h-3.4zM671.6,306.8h3.4v3.4h-3.4zM676.3,307.2h3.4v3.4h-3.4zM681.1,307.5h3.4v3.4h-3.4zM685.8,307.9h3.4v3.4h-3.4zM690.6,308.2h3.4v3.4h-3.4zM695.3,308.5h3.4v3.4h-3.4zM700.0,308.8h3.4v3.4h-3.4zM704.8,309.1h3.4v3.4h-3.4zM709.5,309.3h3.4v3.4h-3.4zM714.2,309.6h3.4v3.4h-3.4zM719.0,309.9h3.4v3.4h-3.4zM723.7,310.2h3.4v3.4h-3.4zM728.4,310.4h3.4v3.4h-3.4zM733.2,310.7h3.4v3.4h-3.4zM737.9,311.0h3.4v3.4h-3.4zM742.6,311.2h3.4v3.4h-3.4zM747.4,311.5h3.4v3.4h-3.4zM752.1,311.8h3.4v3.4h-3.4zM756.9,312.0h3.4v3.4h-3.4zM761.6,312.2h3.4v3.4h-3.4zM766.3,312.5h3.4v3.4h-3.4zM771.1,312.7h3.4v3.4h-3.4zM775.8,312.9h3.4v3.4h-3.4zM780.5,313.1h3.4v3.4h-3.4zM785.3,313.3h3.4v3.4h-3.4zM790.0,313.5h3.4v3.4h-3.4zM794.7,313.7h3.4v3.4h-3.4zM799.5,313.9h3.4v3.4h-3.4zM804.2,314.0h3.4v3.4h-3.4zM809.0,314.2h3.4v3.4h-3.4zM813.7,314.3h3.4v3.4h-3.4zM818.4,314.4h3.4v3.4h-3.4zM823.2,314.5h3.4v3.4h-3.4zM827.9,314.7h3.4v3.4h-3.4zM832.6,314.7h3.4v3.4h-3.4zM837.4,314.8h3.4v3.4h-3.4zM842.1,314.9h3.4v3.4h-3.4zM846.8,315.0h3.4v3.4h-3.4zM851.6,315.0h3.4v3.4h-3.4zM856.3,315.1h3.4v3.4h-3.4zM861.1,315.1h3.4v3.4h-3.4zM865.8,315.2h3.4v3.4h-3.4zM870.5,315.2h3.4v3.4h-3.4zM875.3,315.2h3.4v3.4h-3.4zM880.0,315.3h3.4v3.4h-3.4zM884.7,315.3h3.4v3.4h-3.4zM889.5,315.4h3.4v3.4h-3.4zM894.2,315.4h3.4v3.4h-3.4zM898.9,315.4h3.4v3.4h-3.4zM903.7,315.5h3.4v3.4h-3.4zM908.4,315.5h3.4v3.4h-3.4zM913.1,315.6h3.4v3.4h-3.4zM917.9,315.6h3.4v3.4h-3.4zM922.6,315.7h3.4v3.4h-3.4zM927.4,315.7h3.4v3.4h-3.4zM932.1,315.7h3.4v3.4h-3.4zM936.8,315.8h3.4v3.4h-3.4zM941.6,315.8h3.4v3.4h-3.4zM946.3,315.9h3.4v3.4h-3.4zM951.0,315.9h3.4v3.4h-3.4zM955.8,315.9h3.4v3.4h-3.4zM960.5,316.0h3.4v3.4h-3.4zM965.2,316.0h3.4v3.4h-3.4zM970.0,316.1h3.4v3.4h-3.4zM974.7,316.1h3.4v3.4h-3.4zM979.5,316.1h3.4v3.4h-3.4zM984.2,316.2h3.4v3.4h-3.4zM988.9,316.2h3.4v3.4h-3.4zM993.7,316.3h3.4v3.4h-3.4zM998.4,316.3h3.4v3.4h-3.4zM1003.1,316.3h3.4v3.4h-3.4zM1007.9,316.4h3.4v3.4h-3.4zM1012.6,316.4h3.4v3.4h-3.4zM1017.3,316.4h3.4v3.4h-3.4zM1022.1,316.5h3.4v3.4h-3.4zM1026.8,316.5h3.4v3.4h-3.4zM1031.6,316.5h3.4v3.4h-3.4zM1036.3,316.6h3.4v3.4h-3.4zM1041.0,316.6h3.4v3.4h-3.4zM1045.8,316.6h3.4v3.4h-3.4zM1050.5,316.7h3.4v3.4h-3.4zM1055.2,316.7h3.4v3.4h-3.4zM1060.0,316.7h3.4v3.4h-3.4z" stroke="rgb(132,115,164)" stroke-width="1.3" fill="none"/><polyline points="95.5,316.2 100.2,316.2 105.0,316.1 109.7,316.1 114.4,316.1 119.2,316.0 123.9,316.0 128.7,315.9 133.4,315.9 138.1,315.8 142.9,315.8 147.6,315.7 152.3,315.6 157.1,315.6 161.8,315.5 166.5,315.4 171.3,315.3 176.0,315.3 180.8,315.2 185.5,315.1 190.2,315.0 195.0,314.9 199.7,314.9 204.4,314.8 209.2,314.7 213.9,314.6 218.6,314.5 223.4,314.4 228.1,314.3 232.8,314.2 237.6,314.1 242.3,314.0 247.1,313.9 251.8,313.8 256.5,313.7 261.3,313.5 266.0,313.4 270.7,313.3 275.5,313.2 280.2,313.0 284.9,312.9 289.7,312.7 294.4,312.6 299.2,312.4 303.9,312.3 308.6,312.1 313.4,311.9 318.1,311.8 322.8,311.6 327.6,311.4 332.3,311.2 337.0,311.1 341.8,310.9 346.5,310.6 351.3,310.4 356.0,310.1 360.7,309.9 365.5,309.6 370.2,309.3 374.9,309.0 379.7,308.7 384.4,308.4 389.1,308.2 393.9,307.9 398.6,307.7 403.3,307.5 408.1,307.3 412.8,307.1 417.6,306.8 422.3,306.6 427.0,306.4 431.8,306.3 436.5,306.2 441.2,306.1 446.0,306.1 450.7,306.2 455.4,306.5 460.2,307.0 464.9,307.6 469.7,308.5 474.4,309.5 479.1,310.6 483.9,311.8 488.6,313.0 493.3,314.2 498.1,315.2 502.8,316.0 507.5,316.5 512.3,316.9 517.0,316.9 521.8,316.6 526.5,315.8 531.2,314.8 536.0,313.5 540.7,312.0 545.4,310.3 550.2,308.2 554.9,305.5 559.6,302.5 564.4,299.7 569.1,297.3 573.8,295.5 578.6,293.7 583.3,292.0 588.1,290.6 592.8,289.5 597.5,288.8 602.3,288.6 607.0,288.8 611.7,289.1 616.5,289.7 621.2,290.3 625.9,291.0 630.7,291.8 635.4,292.5 640.2,293.2 644.9,293.8 649.6,294.5 654.4,295.2 659.1,295.9 663.8,296.6 668.6,297.4 673.3,298.1 678.0,298.9 682.8,299.6 687.5,300.2 692.3,300.9 697.0,301.4 701.7,302.0 706.5,302.5 711.2,303.1 715.9,303.6 720.7,304.1 725.4,304.6 730.1,305.2 734.9,305.7 739.6,306.2 744.3,306.7 749.1,307.1 753.8,307.6 758.6,308.0 763.3,308.5 768.0,308.9 772.8,309.3 777.5,309.7 782.2,310.1 787.0,310.4 791.7,310.8 796.4,311.1 801.2,311.4 805.9,311.6 810.7,311.9 815.4,312.1 820.1,312.4 824.9,312.6 829.6,312.7 834.3,312.9 839.1,313.0 843.8,313.2 848.5,313.3 853.3,313.4 858.0,313.5 862.8,313.5 867.5,313.6 872.2,313.7 877.0,313.8 881.7,313.8 886.4,313.9 891.2,314.0 895.9,314.0 900.6,314.1 905.4,314.2 910.1,314.2 914.8,314.3 919.6,314.4 924.3,314.4 929.1,314.5 933.8,314.6 938.5,314.7 943.3,314.7 948.0,314.8 952.7,314.9 957.5,314.9 962.2,315.0 966.9,315.1 971.7,315.1 976.4,315.2 981.2,315.3 985.9,315.3 990.6,315.4 995.4,315.4 1000.1,315.5 1004.8,315.6 1009.6,315.6 1014.3,315.7 1019.0,315.7 1023.8,315.8 1028.5,315.9 1033.3,315.9 1038.0,316.0 1042.7,316.0 1047.5,316.1 1052.2,316.1 1056.9,316.2 1061.7,316.2" fill="none" stroke="rgb(136,120,160)" stroke-width="1.3"/><path d="M93.8,314.5h3.4v3.4h-3.4zM98.5,314.5h3.4v3.4h-3.4zM103.3,314.4h3.4v3.4h-3.4zM108.0,314.4h3.4v3.4h-3.4zM112.7,314.4h3.4v3.4h-3.4zM117.5,314.3h3.4v3.4h-3.4zM122.2,314.3h3.4v3.4h-3.4zM127.0,314.2h3.4v3.4h-3.4zM131.7,314.2h3.4v3.4h-3.4zM136.4,314.1h3.4v3.4h-3.4zM141.2,314.1h3.4v3.4h-3.4zM145.9,314.0h3.4v3.4h-3.4zM150.6,313.9h3.4v3.4h-3.4zM155.4,313.9h3.4v3.4h-3.4zM160.1,313.8h3.4v3.4h-3.4zM164.8,313.7h3.4v3.4h-3.4zM169.6,313.6h3.4v3.4h-3.4zM174.3,313.6h3.4v3.4h-3.4zM179.1,313.5h3.4v3.4h-3.4zM183.8,313.4h3.4v3.4h-3.4zM188.5,313.3h3.4v3.4h-3.4zM193.3,313.2h3.4v3.4h-3.4zM198.0,313.2h3.4v3.4h-3.4zM202.7,313.1h3.4v3.4h-3.4zM207.5,313.0h3.4v3.4h-3.4zM212.2,312.9h3.4v3.4h-3.4zM216.9,312.8h3.4v3.4h-3.4zM221.7,312.7h3.4v3.4h-3.4zM226.4,312.6h3.4v3.4h-3.4zM231.1,312.5h3.4v3.4h-3.4zM235.9,312.4h3.4v3.4h-3.4zM240.6,312.3h3.4v3.4h-3.4zM245.4,312.2h3.4v3.4h-3.4zM250.1,312.1h3.4v3.4h-3.4zM254.8,312.0h3.4v3.4h-3.4zM259.6,311.8h3.4v3.4h-3.4zM264.3,311.7h3.4v3.4h-3.4zM269.0,311.6h3.4v3.4h-3.4zM273.8,311.5h3.4v3.4h-3.4zM278.5,311.3h3.4v3.4h-3.4zM283.2,311.2h3.4v3.4h-3.4zM288.0,311.0h3.4v3.4h-3.4zM292.7,310.9h3.4v3.4h-3.4zM297.5,310.7h3.4v3.4h-3.4zM302.2,310.6h3.4v3.4h-3.4zM306.9,310.4h3.4v3.4h-3.4zM311.7,310.2h3.4v3.4h-3.4zM316.4,310.1h3.4v3.4h-3.4zM321.1,309.9h3.4v3.4h-3.4zM325.9,309.7h3.4v3.4h-3.4zM330.6,309.5h3.4v3.4h-3.4zM335.3,309.4h3.4v3.4h-3.4zM340.1,309.2h3.4v3.4h-3.4zM344.8,308.9h3.4v3.4h-3.4zM349.6,308.7h3.4v3.4h-3.4zM354.3,308.4h3.4v3.4h-3.4zM359.0,308.2h3.4v3.4h-3.4zM363.8,307.9h3.4v3.4h-3.4zM368.5,307.6h3.4v3.4h-3.4zM373.2,307.3h3.4v3.4h-3.4zM378.0,307.0h3.4v3.4h-3.4zM382.7,306.7h3.4v3.4h-3.4zM387.4,306.5h3.4v3.4h-3.4zM392.2,306.2h3.4v3.4h-3.4zM396.9,306.0h3.4v3.4h-3.4zM401.6,305.8h3.4v3.4h-3.4zM406.4,305.6h3.4v3.4h-3.4zM411.1,305.4h3.4v3.4h-3.4zM415.9,305.1h3.4v3.4h-3.4zM420.6,304.9h3.4v3.4h-3.4zM425.3,304.7h3.4v3.4h-3.4zM430.1,304.6h3.4v3.4h-3.4zM434.8,304.5h3.4v3.4h-3.4zM439.5,304.4h3.4v3.4h-3.4zM444.3,304.4h3.4v3.4h-3.4zM449.0,304.5h3.4v3.4h-3.4zM453.7,304.8h3.4v3.4h-3.4zM458.5,305.3h3.4v3.4h-3.4zM463.2,305.9h3.4v3.4h-3.4zM468.0,306.8h3.4v3.4h-3.4zM472.7,307.8h3.4v3.4h-3.4zM477.4,308.9h3.4v3.4h-3.4zM482.2,310.1h3.4v3.4h-3.4zM486.9,311.3h3.4v3.4h-3.4zM491.6,312.5h3.4v3.4h-3.4zM496.4,313.5h3.4v3.4h-3.4zM501.1,314.3h3.4v3.4h-3.4zM505.8,314.8h3.4v3.4h-3.4zM510.6,315.2h3.4v3.4h-3.4zM515.3,315.2h3.4v3.4h-3.4zM520.1,314.9h3.4v3.4h-3.4zM524.8,314.1h3.4v3.4h-3.4zM529.5,313.1h3.4v3.4h-3.4zM534.3,311.8h3.4v3.4h-3.4zM539.0,310.3h3.4v3.4h-3.4zM543.7,308.6h3.4v3.4h-3.4zM548.5,306.5h3.4v3.4h-3.4zM553.2,303.8h3.4v3.4h-3.4zM557.9,300.8h3.4v3.4h-3.4zM562.7,298.0h3.4v3.4h-3.4zM567.4,295.6h3.4v3.4h-3.4zM572.1,293.8h3.4v3.4h-3.4zM576.9,292.0h3.4v3.4h-3.4zM581.6,290.3h3.4v3.4h-3.4zM586.4,288.9h3.4v3.4h-3.4zM591.1,287.8h3.4v3.4h-3.4zM595.8,287.1h3.4v3.4h-3.4zM600.6,286.9h3.4v3.4h-3.4zM605.3,287.1h3.4v3.4h-3.4zM610.0,287.4h3.4v3.4h-3.4zM614.8,288.0h3.4v3.4h-3.4zM619.5,288.6h3.4v3.4h-3.4zM624.2,289.3h3.4v3.4h-3.4zM629.0,290.1h3.4v3.4h-3.4zM633.7,290.8h3.4v3.4h-3.4zM638.5,291.5h3.4v3.4h-3.4zM643.2,292.1h3.4v3.4h-3.4zM647.9,292.8h3.4v3.4h-3.4zM652.7,293.5h3.4v3.4h-3.4zM657.4,294.2h3.4v3.4h-3.4zM662.1,294.9h3.4v3.4h-3.4zM666.9,295.7h3.4v3.4h-3.4zM671.6,296.4h3.4v3.4h-3.4zM676.3,297.2h3.4v3.4h-3.4zM681.1,297.9h3.4v3.4h-3.4zM685.8,298.5h3.4v3.4h-3.4zM690.6,299.2h3.4v3.4h-3.4zM695.3,299.7h3.4v3.4h-3.4zM700.0,300.3h3.4v3.4h-3.4zM704.8,300.8h3.4v3.4h-3.4zM709.5,301.4h3.4v3.4h-3.4zM714.2,301.9h3.4v3.4h-3.4zM719.0,302.4h3.4v3.4h-3.4zM723.7,302.9h3.4v3.4h-3.4zM728.4,303.5h3.4v3.4h-3.4zM733.2,304.0h3.4v3.4h-3.4zM737.9,304.5h3.4v3.4h-3.4zM742.6,305.0h3.4v3.4h-3.4zM747.4,305.4h3.4v3.4h-3.4zM752.1,305.9h3.4v3.4h-3.4zM756.9,306.3h3.4v3.4h-3.4zM761.6,306.8h3.4v3.4h-3.4zM766.3,307.2h3.4v3.4h-3.4zM771.1,307.6h3.4v3.4h-3.4zM775.8,308.0h3.4v3.4h-3.4zM780.5,308.4h3.4v3.4h-3.4zM785.3,308.7h3.4v3.4h-3.4zM790.0,309.1h3.4v3.4h-3.4zM794.7,309.4h3.4v3.4h-3.4zM799.5,309.7h3.4v3.4h-3.4zM804.2,309.9h3.4v3.4h-3.4zM809.0,310.2h3.4v3.4h-3.4zM813.7,310.4h3.4v3.4h-3.4zM818.4,310.7h3.4v3.4h-3.4zM823.2,310.9h3.4v3.4h-3.4zM827.9,311.0h3.4v3.4h-3.4zM832.6,311.2h3.4v3.4h-3.4zM837.4,311.3h3.4v3.4h-3.4zM842.1,311.5h3.4v3.4h-3.4zM846.8,311.6h3.4v3.4h-3.4zM851.6,311.7h3.4v3.4h-3.4zM856.3,311.8h3.4v3.4h-3.4zM861.1,311.8h3.4v3.4h-3.4zM865.8,311.9h3.4v3.4h-3.4zM870.5,312.0h3.4v3.4h-3.4zM875.3,312.1h3.4v3.4h-3.4zM880.0,312.1h3.4v3.4h-3.4zM884.7,312.2h3.4v3.4h-3.4zM889.5,312.3h3.4v3.4h-3.4zM894.2,312.3h3.4v3.4h-3.4zM898.9,312.4h3.4v3.4h-3.4zM903.7,312.5h3.4v3.4h-3.4zM908.4,312.5h3.4v3.4h-3.4zM913.1,312.6h3.4v3.4h-3.4zM917.9,312.7h3.4v3.4h-3.4zM922.6,312.7h3.4v3.4h-3.4zM927.4,312.8h3.4v3.4h-3.4zM932.1,312.9h3.4v3.4h-3.4zM936.8,313.0h3.4v3.4h-3.4zM941.6,313.0h3.4v3.4h-3.4zM946.3,313.1h3.4v3.4h-3.4zM951.0,313.2h3.4v3.4h-3.4zM955.8,313.2h3.4v3.4h-3.4zM960.5,313.3h3.4v3.4h-3.4zM965.2,313.4h3.4v3.4h-3.4zM970.0,313.4h3.4v3.4h-3.4zM974.7,313.5h3.4v3.4h-3.4zM979.5,313.6h3.4v3.4h-3.4zM984.2,313.6h3.4v3.4h-3.4zM988.9,313.7h3.4v3.4h-3.4zM993.7,313.7h3.4v3.4h-3.4zM998.4,313.8h3.4v3.4h-3.4zM1003.1,313.9h3.4v3.4h-3.4zM1007.9,313.9h3.4v3.4h-3.4zM1012.6,314.0h3.4v3.4h-3.4zM1017.3,314.0h3.4v3.4h-3.4zM1022.1,314.1h3.4v3.4h-3.4zM1026.8,314.2h3.4v3.4h-3.4zM1031.6,314.2h3.4v3.4h-3.4zM1036.3,314.3h3.4v3.4h-3.4zM1041.0,314.3h3.4v3.4h-3.4zM1045.8,314.4h3.4v3.4h-3.4zM1050.5,314.4h3.4v3.4h-3.4zM1055.2,314.5h3.4v3.4h-3.4zM1060.0,314.5h3.4v3.4h-3.4z" stroke="rgb(136,120,160)" stroke-width="1.3" fill="none"/><polyline points="95.5,313.6 100.2,313.6 105.0,313.6 109.7,313.5 114.4,313.5 119.2,313.4 123.9,313.3 128.7,313.3 133.4,313.2 138.1,313.1 142.9,313.0 147.6,312.9 152.3,312.8 157.1,312.7 161.8,312.6 166.5,312.5 171.3,312.4 176.0,312.3 180.8,312.2 185.5,312.0 190.2,311.9 195.0,311.8 199.7,311.7 204.4,311.5 209.2,311.4 213.9,311.3 218.6,311.1 223.4,311.0 228.1,310.8 232.8,310.7 237.6,310.5 242.3,310.4 247.1,310.2 251.8,310.0 256.5,309.8 261.3,309.6 266.0,309.4 270.7,309.2 275.5,309.0 280.2,308.8 284.9,308.6 289.7,308.4 294.4,308.1 299.2,307.9 303.9,307.6 308.6,307.4 313.4,307.1 318.1,306.9 322.8,306.6 327.6,306.3 332.3,306.0 337.0,305.7 341.8,305.4 346.5,305.1 351.3,304.7 356.0,304.3 360.7,303.8 365.5,303.4 370.2,302.9 374.9,302.4 379.7,301.9 384.4,301.5 389.1,301.1 393.9,300.7 398.6,300.3 403.3,300.0 408.1,299.6 412.8,299.2 417.6,298.9 422.3,298.5 427.0,298.2 431.8,297.9 436.5,297.7 441.2,297.6 446.0,297.6 450.7,297.7 455.4,298.1 460.2,298.7 464.9,299.7 469.7,300.9 474.4,302.3 479.1,303.9 483.9,305.5 488.6,307.1 493.3,308.7 498.1,310.0 502.8,311.2 507.5,311.9 512.3,312.4 517.0,312.4 521.8,312.0 526.5,311.0 531.2,309.5 536.0,307.6 540.7,305.4 545.4,302.9 550.2,299.7 554.9,295.4 559.6,290.6 564.4,285.9 569.1,282.0 573.8,278.9 578.6,275.8 583.3,273.0 588.1,270.5 592.8,268.5 597.5,267.3 602.3,266.9 607.0,267.2 611.7,267.9 616.5,268.8 621.2,270.0 625.9,271.3 630.7,272.7 635.4,274.0 640.2,275.2 644.9,276.3 649.6,277.5 654.4,278.8 659.1,280.1 663.8,281.4 668.6,282.7 673.3,284.0 678.0,285.3 682.8,286.5 687.5,287.7 692.3,288.8 697.0,289.8 701.7,290.7 706.5,291.6 711.2,292.6 715.9,293.5 720.7,294.3 725.4,295.2 730.1,296.1 734.9,296.9 739.6,297.8 744.3,298.6 749.1,299.4 753.8,300.1 758.6,300.9 763.3,301.6 768.0,302.3 772.8,302.9 777.5,303.6 782.2,304.2 787.0,304.7 791.7,305.3 796.4,305.8 801.2,306.2 805.9,306.6 810.7,307.0 815.4,307.4 820.1,307.8 824.9,308.1 829.6,308.4 834.3,308.6 839.1,308.9 843.8,309.0 848.5,309.2 853.3,309.4 858.0,309.5 862.8,309.6 867.5,309.7 872.2,309.9 877.0,310.0 881.7,310.1 886.4,310.2 891.2,310.3 895.9,310.4 900.6,310.5 905.4,310.6 910.1,310.7 914.8,310.8 919.6,310.9 924.3,311.0 929.1,311.1 933.8,311.2 938.5,311.3 943.3,311.4 948.0,311.5 952.7,311.7 957.5,311.8 962.2,311.9 966.9,312.0 971.7,312.1 976.4,312.2 981.2,312.3 985.9,312.3 990.6,312.4 995.4,312.5 1000.1,312.6 1004.8,312.7 1009.6,312.8 1014.3,312.9 1019.0,313.0 1023.8,313.1 1028.5,313.2 1033.3,313.2 1038.0,313.3 1042.7,313.4 1047.5,313.5 1052.2,313.6 1056.9,313.6 1061.7,313.7" fill="none" stroke="rgb(140,126,155)" stroke-width="1.3"/><path d="M93.8,311.9h3.4v3.4h-3.4zM98.5,311.9h3.4v3.4h-3.4zM103.3,311.9h3.4v3.4h-3.4zM108.0,311.8h3.4v3.4h-3.4zM112.7,311.8h3.4v3.4h-3.4zM117.5,311.7h3.4v3.4h-3.4zM122.2,311.6h3.4v3.4h-3.4zM127.0,311.6h3.4v3.4h-3.4zM131.7,311.5h3.4v3.4h-3.4zM136.4,311.4h3.4v3.4h-3.4zM141.2,311.3h3.4v3.4h-3.4zM145.9,311.2h3.4v3.4h-3.4zM150.6,311.1h3.4v3.4h-3.4zM155.4,311.0h3.4v3.4h-3.4zM160.1,310.9h3.4v3.4h-3.4zM164.8,310.8h3.4v3.4h-3.4zM169.6,310.7h3.4v3.4h-3.4zM174.3,310.6h3.4v3.4h-3.4zM179.1,310.5h3.4v3.4h-3.4zM183.8,310.3h3.4v3.4h-3.4zM188.5,310.2h3.4v3.4h-3.4zM193.3,310.1h3.4v3.4h-3.4zM198.0,310.0h3.4v3.4h-3.4zM202.7,309.8h3.4v3.4h-3.4zM207.5,309.7h3.4v3.4h-3.4zM212.2,309.6h3.4v3.4h-3.4zM216.9,309.4h3.4v3.4h-3.4zM221.7,309.3h3.4v3.4h-3.4zM226.4,309.1h3.4v3.4h-3.4zM231.1,309.0h3.4v3.4h-3.4zM235.9,308.8h3.4v3.4h-3.4zM240.6,308.7h3.4v3.4h-3.4zM245.4,308.5h3.4v3.4h-3.4zM250.1,308.3h3.4v3.4h-3.4zM254.8,308.1h3.4v3.4h-3.4zM259.6,307.9h3.4v3.4h-3.4zM264.3,307.7h3.4v3.4h-3.4zM269.0,307.5h3.4v3.4h-3.4zM273.8,307.3h3.4v3.4h-3.4zM278.5,307.1h3.4v3.4h-3.4zM283.2,306.9h3.4v3.4h-3.4zM288.0,306.7h3.4v3.4h-3.4zM292.7,306.4h3.4v3.4h-3.4zM297.5,306.2h3.4v3.4h-3.4zM302.2,305.9h3.4v3.4h-3.4zM306.9,305.7h3.4v3.4h-3.4zM311.7,305.4h3.4v3.4h-3.4zM316.4,305.2h3.4v3.4h-3.4zM321.1,304.9h3.4v3.4h-3.4zM325.9,304.6h3.4v3.4h-3.4zM330.6,304.3h3.4v3.4h-3.4zM335.3,304.0h3.4v3.4h-3.4zM340.1,303.7h3.4v3.4h-3.4zM344.8,303.4h3.4v3.4h-3.4zM349.6,303.0h3.4v3.4h-3.4zM354.3,302.6h3.4v3.4h-3.4zM359.0,302.1h3.4v3.4h-3.4zM363.8,301.7h3.4v3.4h-3.4zM368.5,301.2h3.4v3.4h-3.4zM373.2,300.7h3.4v3.4h-3.4zM378.0,300.2h3.4v3.4h-3.4zM382.7,299.8h3.4v3.4h-3.4zM387.4,299.4h3.4v3.4h-3.4zM392.2,299.0h3.4v3.4h-3.4zM396.9,298.6h3.4v3.4h-3.4zM401.6,298.3h3.4v3.4h-3.4zM406.4,297.9h3.4v3.4h-3.4zM411.1,297.5h3.4v3.4h-3.4zM415.9,297.2h3.4v3.4h-3.4zM420.6,296.8h3.4v3.4h-3.4zM425.3,296.5h3.4v3.4h-3.4zM430.1,296.2h3.4v3.4h-3.4zM434.8,296.0h3.4v3.4h-3.4zM439.5,295.9h3.4v3.4h-3.4zM444.3,295.9h3.4v3.4h-3.4zM449.0,296.0h3.4v3.4h-3.4zM453.7,296.4h3.4v3.4h-3.4zM458.5,297.0h3.4v3.4h-3.4zM463.2,298.0h3.4v3.4h-3.4zM468.0,299.2h3.4v3.4h-3.4zM472.7,300.6h3.4v3.4h-3.4zM477.4,302.2h3.4v3.4h-3.4zM482.2,303.8h3.4v3.4h-3.4zM486.9,305.4h3.4v3.4h-3.4zM491.6,307.0h3.4v3.4h-3.4zM496.4,308.3h3.4v3.4h-3.4zM501.1,309.5h3.4v3.4h-3.4zM505.8,310.2h3.4v3.4h-3.4zM510.6,310.7h3.4v3.4h-3.4zM515.3,310.7h3.4v3.4h-3.4zM520.1,310.3h3.4v3.4h-3.4zM524.8,309.3h3.4v3.4h-3.4zM529.5,307.8h3.4v3.4h-3.4zM534.3,305.9h3.4v3.4h-3.4zM539.0,303.7h3.4v3.4h-3.4zM543.7,301.2h3.4v3.4h-3.4zM548.5,298.0h3.4v3.4h-3.4zM553.2,293.7h3.4v3.4h-3.4zM557.9,288.9h3.4v3.4h-3.4zM562.7,284.2h3.4v3.4h-3.4zM567.4,280.3h3.4v3.4h-3.4zM572.1,277.2h3.4v3.4h-3.4zM576.9,274.1h3.4v3.4h-3.4zM581.6,271.3h3.4v3.4h-3.4zM586.4,268.8h3.4v3.4h-3.4zM591.1,266.8h3.4v3.4h-3.4zM595.8,265.6h3.4v3.4h-3.4zM600.6,265.2h3.4v3.4h-3.4zM605.3,265.5h3.4v3.4h-3.4zM610.0,266.2h3.4v3.4h-3.4zM614.8,267.1h3.4v3.4h-3.4zM619.5,268.3h3.4v3.4h-3.4zM624.2,269.6h3.4v3.4h-3.4zM629.0,271.0h3.4v3.4h-3.4zM633.7,272.3h3.4v3.4h-3.4zM638.5,273.5h3.4v3.4h-3.4zM643.2,274.6h3.4v3.4h-3.4zM647.9,275.8h3.4v3.4h-3.4zM652.7,277.1h3.4v3.4h-3.4zM657.4,278.4h3.4v3.4h-3.4zM662.1,279.7h3.4v3.4h-3.4zM666.9,281.0h3.4v3.4h-3.4zM671.6,282.3h3.4v3.4h-3.4zM676.3,283.6h3.4v3.4h-3.4zM681.1,284.8h3.4v3.4h-3.4zM685.8,286.0h3.4v3.4h-3.4zM690.6,287.1h3.4v3.4h-3.4zM695.3,288.1h3.4v3.4h-3.4zM700.0,289.0h3.4v3.4h-3.4zM704.8,289.9h3.4v3.4h-3.4zM709.5,290.9h3.4v3.4h-3.4zM714.2,291.8h3.4v3.4h-3.4zM719.0,292.6h3.4v3.4h-3.4zM723.7,293.5h3.4v3.4h-3.4zM728.4,294.4h3.4v3.4h-3.4zM733.2,295.2h3.4v3.4h-3.4zM737.9,296.1h3.4v3.4h-3.4zM742.6,296.9h3.4v3.4h-3.4zM747.4,297.7h3.4v3.4h-3.4zM752.1,298.4h3.4v3.4h-3.4zM756.9,299.2h3.4v3.4h-3.4zM761.6,299.9h3.4v3.4h-3.4zM766.3,300.6h3.4v3.4h-3.4zM771.1,301.2h3.4v3.4h-3.4zM775.8,301.9h3.4v3.4h-3.4zM780.5,302.5h3.4v3.4h-3.4zM785.3,303.0h3.4v3.4h-3.4zM790.0,303.6h3.4v3.4h-3.4zM794.7,304.1h3.4v3.4h-3.4zM799.5,304.5h3.4v3.4h-3.4zM804.2,304.9h3.4v3.4h-3.4zM809.0,305.3h3.4v3.4h-3.4zM813.7,305.7h3.4v3.4h-3.4zM818.4,306.1h3.4v3.4h-3.4zM823.2,306.4h3.4v3.4h-3.4zM827.9,306.7h3.4v3.4h-3.4zM832.6,306.9h3.4v3.4h-3.4zM837.4,307.2h3.4v3.4h-3.4zM842.1,307.3h3.4v3.4h-3.4zM846.8,307.5h3.4v3.4h-3.4zM851.6,307.7h3.4v3.4h-3.4zM856.3,307.8h3.4v3.4h-3.4zM861.1,307.9h3.4v3.4h-3.4zM865.8,308.0h3.4v3.4h-3.4zM870.5,308.2h3.4v3.4h-3.4zM875.3,308.3h3.4v3.4h-3.4zM880.0,308.4h3.4v3.4h-3.4zM884.7,308.5h3.4v3.4h-3.4zM889.5,308.6h3.4v3.4h-3.4zM894.2,308.7h3.4v3.4h-3.4zM898.9,308.8h3.4v3.4h-3.4zM903.7,308.9h3.4v3.4h-3.4zM908.4,309.0h3.4v3.4h-3.4zM913.1,309.1h3.4v3.4h-3.4zM917.9,309.2h3.4v3.4h-3.4zM922.6,309.3h3.4v3.4h-3.4zM927.4,309.4h3.4v3.4h-3.4zM932.1,309.5h3.4v3.4h-3.4zM936.8,309.6h3.4v3.4h-3.4zM941.6,309.7h3.4v3.4h-3.4zM946.3,309.8h3.4v3.4h-3.4zM951.0,310.0h3.4v3.4h-3.4zM955.8,310.1h3.4v3.4h-3.4zM960.5,310.2h3.4v3.4h-3.4zM965.2,310.3h3.4v3.4h-3.4zM970.0,310.4h3.4v3.4h-3.4zM974.7,310.5h3.4v3.4h-3.4zM979.5,310.6h3.4v3.4h-3.4zM984.2,310.6h3.4v3.4h-3.4zM988.9,310.7h3.4v3.4h-3.4zM993.7,310.8h3.4v3.4h-3.4zM998.4,310.9h3.4v3.4h-3.4zM1003.1,311.0h3.4v3.4h-3.4zM1007.9,311.1h3.4v3.4h-3.4zM1012.6,311.2h3.4v3.4h-3.4zM1017.3,311.3h3.4v3.4h-3.4zM1022.1,311.4h3.4v3.4h-3.4zM1026.8,311.5h3.4v3.4h-3.4zM1031.6,311.5h3.4v3.4h-3.4zM1036.3,311.6h3.4v3.4h-3.4zM1041.0,311.7h3.4v3.4h-3.4zM1045.8,311.8h3.4v3.4h-3.4zM1050.5,311.9h3.4v3.4h-3.4zM1055.2,311.9h3.4v3.4h-3.4zM1060.0,312.0h3.4v3.4h-3.4z" stroke="rgb(140,126,155)" stroke-width="1.3" fill="none"/><polyline points="95.5,310.8 100.2,310.7 105.0,310.7 109.7,310.6 114.4,310.5 119.2,310.4 123.9,310.3 128.7,310.2 133.4,310.1 138.1,310.0 142.9,309.9 147.6,309.8 152.3,309.7 157.1,309.5 161.8,309.4 166.5,309.2 171.3,309.1 176.0,308.9 180.8,308.8 185.5,308.6 190.2,308.4 195.0,308.3 199.7,308.1 204.4,307.9 209.2,307.7 213.9,307.6 218.6,307.4 223.4,307.2 228.1,307.0 232.8,306.8 237.6,306.6 242.3,306.4 247.1,306.1 251.8,305.9 256.5,305.6 261.3,305.4 266.0,305.1 270.7,304.8 275.5,304.5 280.2,304.2 284.9,303.9 289.7,303.6 294.4,303.3 299.2,303.0 303.9,302.6 308.6,302.3 313.4,301.9 318.1,301.6 322.8,301.2 327.6,300.8 332.3,300.4 337.0,300.0 341.8,299.6 346.5,299.1 351.3,298.6 356.0,298.0 360.7,297.4 365.5,296.7 370.2,296.1 374.9,295.4 379.7,294.7 384.4,294.1 389.1,293.5 393.9,293.0 398.6,292.4 403.3,292.0 408.1,291.5 412.8,291.0 417.6,290.4 422.3,289.9 427.0,289.5 431.8,289.1 436.5,288.8 441.2,288.6 446.0,288.5 450.7,288.6 455.4,288.9 460.2,289.7 464.9,290.8 469.7,292.2 474.4,293.9 479.1,295.8 483.9,297.7 488.6,299.6 493.3,301.4 498.1,303.0 502.8,304.3 507.5,305.3 512.3,305.8 517.0,305.9 521.8,305.4 526.5,304.1 531.2,302.2 536.0,299.8 540.7,297.0 545.4,293.9 550.2,289.6 554.9,283.8 559.6,277.2 564.4,270.8 569.1,265.4 573.8,261.1 578.6,256.8 583.3,252.8 588.1,249.3 592.8,246.5 597.5,244.7 602.3,244.2 607.0,244.6 611.7,245.6 616.5,247.0 621.2,248.8 625.9,250.7 630.7,252.7 635.4,254.6 640.2,256.3 644.9,258.0 649.6,259.8 654.4,261.6 659.1,263.5 663.8,265.4 668.6,267.3 673.3,269.2 678.0,271.1 682.8,272.9 687.5,274.5 692.3,276.1 697.0,277.5 701.7,278.9 706.5,280.2 711.2,281.5 715.9,282.8 720.7,284.0 725.4,285.3 730.1,286.5 734.9,287.7 739.6,288.9 744.3,290.0 749.1,291.1 753.8,292.2 758.6,293.3 763.3,294.3 768.0,295.2 772.8,296.1 777.5,297.0 782.2,297.9 787.0,298.6 791.7,299.4 796.4,300.0 801.2,300.7 805.9,301.3 810.7,301.8 815.4,302.3 820.1,302.8 824.9,303.3 829.6,303.7 834.3,304.0 839.1,304.3 843.8,304.5 848.5,304.8 853.3,305.0 858.0,305.2 862.8,305.3 867.5,305.5 872.2,305.7 877.0,305.8 881.7,305.9 886.4,306.1 891.2,306.2 895.9,306.4 900.6,306.5 905.4,306.7 910.1,306.8 914.8,306.9 919.6,307.1 924.3,307.2 929.1,307.4 933.8,307.5 938.5,307.7 943.3,307.8 948.0,307.9 952.7,308.1 957.5,308.2 962.2,308.4 966.9,308.5 971.7,308.6 976.4,308.8 981.2,308.9 985.9,309.0 990.6,309.2 995.4,309.3 1000.1,309.4 1004.8,309.5 1009.6,309.7 1014.3,309.8 1019.0,309.9 1023.8,310.0 1028.5,310.1 1033.3,310.2 1038.0,310.3 1042.7,310.4 1047.5,310.6 1052.2,310.7 1056.9,310.8 1061.7,310.9" fill="none" stroke="rgb(144,132,150)" stroke-width="1.3"/><path d="M93.8,309.1h3.4v3.4h-3.4zM98.5,309.0h3.4v3.4h-3.4zM103.3,309.0h3.4v3.4h-3.4zM108.0,308.9h3.4v3.4h-3.4zM112.7,308.8h3.4v3.4h-3.4zM117.5,308.7h3.4v3.4h-3.4zM122.2,308.6h3.4v3.4h-3.4zM127.0,308.5h3.4v3.4h-3.4zM131.7,308.4h3.4v3.4h-3.4zM136.4,308.3h3.4v3.4h-3.4zM141.2,308.2h3.4v3.4h-3.4zM145.9,308.1h3.4v3.4h-3.4zM150.6,308.0h3.4v3.4h-3.4zM155.4,307.8h3.4v3.4h-3.4zM160.1,307.7h3.4v3.4h-3.4zM164.8,307.5h3.4v3.4h-3.4zM169.6,307.4h3.4v3.4h-3.4zM174.3,307.2h3.4v3.4h-3.4zM179.1,307.1h3.4v3.4h-3.4zM183.8,306.9h3.4v3.4h-3.4zM188.5,306.7h3.4v3.4h-3.4zM193.3,306.6h3.4v3.4h-3.4zM198.0,306.4h3.4v3.4h-3.4zM202.7,306.2h3.4v3.4h-3.4zM207.5,306.0h3.4v3.4h-3.4zM212.2,305.9h3.4v3.4h-3.4zM216.9,305.7h3.4v3.4h-3.4zM221.7,305.5h3.4v3.4h-3.4zM226.4,305.3h3.4v3.4h-3.4zM231.1,305.1h3.4v3.4h-3.4zM235.9,304.9h3.4v3.4h-3.4zM240.6,304.7h3.4v3.4h-3.4zM245.4,304.4h3.4v3.4h-3.4zM250.1,304.2h3.4v3.4h-3.4zM254.8,303.9h3.4v3.4h-3.4zM259.6,303.7h3.4v3.4h-3.4zM264.3,303.4h3.4v3.4h-3.4zM269.0,303.1h3.4v3.4h-3.4zM273.8,302.8h3.4v3.4h-3.4zM278.5,302.5h3.4v3.4h-3.4zM283.2,302.2h3.4v3.4h-3.4zM288.0,301.9h3.4v3.4h-3.4zM292.7,301.6h3.4v3.4h-3.4zM297.5,301.3h3.4v3.4h-3.4zM302.2,300.9h3.4v3.4h-3.4zM306.9,300.6h3.4v3.4h-3.4zM311.7,300.2h3.4v3.4h-3.4zM316.4,299.9h3.4v3.4h-3.4zM321.1,299.5h3.4v3.4h-3.4zM325.9,299.1h3.4v3.4h-3.4zM330.6,298.7h3.4v3.4h-3.4zM335.3,298.3h3.4v3.4h-3.4zM340.1,297.9h3.4v3.4h-3.4zM344.8,297.4h3.4v3.4h-3.4zM349.6,296.9h3.4v3.4h-3.4zM354.3,296.3h3.4v3.4h-3.4zM359.0,295.7h3.4v3.4h-3.4zM363.8,295.0h3.4v3.4h-3.4zM368.5,294.4h3.4v3.4h-3.4zM373.2,293.7h3.4v3.4h-3.4zM378.0,293.0h3.4v3.4h-3.4zM382.7,292.4h3.4v3.4h-3.4zM387.4,291.8h3.4v3.4h-3.4zM392.2,291.3h3.4v3.4h-3.4zM396.9,290.7h3.4v3.4h-3.4zM401.6,290.3h3.4v3.4h-3.4zM406.4,289.8h3.4v3.4h-3.4zM411.1,289.3h3.4v3.4h-3.4zM415.9,288.7h3.4v3.4h-3.4zM420.6,288.2h3.4v3.4h-3.4zM425.3,287.8h3.4v3.4h-3.4zM430.1,287.4h3.4v3.4h-3.4zM434.8,287.1h3.4v3.4h-3.4zM439.5,286.9h3.4v3.4h-3.4zM444.3,286.8h3.4v3.4h-3.4zM449.0,286.9h3.4v3.4h-3.4zM453.7,287.2h3.4v3.4h-3.4zM458.5,288.0h3.4v3.4h-3.4zM463.2,289.1h3.4v3.4h-3.4zM468.0,290.5h3.4v3.4h-3.4zM472.7,292.2h3.4v3.4h-3.4zM477.4,294.1h3.4v3.4h-3.4zM482.2,296.0h3.4v3.4h-3.4zM486.9,297.9h3.4v3.4h-3.4zM491.6,299.7h3.4v3.4h-3.4zM496.4,301.3h3.4v3.4h-3.4zM501.1,302.6h3.4v3.4h-3.4zM505.8,303.6h3.4v3.4h-3.4zM510.6,304.1h3.4v3.4h-3.4zM515.3,304.2h3.4v3.4h-3.4zM520.1,303.7h3.4v3.4h-3.4zM524.8,302.4h3.4v3.4h-3.4zM529.5,300.5h3.4v3.4h-3.4zM534.3,298.1h3.4v3.4h-3.4zM539.0,295.3h3.4v3.4h-3.4zM543.7,292.2h3.4v3.4h-3.4zM548.5,287.9h3.4v3.4h-3.4zM553.2,282.1h3.4v3.4h-3.4zM557.9,275.5h3.4v3.4h-3.4zM562.7,269.1h3.4v3.4h-3.4zM567.4,263.7h3.4v3.4h-3.4zM572.1,259.4h3.4v3.4h-3.4zM576.9,255.1h3.4v3.4h-3.4zM581.6,251.1h3.4v3.4h-3.4zM586.4,247.6h3.4v3.4h-3.4zM591.1,244.8h3.4v3.4h-3.4zM595.8,243.0h3.4v3.4h-3.4zM600.6,242.5h3.4v3.4h-3.4zM605.3,242.9h3.4v3.4h-3.4zM610.0,243.9h3.4v3.4h-3.4zM614.8,245.3h3.4v3.4h-3.4zM619.5,247.1h3.4v3.4h-3.4zM624.2,249.0h3.4v3.4h-3.4zM629.0,251.0h3.4v3.4h-3.4zM633.7,252.9h3.4v3.4h-3.4zM638.5,254.6h3.4v3.4h-3.4zM643.2,256.3h3.4v3.4h-3.4zM647.9,258.1h3.4v3.4h-3.4zM652.7,259.9h3.4v3.4h-3.4zM657.4,261.8h3.4v3.4h-3.4zM662.1,263.7h3.4v3.4h-3.4zM666.9,265.6h3.4v3.4h-3.4zM671.6,267.5h3.4v3.4h-3.4zM676.3,269.4h3.4v3.4h-3.4zM681.1,271.2h3.4v3.4h-3.4zM685.8,272.8h3.4v3.4h-3.4zM690.6,274.4h3.4v3.4h-3.4zM695.3,275.8h3.4v3.4h-3.4zM700.0,277.2h3.4v3.4h-3.4zM704.8,278.5h3.4v3.4h-3.4zM709.5,279.8h3.4v3.4h-3.4zM714.2,281.1h3.4v3.4h-3.4zM719.0,282.3h3.4v3.4h-3.4zM723.7,283.6h3.4v3.4h-3.4zM728.4,284.8h3.4v3.4h-3.4zM733.2,286.0h3.4v3.4h-3.4zM737.9,287.2h3.4v3.4h-3.4zM742.6,288.3h3.4v3.4h-3.4zM747.4,289.4h3.4v3.4h-3.4zM752.1,290.5h3.4v3.4h-3.4zM756.9,291.6h3.4v3.4h-3.4zM761.6,292.6h3.4v3.4h-3.4zM766.3,293.5h3.4v3.4h-3.4zM771.1,294.4h3.4v3.4h-3.4zM775.8,295.3h3.4v3.4h-3.4zM780.5,296.2h3.4v3.4h-3.4zM785.3,296.9h3.4v3.4h-3.4zM790.0,297.7h3.4v3.4h-3.4zM794.7,298.3h3.4v3.4h-3.4zM799.5,299.0h3.4v3.4h-3.4zM804.2,299.6h3.4v3.4h-3.4zM809.0,300.1h3.4v3.4h-3.4zM813.7,300.6h3.4v3.4h-3.4zM818.4,301.1h3.4v3.4h-3.4zM823.2,301.6h3.4v3.4h-3.4zM827.9,302.0h3.4v3.4h-3.4zM832.6,302.3h3.4v3.4h-3.4zM837.4,302.6h3.4v3.4h-3.4zM842.1,302.8h3.4v3.4h-3.4zM846.8,303.1h3.4v3.4h-3.4zM851.6,303.3h3.4v3.4h-3.4zM856.3,303.5h3.4v3.4h-3.4zM861.1,303.6h3.4v3.4h-3.4zM865.8,303.8h3.4v3.4h-3.4zM870.5,304.0h3.4v3.4h-3.4zM875.3,304.1h3.4v3.4h-3.4zM880.0,304.2h3.4v3.4h-3.4zM884.7,304.4h3.4v3.4h-3.4zM889.5,304.5h3.4v3.4h-3.4zM894.2,304.7h3.4v3.4h-3.4zM898.9,304.8h3.4v3.4h-3.4zM903.7,305.0h3.4v3.4h-3.4zM908.4,305.1h3.4v3.4h-3.4zM913.1,305.2h3.4v3.4h-3.4zM917.9,305.4h3.4v3.4h-3.4zM922.6,305.5h3.4v3.4h-3.4zM927.4,305.7h3.4v3.4h-3.4zM932.1,305.8h3.4v3.4h-3.4zM936.8,306.0h3.4v3.4h-3.4zM941.6,306.1h3.4v3.4h-3.4zM946.3,306.2h3.4v3.4h-3.4zM951.0,306.4h3.4v3.4h-3.4zM955.8,306.5h3.4v3.4h-3.4zM960.5,306.7h3.4v3.4h-3.4zM965.2,306.8h3.4v3.4h-3.4zM970.0,306.9h3.4v3.4h-3.4zM974.7,307.1h3.4v3.4h-3.4zM979.5,307.2h3.4v3.4h-3.4zM984.2,307.3h3.4v3.4h-3.4zM988.9,307.5h3.4v3.4h-3.4zM993.7,307.6h3.4v3.4h-3.4zM998.4,307.7h3.4v3.4h-3.4zM1003.1,307.8h3.4v3.4h-3.4zM1007.9,308.0h3.4v3.4h-3.4zM1012.6,308.1h3.4v3.4h-3.4zM1017.3,308.2h3.4v3.4h-3.4zM1022.1,308.3h3.4v3.4h-3.4zM1026.8,308.4h3.4v3.4h-3.4zM1031.6,308.5h3.4v3.4h-3.4zM1036.3,308.6h3.4v3.4h-3.4zM1041.0,308.7h3.4v3.4h-3.4zM1045.8,308.9h3.4v3.4h-3.4zM1050.5,309.0h3.4v3.4h-3.4zM1055.2,309.1h3.4v3.4h-3.4zM1060.0,309.2h3.4v3.4h-3.4z" stroke="rgb(144,132,150)" stroke-width="1.3" fill="none"/><polyline points="95.5,307.3 100.2,307.3 105.0,307.2 109.7,307.1 114.4,307.0 119.2,306.9 123.9,306.8 128.7,306.6 133.4,306.5 138.1,306.4 142.9,306.2 147.6,306.0 152.3,305.8 157.1,305.7 161.8,305.5 166.5,305.3 171.3,305.0 176.0,304.8 180.8,304.6 185.5,304.4 190.2,304.2 195.0,303.9 199.7,303.7 204.4,303.4 209.2,303.2 213.9,303.0 218.6,302.7 223.4,302.4 228.1,302.2 232.8,301.9 237.6,301.6 242.3,301.3 247.1,300.9 251.8,300.6 256.5,300.2 261.3,299.9 266.0,299.5 270.7,299.1 275.5,298.7 280.2,298.3 284.9,297.8 289.7,297.4 294.4,296.9 299.2,296.5 303.9,296.0 308.6,295.5 313.4,295.0 318.1,294.5 322.8,293.9 327.6,293.4 332.3,292.8 337.0,292.2 341.8,291.6 346.5,290.9 351.3,290.2 356.0,289.3 360.7,288.4 365.5,287.5 370.2,286.5 374.9,285.6 379.7,284.6 384.4,283.7 389.1,282.8 393.9,282.0 398.6,281.2 403.3,280.5 408.1,279.8 412.8,279.0 417.6,278.2 422.3,277.5 427.0,276.8 431.8,276.1 436.5,275.6 441.2,275.2 446.0,274.9 450.7,274.8 455.4,275.0 460.2,275.7 464.9,276.7 469.7,278.1 474.4,279.7 479.1,281.4 483.9,283.3 488.6,285.1 493.3,286.9 498.1,288.5 502.8,289.8 507.5,290.9 512.3,291.5 517.0,291.7 521.8,291.0 526.5,289.4 531.2,287.0 536.0,284.1 540.7,280.7 545.4,277.0 550.2,271.4 554.9,263.3 559.6,254.1 564.4,245.0 569.1,237.4 573.8,231.3 578.6,225.2 583.3,219.1 588.1,213.8 592.8,209.5 597.5,206.7 602.3,206.0 607.0,206.7 611.7,208.3 616.5,210.7 621.2,213.5 625.9,216.6 630.7,219.8 635.4,222.8 640.2,225.6 644.9,228.2 649.6,231.0 654.4,233.9 659.1,236.9 663.8,239.9 668.6,242.9 673.3,245.9 678.0,248.8 682.8,251.5 687.5,254.1 692.3,256.5 697.0,258.7 701.7,260.7 706.5,262.8 711.2,264.8 715.9,266.7 720.7,268.6 725.4,270.5 730.1,272.4 734.9,274.2 739.6,275.9 744.3,277.6 749.1,279.3 753.8,280.9 758.6,282.4 763.3,283.9 768.0,285.3 772.8,286.6 777.5,287.9 782.2,289.1 787.0,290.3 791.7,291.3 796.4,292.3 801.2,293.2 805.9,294.0 810.7,294.8 815.4,295.6 820.1,296.3 824.9,296.9 829.6,297.5 834.3,298.0 839.1,298.4 843.8,298.7 848.5,299.0 853.3,299.3 858.0,299.6 862.8,299.8 867.5,300.1 872.2,300.3 877.0,300.5 881.7,300.7 886.4,300.9 891.2,301.1 895.9,301.3 900.6,301.5 905.4,301.7 910.1,301.9 914.8,302.1 919.6,302.3 924.3,302.5 929.1,302.7 933.8,302.9 938.5,303.1 943.3,303.3 948.0,303.5 952.7,303.7 957.5,303.9 962.2,304.1 966.9,304.2 971.7,304.4 976.4,304.6 981.2,304.8 985.9,305.0 990.6,305.1 995.4,305.3 1000.1,305.5 1004.8,305.7 1009.6,305.8 1014.3,306.0 1019.0,306.2 1023.8,306.3 1028.5,306.5 1033.3,306.6 1038.0,306.8 1042.7,306.9 1047.5,307.1 1052.2,307.2 1056.9,307.3 1061.7,307.5" fill="none" stroke="rgb(148,137,146)" stroke-width="1.3"/><path d="M93.8,305.6h3.4v3.4h-3.4zM98.5,305.6h3.4v3.4h-3.4zM103.3,305.5h3.4v3.4h-3.4zM108.0,305.4h3.4v3.4h-3.4zM112.7,305.3h3.4v3.4h-3.4zM117.5,305.2h3.4v3.4h-3.4zM122.2,305.1h3.4v3.4h-3.4zM127.0,304.9h3.4v3.4h-3.4zM131.7,304.8h3.4v3.4h-3.4zM136.4,304.7h3.4v3.4h-3.4zM141.2,304.5h3.4v3.4h-3.4zM145.9,304.3h3.4v3.4h-3.4zM150.6,304.1h3.4v3.4h-3.4zM155.4,304.0h3.4v3.4h-3.4zM160.1,303.8h3.4v3.4h-3.4zM164.8,303.6h3.4v3.4h-3.4zM169.6,303.3h3.4v3.4h-3.4zM174.3,303.1h3.4v3.4h-3.4zM179.1,302.9h3.4v3.4h-3.4zM183.8,302.7h3.4v3.4h-3.4zM188.5,302.5h3.4v3.4h-3.4zM193.3,302.2h3.4v3.4h-3.4zM198.0,302.0h3.4v3.4h-3.4zM202.7,301.7h3.4v3.4h-3.4zM207.5,301.5h3.4v3.4h-3.4zM212.2,301.3h3.4v3.4h-3.4zM216.9,301.0h3.4v3.4h-3.4zM221.7,300.7h3.4v3.4h-3.4zM226.4,300.5h3.4v3.4h-3.4zM231.1,300.2h3.4v3.4h-3.4zM235.9,299.9h3.4v3.4h-3.4zM240.6,299.6h3.4v3.4h-3.4zM245.4,299.2h3.4v3.4h-3.4zM250.1,298.9h3.4v3.4h-3.4zM254.8,298.5h3.4v3.4h-3.4zM259.6,298.2h3.4v3.4h-3.4zM264.3,297.8h3.4v3.4h-3.4zM269.0,297.4h3.4v3.4h-3.4zM273.8,297.0h3.4v3.4h-3.4zM278.5,296.6h3.4v3.4h-3.4zM283.2,296.1h3.4v3.4h-3.4zM288.0,295.7h3.4v3.4h-3.4zM292.7,295.2h3.4v3.4h-3.4zM297.5,294.8h3.4v3.4h-3.4zM302.2,294.3h3.4v3.4h-3.4zM306.9,293.8h3.4v3.4h-3.4zM311.7,293.3h3.4v3.4h-3.4zM316.4,292.8h3.4v3.4h-3.4zM321.1,292.2h3.4v3.4h-3.4zM325.9,291.7h3.4v3.4h-3.4zM330.6,291.1h3.4v3.4h-3.4zM335.3,290.5h3.4v3.4h-3.4zM340.1,289.9h3.4v3.4h-3.4zM344.8,289.2h3.4v3.4h-3.4zM349.6,288.5h3.4v3.4h-3.4zM354.3,287.6h3.4v3.4h-3.4zM359.0,286.7h3.4v3.4h-3.4zM363.8,285.8h3.4v3.4h-3.4zM368.5,284.8h3.4v3.4h-3.4zM373.2,283.9h3.4v3.4h-3.4zM378.0,282.9h3.4v3.4h-3.4zM382.7,282.0h3.4v3.4h-3.4zM387.4,281.1h3.4v3.4h-3.4zM392.2,280.3h3.4v3.4h-3.4zM396.9,279.5h3.4v3.4h-3.4zM401.6,278.8h3.4v3.4h-3.4zM406.4,278.1h3.4v3.4h-3.4zM411.1,277.3h3.4v3.4h-3.4zM415.9,276.5h3.4v3.4h-3.4zM420.6,275.8h3.4v3.4h-3.4zM425.3,275.1h3.4v3.4h-3.4zM430.1,274.4h3.4v3.4h-3.4zM434.8,273.9h3.4v3.4h-3.4zM439.5,273.5h3.4v3.4h-3.4zM444.3,273.2h3.4v3.4h-3.4zM449.0,273.1h3.4v3.4h-3.4zM453.7,273.3h3.4v3.4h-3.4zM458.5,274.0h3.4v3.4h-3.4zM463.2,275.0h3.4v3.4h-3.4zM468.0,276.4h3.4v3.4h-3.4zM472.7,278.0h3.4v3.4h-3.4zM477.4,279.7h3.4v3.4h-3.4zM482.2,281.6h3.4v3.4h-3.4zM486.9,283.4h3.4v3.4h-3.4zM491.6,285.2h3.4v3.4h-3.4zM496.4,286.8h3.4v3.4h-3.4zM501.1,288.1h3.4v3.4h-3.4zM505.8,289.2h3.4v3.4h-3.4zM510.6,289.8h3.4v3.4h-3.4zM515.3,290.0h3.4v3.4h-3.4zM520.1,289.3h3.4v3.4h-3.4zM524.8,287.7h3.4v3.4h-3.4zM529.5,285.3h3.4v3.4h-3.4zM534.3,282.4h3.4v3.4h-3.4zM539.0,279.0h3.4v3.4h-3.4zM543.7,275.3h3.4v3.4h-3.4zM548.5,269.7h3.4v3.4h-3.4zM553.2,261.6h3.4v3.4h-3.4zM557.9,252.4h3.4v3.4h-3.4zM562.7,243.3h3.4v3.4h-3.4zM567.4,235.7h3.4v3.4h-3.4zM572.1,229.6h3.4v3.4h-3.4zM576.9,223.5h3.4v3.4h-3.4zM581.6,217.4h3.4v3.4h-3.4zM586.4,212.1h3.4v3.4h-3.4zM591.1,207.8h3.4v3.4h-3.4zM595.8,205.0h3.4v3.4h-3.4zM600.6,204.3h3.4v3.4h-3.4zM605.3,205.0h3.4v3.4h-3.4zM610.0,206.6h3.4v3.4h-3.4zM614.8,209.0h3.4v3.4h-3.4zM619.5,211.8h3.4v3.4h-3.4zM624.2,214.9h3.4v3.4h-3.4zM629.0,218.1h3.4v3.4h-3.4zM633.7,221.1h3.4v3.4h-3.4zM638.5,223.9h3.4v3.4h-3.4zM643.2,226.5h3.4v3.4h-3.4zM647.9,229.3h3.4v3.4h-3.4zM652.7,232.2h3.4v3.4h-3.4zM657.4,235.2h3.4v3.4h-3.4zM662.1,238.2h3.4v3.4h-3.4zM666.9,241.2h3.4v3.4h-3.4zM671.6,244.2h3.4v3.4h-3.4zM676.3,247.1h3.4v3.4h-3.4zM681.1,249.8h3.4v3.4h-3.4zM685.8,252.4h3.4v3.4h-3.4zM690.6,254.8h3.4v3.4h-3.4zM695.3,257.0h3.4v3.4h-3.4zM700.0,259.0h3.4v3.4h-3.4zM704.8,261.1h3.4v3.4h-3.4zM709.5,263.1h3.4v3.4h-3.4zM714.2,265.0h3.4v3.4h-3.4zM719.0,266.9h3.4v3.4h-3.4zM723.7,268.8h3.4v3.4h-3.4zM728.4,270.7h3.4v3.4h-3.4zM733.2,272.5h3.4v3.4h-3.4zM737.9,274.2h3.4v3.4h-3.4zM742.6,275.9h3.4v3.4h-3.4zM747.4,277.6h3.4v3.4h-3.4zM752.1,279.2h3.4v3.4h-3.4zM756.9,280.7h3.4v3.4h-3.4zM761.6,282.2h3.4v3.4h-3.4zM766.3,283.6h3.4v3.4h-3.4zM771.1,284.9h3.4v3.4h-3.4zM775.8,286.2h3.4v3.4h-3.4zM780.5,287.4h3.4v3.4h-3.4zM785.3,288.6h3.4v3.4h-3.4zM790.0,289.6h3.4v3.4h-3.4zM794.7,290.6h3.4v3.4h-3.4zM799.5,291.5h3.4v3.4h-3.4zM804.2,292.3h3.4v3.4h-3.4zM809.0,293.1h3.4v3.4h-3.4zM813.7,293.9h3.4v3.4h-3.4zM818.4,294.6h3.4v3.4h-3.4zM823.2,295.2h3.4v3.4h-3.4zM827.9,295.8h3.4v3.4h-3.4zM832.6,296.3h3.4v3.4h-3.4zM837.4,296.7h3.4v3.4h-3.4zM842.1,297.0h3.4v3.4h-3.4zM846.8,297.3h3.4v3.4h-3.4zM851.6,297.6h3.4v3.4h-3.4zM856.3,297.9h3.4v3.4h-3.4zM861.1,298.1h3.4v3.4h-3.4zM865.8,298.4h3.4v3.4h-3.4zM870.5,298.6h3.4v3.4h-3.4zM875.3,298.8h3.4v3.4h-3.4zM880.0,299.0h3.4v3.4h-3.4zM884.7,299.2h3.4v3.4h-3.4zM889.5,299.4h3.4v3.4h-3.4zM894.2,299.6h3.4v3.4h-3.4zM898.9,299.8h3.4v3.4h-3.4zM903.7,300.0h3.4v3.4h-3.4zM908.4,300.2h3.4v3.4h-3.4zM913.1,300.4h3.4v3.4h-3.4zM917.9,300.6h3.4v3.4h-3.4zM922.6,300.8h3.4v3.4h-3.4zM927.4,301.0h3.4v3.4h-3.4zM932.1,301.2h3.4v3.4h-3.4zM936.8,301.4h3.4v3.4h-3.4zM941.6,301.6h3.4v3.4h-3.4zM946.3,301.8h3.4v3.4h-3.4zM951.0,302.0h3.4v3.4h-3.4zM955.8,302.2h3.4v3.4h-3.4zM960.5,302.4h3.4v3.4h-3.4zM965.2,302.5h3.4v3.4h-3.4zM970.0,302.7h3.4v3.4h-3.4zM974.7,302.9h3.4v3.4h-3.4zM979.5,303.1h3.4v3.4h-3.4zM984.2,303.3h3.4v3.4h-3.4zM988.9,303.4h3.4v3.4h-3.4zM993.7,303.6h3.4v3.4h-3.4zM998.4,303.8h3.4v3.4h-3.4zM1003.1,304.0h3.4v3.4h-3.4zM1007.9,304.1h3.4v3.4h-3.4zM1012.6,304.3h3.4v3.4h-3.4zM1017.3,304.5h3.4v3.4h-3.4zM1022.1,304.6h3.4v3.4h-3.4zM1026.8,304.8h3.4v3.4h-3.4zM1031.6,304.9h3.4v3.4h-3.4zM1036.3,305.1h3.4v3.4h-3.4zM1041.0,305.2h3.4v3.4h-3.4zM1045.8,305.4h3.4v3.4h-3.4zM1050.5,305.5h3.4v3.4h-3.4zM1055.2,305.6h3.4v3.4h-3.4zM1060.0,305.8h3.4v3.4h-3.4z" stroke="rgb(148,137,146)" stroke-width="1.3" fill="none"/><polyline points="95.5,299.3 100.2,299.1 105.0,298.9 109.7,298.7 114.4,298.5 119.2,298.3 123.9,298.0 128.7,297.8 133.4,297.5 138.1,297.2 142.9,296.9 147.6,296.6 152.3,296.3 157.1,296.0 161.8,295.7 166.5,295.4 171.3,295.0 176.0,294.7 180.8,294.3 185.5,294.0 190.2,293.6 195.0,293.2 199.7,292.8 204.4,292.4 209.2,292.1 213.9,291.7 218.6,291.3 223.4,290.9 228.1,290.4 232.8,290.0 237.6,289.6 242.3,289.2 247.1,288.7 251.8,288.3 256.5,287.8 261.3,287.3 266.0,286.8 270.7,286.3 275.5,285.8 280.2,285.2 284.9,284.7 289.7,284.1 294.4,283.5 299.2,282.9 303.9,282.2 308.6,281.6 313.4,280.9 318.1,280.2 322.8,279.4 327.6,278.7 332.3,277.9 337.0,277.1 341.8,276.2 346.5,275.2 351.3,274.0 356.0,272.7 360.7,271.4 365.5,269.9 370.2,268.4 374.9,266.8 379.7,265.3 384.4,263.8 389.1,262.4 393.9,261.0 398.6,259.7 403.3,258.6 408.1,257.4 412.8,256.1 417.6,254.8 422.3,253.6 427.0,252.4 431.8,251.2 436.5,250.2 441.2,249.4 446.0,248.8 450.7,248.4 455.4,248.3 460.2,248.7 464.9,249.6 469.7,251.0 474.4,252.6 479.1,254.5 483.9,256.4 488.6,258.4 493.3,260.2 498.1,261.8 502.8,263.1 507.5,263.9 512.3,264.3 517.0,263.8 521.8,262.3 526.5,260.0 531.2,257.3 536.0,251.4 540.7,241.8 545.4,230.2 550.2,218.7 554.9,208.4 559.6,197.7 564.4,187.8 569.1,179.6 573.8,172.1 578.6,166.0 583.3,162.2 588.1,159.2 592.8,156.8 597.5,155.5 602.3,155.6 607.0,156.7 611.7,158.6 616.5,161.2 621.2,164.3 625.9,167.8 630.7,174.1 635.4,182.0 640.2,188.8 644.9,194.3 649.6,199.6 654.4,204.5 659.1,209.3 663.8,213.7 668.6,217.9 673.3,221.9 678.0,225.6 682.8,229.2 687.5,232.8 692.3,236.2 697.0,239.5 701.7,242.7 706.5,245.8 711.2,248.7 715.9,251.5 720.7,254.1 725.4,256.5 730.1,258.7 734.9,260.6 739.6,262.4 744.3,264.2 749.1,265.8 753.8,267.4 758.6,268.9 763.3,270.3 768.0,271.6 772.8,272.9 777.5,274.1 782.2,275.3 787.0,276.4 791.7,277.5 796.4,278.5 801.2,279.5 805.9,280.5 810.7,281.5 815.4,282.4 820.1,283.3 824.9,284.1 829.6,284.8 834.3,285.5 839.1,286.1 843.8,286.6 848.5,287.1 853.3,287.6 858.0,288.0 862.8,288.5 867.5,288.9 872.2,289.2 877.0,289.6 881.7,289.9 886.4,290.3 891.2,290.6 895.9,290.9 900.6,291.2 905.4,291.5 910.1,291.9 914.8,292.2 919.6,292.5 924.3,292.8 929.1,293.1 933.8,293.4 938.5,293.7 943.3,294.0 948.0,294.3 952.7,294.6 957.5,294.8 962.2,295.1 966.9,295.4 971.7,295.7 976.4,295.9 981.2,296.2 985.9,296.5 990.6,296.7 995.4,297.0 1000.1,297.2 1004.8,297.4 1009.6,297.7 1014.3,297.9 1019.0,298.1 1023.8,298.3 1028.5,298.5 1033.3,298.7 1038.0,298.9 1042.7,299.1 1047.5,299.3 1052.2,299.5 1056.9,299.6 1061.7,299.8" fill="none" stroke="rgb(152,142,141)" stroke-width="1.3"/><path d="M93.8,297.6h3.4v3.4h-3.4zM98.5,297.4h3.4v3.4h-3.4zM103.3,297.2h3.4v3.4h-3.4zM108.0,297.0h3.4v3.4h-3.4zM112.7,296.8h3.4v3.4h-3.4zM117.5,296.6h3.4v3.4h-3.4zM122.2,296.3h3.4v3.4h-3.4zM127.0,296.1h3.4v3.4h-3.4zM131.7,295.8h3.4v3.4h-3.4zM136.4,295.5h3.4v3.4h-3.4zM141.2,295.2h3.4v3.4h-3.4zM145.9,294.9h3.4v3.4h-3.4zM150.6,294.6h3.4v3.4h-3.4zM155.4,294.3h3.4v3.4h-3.4zM160.1,294.0h3.4v3.4h-3.4zM164.8,293.7h3.4v3.4h-3.4zM169.6,293.3h3.4v3.4h-3.4zM174.3,293.0h3.4v3.4h-3.4zM179.1,292.6h3.4v3.4h-3.4zM183.8,292.3h3.4v3.4h-3.4zM188.5,291.9h3.4v3.4h-3.4zM193.3,291.5h3.4v3.4h-3.4zM198.0,291.1h3.4v3.4h-3.4zM202.7,290.7h3.4v3.4h-3.4zM207.5,290.4h3.4v3.4h-3.4zM212.2,290.0h3.4v3.4h-3.4zM216.9,289.6h3.4v3.4h-3.4zM221.7,289.2h3.4v3.4h-3.4zM226.4,288.7h3.4v3.4h-3.4zM231.1,288.3h3.4v3.4h-3.4zM235.9,287.9h3.4v3.4h-3.4zM240.6,287.5h3.4v3.4h-3.4zM245.4,287.0h3.4v3.4h-3.4zM250.1,286.6h3.4v3.4h-3.4zM254.8,286.1h3.4v3.4h-3.4zM259.6,285.6h3.4v3.4h-3.4zM264.3,285.1h3.4v3.4h-3.4zM269.0,284.6h3.4v3.4h-3.4zM273.8,284.1h3.4v3.4h-3.4zM278.5,283.5h3.4v3.4h-3.4zM283.2,283.0h3.4v3.4h-3.4zM288.0,282.4h3.4v3.4h-3.4zM292.7,281.8h3.4v3.4h-3.4zM297.5,281.2h3.4v3.4h-3.4zM302.2,280.5h3.4v3.4h-3.4zM306.9,279.9h3.4v3.4h-3.4zM311.7,279.2h3.4v3.4h-3.4zM316.4,278.5h3.4v3.4h-3.4zM321.1,277.7h3.4v3.4h-3.4zM325.9,277.0h3.4v3.4h-3.4zM330.6,276.2h3.4v3.4h-3.4zM335.3,275.4h3.4v3.4h-3.4zM340.1,274.5h3.4v3.4h-3.4zM344.8,273.5h3.4v3.4h-3.4zM349.6,272.3h3.4v3.4h-3.4zM354.3,271.0h3.4v3.4h-3.4zM359.0,269.7h3.4v3.4h-3.4zM363.8,268.2h3.4v3.4h-3.4zM368.5,266.7h3.4v3.4h-3.4zM373.2,265.1h3.4v3.4h-3.4zM378.0,263.6h3.4v3.4h-3.4zM382.7,262.1h3.4v3.4h-3.4zM387.4,260.7h3.4v3.4h-3.4zM392.2,259.3h3.4v3.4h-3.4zM396.9,258.0h3.4v3.4h-3.4zM401.6,256.9h3.4v3.4h-3.4zM406.4,255.7h3.4v3.4h-3.4zM411.1,254.4h3.4v3.4h-3.4zM415.9,253.1h3.4v3.4h-3.4zM420.6,251.9h3.4v3.4h-3.4zM425.3,250.7h3.4v3.4h-3.4zM430.1,249.5h3.4v3.4h-3.4zM434.8,248.5h3.4v3.4h-3.4zM439.5,247.7h3.4v3.4h-3.4zM444.3,247.1h3.4v3.4h-3.4zM449.0,246.7h3.4v3.4h-3.4zM453.7,246.6h3.4v3.4h-3.4zM458.5,247.0h3.4v3.4h-3.4zM463.2,247.9h3.4v3.4h-3.4zM468.0,249.3h3.4v3.4h-3.4zM472.7,250.9h3.4v3.4h-3.4zM477.4,252.8h3.4v3.4h-3.4zM482.2,254.7h3.4v3.4h-3.4zM486.9,256.7h3.4v3.4h-3.4zM491.6,258.5h3.4v3.4h-3.4zM496.4,260.1h3.4v3.4h-3.4zM501.1,261.4h3.4v3.4h-3.4zM505.8,262.2h3.4v3.4h-3.4zM510.6,262.6h3.4v3.4h-3.4zM515.3,262.1h3.4v3.4h-3.4zM520.1,260.6h3.4v3.4h-3.4zM524.8,258.3h3.4v3.4h-3.4zM529.5,255.6h3.4v3.4h-3.4zM534.3,249.7h3.4v3.4h-3.4zM539.0,240.1h3.4v3.4h-3.4zM543.7,228.5h3.4v3.4h-3.4zM548.5,217.0h3.4v3.4h-3.4zM553.2,206.7h3.4v3.4h-3.4zM557.9,196.0h3.4v3.4h-3.4zM562.7,186.1h3.4v3.4h-3.4zM567.4,177.9h3.4v3.4h-3.4zM572.1,170.4h3.4v3.4h-3.4zM576.9,164.3h3.4v3.4h-3.4zM581.6,160.5h3.4v3.4h-3.4zM586.4,157.5h3.4v3.4h-3.4zM591.1,155.1h3.4v3.4h-3.4zM595.8,153.8h3.4v3.4h-3.4zM600.6,153.9h3.4v3.4h-3.4zM605.3,155.0h3.4v3.4h-3.4zM610.0,156.9h3.4v3.4h-3.4zM614.8,159.5h3.4v3.4h-3.4zM619.5,162.6h3.4v3.4h-3.4zM624.2,166.1h3.4v3.4h-3.4zM629.0,172.4h3.4v3.4h-3.4zM633.7,180.3h3.4v3.4h-3.4zM638.5,187.1h3.4v3.4h-3.4zM643.2,192.6h3.4v3.4h-3.4zM647.9,197.9h3.4v3.4h-3.4zM652.7,202.8h3.4v3.4h-3.4zM657.4,207.6h3.4v3.4h-3.4zM662.1,212.0h3.4v3.4h-3.4zM666.9,216.2h3.4v3.4h-3.4zM671.6,220.2h3.4v3.4h-3.4zM676.3,223.9h3.4v3.4h-3.4zM681.1,227.5h3.4v3.4h-3.4zM685.8,231.1h3.4v3.4h-3.4zM690.6,234.5h3.4v3.4h-3.4zM695.3,237.8h3.4v3.4h-3.4zM700.0,241.0h3.4v3.4h-3.4zM704.8,244.1h3.4v3.4h-3.4zM709.5,247.0h3.4v3.4h-3.4zM714.2,249.8h3.4v3.4h-3.4zM719.0,252.4h3.4v3.4h-3.4zM723.7,254.8h3.4v3.4h-3.4zM728.4,257.0h3.4v3.4h-3.4zM733.2,258.9h3.4v3.4h-3.4zM737.9,260.7h3.4v3.4h-3.4zM742.6,262.5h3.4v3.4h-3.4zM747.4,264.1h3.4v3.4h-3.4zM752.1,265.7h3.4v3.4h-3.4zM756.9,267.2h3.4v3.4h-3.4zM761.6,268.6h3.4v3.4h-3.4zM766.3,269.9h3.4v3.4h-3.4zM771.1,271.2h3.4v3.4h-3.4zM775.8,272.4h3.4v3.4h-3.4zM780.5,273.6h3.4v3.4h-3.4zM785.3,274.7h3.4v3.4h-3.4zM790.0,275.8h3.4v3.4h-3.4zM794.7,276.8h3.4v3.4h-3.4zM799.5,277.8h3.4v3.4h-3.4zM804.2,278.8h3.4v3.4h-3.4zM809.0,279.8h3.4v3.4h-3.4zM813.7,280.7h3.4v3.4h-3.4zM818.4,281.6h3.4v3.4h-3.4zM823.2,282.4h3.4v3.4h-3.4zM827.9,283.1h3.4v3.4h-3.4zM832.6,283.8h3.4v3.4h-3.4zM837.4,284.4h3.4v3.4h-3.4zM842.1,284.9h3.4v3.4h-3.4zM846.8,285.4h3.4v3.4h-3.4zM851.6,285.9h3.4v3.4h-3.4zM856.3,286.3h3.4v3.4h-3.4zM861.1,286.8h3.4v3.4h-3.4zM865.8,287.2h3.4v3.4h-3.4zM870.5,287.5h3.4v3.4h-3.4zM875.3,287.9h3.4v3.4h-3.4zM880.0,288.2h3.4v3.4h-3.4zM884.7,288.6h3.4v3.4h-3.4zM889.5,288.9h3.4v3.4h-3.4zM894.2,289.2h3.4v3.4h-3.4zM898.9,289.5h3.4v3.4h-3.4zM903.7,289.8h3.4v3.4h-3.4zM908.4,290.2h3.4v3.4h-3.4zM913.1,290.5h3.4v3.4h-3.4zM917.9,290.8h3.4v3.4h-3.4zM922.6,291.1h3.4v3.4h-3.4zM927.4,291.4h3.4v3.4h-3.4zM932.1,291.7h3.4v3.4h-3.4zM936.8,292.0h3.4v3.4h-3.4zM941.6,292.3h3.4v3.4h-3.4zM946.3,292.6h3.4v3.4h-3.4zM951.0,292.9h3.4v3.4h-3.4zM955.8,293.1h3.4v3.4h-3.4zM960.5,293.4h3.4v3.4h-3.4zM965.2,293.7h3.4v3.4h-3.4zM970.0,294.0h3.4v3.4h-3.4zM974.7,294.2h3.4v3.4h-3.4zM979.5,294.5h3.4v3.4h-3.4zM984.2,294.8h3.4v3.4h-3.4zM988.9,295.0h3.4v3.4h-3.4zM993.7,295.3h3.4v3.4h-3.4zM998.4,295.5h3.4v3.4h-3.4zM1003.1,295.7h3.4v3.4h-3.4zM1007.9,296.0h3.4v3.4h-3.4zM1012.6,296.2h3.4v3.4h-3.4zM1017.3,296.4h3.4v3.4h-3.4zM1022.1,296.6h3.4v3.4h-3.4zM1026.8,296.8h3.4v3.4h-3.4zM1031.6,297.0h3.4v3.4h-3.4zM1036.3,297.2h3.4v3.4h-3.4zM1041.0,297.4h3.4v3.4h-3.4zM1045.8,297.6h3.4v3.4h-3.4zM1050.5,297.8h3.4v3.4h-3.4zM1055.2,297.9h3.4v3.4h-3.4zM1060.0,298.1h3.4v3.4h-3.4z" stroke="rgb(152,142,141)" stroke-width="1.3" fill="none"/><polyline points="95.5,287.4 100.2,287.3 105.0,287.3 109.7,287.2 114.4,287.0 119.2,286.9 123.9,286.7 128.7,286.5 133.4,286.2 138.1,285.9 142.9,285.6 147.6,285.3 152.3,285.0 157.1,284.6 161.8,284.3 166.5,283.9 171.3,283.5 176.0,283.0 180.8,282.6 185.5,282.1 190.2,281.7 195.0,281.2 199.7,280.7 204.4,280.2 209.2,279.7 213.9,279.2 218.6,278.7 223.4,278.2 228.1,277.7 232.8,277.1 237.6,276.6 242.3,276.0 247.1,275.3 251.8,274.7 256.5,273.9 261.3,273.2 266.0,272.4 270.7,271.6 275.5,270.7 280.2,269.8 284.9,268.8 289.7,267.9 294.4,266.8 299.2,265.8 303.9,264.7 308.6,263.6 313.4,262.5 318.1,261.3 322.8,260.1 327.6,258.9 332.3,257.6 337.0,256.4 341.8,254.9 346.5,253.3 351.3,251.5 356.0,249.6 360.7,247.6 365.5,245.5 370.2,243.4 374.9,241.2 379.7,239.0 384.4,236.8 389.1,234.6 393.9,232.5 398.6,230.4 403.3,228.5 408.1,226.6 412.8,224.9 417.6,223.2 422.3,221.3 427.0,219.4 431.8,217.4 436.5,215.5 441.2,213.8 446.0,212.2 450.7,210.8 455.4,209.7 460.2,209.0 464.9,208.7 469.7,208.9 474.4,209.7 479.1,210.9 483.9,212.4 488.6,214.0 493.3,215.6 498.1,217.0 502.8,218.1 507.5,218.6 512.3,218.3 517.0,216.8 521.8,214.2 526.5,210.8 531.2,206.7 536.0,198.5 540.7,187.1 545.4,176.0 550.2,164.1 554.9,152.0 559.6,139.7 564.4,127.4 569.1,116.9 573.8,107.5 578.6,101.4 583.3,97.4 588.1,94.3 592.8,92.8 597.5,93.0 602.3,94.2 607.0,96.4 611.7,99.2 616.5,102.7 621.2,109.0 625.9,119.5 630.7,128.4 635.4,135.6 640.2,142.2 644.9,148.6 649.6,154.9 654.4,161.4 659.1,167.9 663.8,174.5 668.6,180.8 673.3,186.8 678.0,192.3 682.8,197.4 687.5,202.3 692.3,207.0 697.0,211.4 701.7,215.6 706.5,219.4 711.2,222.7 715.9,225.7 720.7,228.6 725.4,231.3 730.1,234.0 734.9,236.5 739.6,238.9 744.3,241.2 749.1,243.4 753.8,245.6 758.6,247.6 763.3,249.5 768.0,251.4 772.8,253.2 777.5,254.8 782.2,256.5 787.0,258.0 791.7,259.5 796.4,260.9 801.2,262.2 805.9,263.4 810.7,264.6 815.4,265.6 820.1,266.6 824.9,267.6 829.6,268.4 834.3,269.3 839.1,270.1 843.8,270.9 848.5,271.7 853.3,272.5 858.0,273.3 862.8,274.0 867.5,274.7 872.2,275.4 877.0,276.1 881.7,276.7 886.4,277.3 891.2,277.9 895.9,278.5 900.6,279.0 905.4,279.5 910.1,280.0 914.8,280.5 919.6,280.9 924.3,281.3 929.1,281.6 933.8,282.0 938.5,282.4 943.3,282.7 948.0,283.1 952.7,283.4 957.5,283.8 962.2,284.1 966.9,284.4 971.7,284.7 976.4,285.1 981.2,285.4 985.9,285.7 990.6,285.9 995.4,286.2 1000.1,286.5 1004.8,286.7 1009.6,286.9 1014.3,287.2 1019.0,287.4 1023.8,287.5 1028.5,287.7 1033.3,287.9 1038.0,288.0 1042.7,288.1 1047.5,288.2 1052.2,288.3 1056.9,288.3 1061.7,288.3" fill="none" stroke="rgb(156,148,136)" stroke-width="1.3"/><path d="M93.8,285.7h3.4v3.4h-3.4zM98.5,285.6h3.4v3.4h-3.4zM103.3,285.6h3.4v3.4h-3.4zM108.0,285.5h3.4v3.4h-3.4zM112.7,285.3h3.4v3.4h-3.4zM117.5,285.2h3.4v3.4h-3.4zM122.2,285.0h3.4v3.4h-3.4zM127.0,284.8h3.4v3.4h-3.4zM131.7,284.5h3.4v3.4h-3.4zM136.4,284.2h3.4v3.4h-3.4zM141.2,283.9h3.4v3.4h-3.4zM145.9,283.6h3.4v3.4h-3.4zM150.6,283.3h3.4v3.4h-3.4zM155.4,282.9h3.4v3.4h-3.4zM160.1,282.6h3.4v3.4h-3.4zM164.8,282.2h3.4v3.4h-3.4zM169.6,281.8h3.4v3.4h-3.4zM174.3,281.3h3.4v3.4h-3.4zM179.1,280.9h3.4v3.4h-3.4zM183.8,280.4h3.4v3.4h-3.4zM188.5,280.0h3.4v3.4h-3.4zM193.3,279.5h3.4v3.4h-3.4zM198.0,279.0h3.4v3.4h-3.4zM202.7,278.5h3.4v3.4h-3.4zM207.5,278.0h3.4v3.4h-3.4zM212.2,277.5h3.4v3.4h-3.4zM216.9,277.0h3.4v3.4h-3.4zM221.7,276.5h3.4v3.4h-3.4zM226.4,276.0h3.4v3.4h-3.4zM231.1,275.4h3.4v3.4h-3.4zM235.9,274.9h3.4v3.4h-3.4zM240.6,274.3h3.4v3.4h-3.4zM245.4,273.6h3.4v3.4h-3.4zM250.1,273.0h3.4v3.4h-3.4zM254.8,272.2h3.4v3.4h-3.4zM259.6,271.5h3.4v3.4h-3.4zM264.3,270.7h3.4v3.4h-3.4zM269.0,269.9h3.4v3.4h-3.4zM273.8,269.0h3.4v3.4h-3.4zM278.5,268.1h3.4v3.4h-3.4zM283.2,267.1h3.4v3.4h-3.4zM288.0,266.2h3.4v3.4h-3.4zM292.7,265.1h3.4v3.4h-3.4zM297.5,264.1h3.4v3.4h-3.4zM302.2,263.0h3.4v3.4h-3.4zM306.9,261.9h3.4v3.4h-3.4zM311.7,260.8h3.4v3.4h-3.4zM316.4,259.6h3.4v3.4h-3.4zM321.1,258.4h3.4v3.4h-3.4zM325.9,257.2h3.4v3.4h-3.4zM330.6,255.9h3.4v3.4h-3.4zM335.3,254.7h3.4v3.4h-3.4zM340.1,253.2h3.4v3.4h-3.4zM344.8,251.6h3.4v3.4h-3.4zM349.6,249.8h3.4v3.4h-3.4zM354.3,247.9h3.4v3.4h-3.4zM359.0,245.9h3.4v3.4h-3.4zM363.8,243.8h3.4v3.4h-3.4zM368.5,241.7h3.4v3.4h-3.4zM373.2,239.5h3.4v3.4h-3.4zM378.0,237.3h3.4v3.4h-3.4zM382.7,235.1h3.4v3.4h-3.4zM387.4,232.9h3.4v3.4h-3.4zM392.2,230.8h3.4v3.4h-3.4zM396.9,228.7h3.4v3.4h-3.4zM401.6,226.8h3.4v3.4h-3.4zM406.4,224.9h3.4v3.4h-3.4zM411.1,223.2h3.4v3.4h-3.4zM415.9,221.5h3.4v3.4h-3.4zM420.6,219.6h3.4v3.4h-3.4zM425.3,217.7h3.4v3.4h-3.4zM430.1,215.7h3.4v3.4h-3.4zM434.8,213.8h3.4v3.4h-3.4zM439.5,212.1h3.4v3.4h-3.4zM444.3,210.5h3.4v3.4h-3.4zM449.0,209.1h3.4v3.4h-3.4zM453.7,208.0h3.4v3.4h-3.4zM458.5,207.3h3.4v3.4h-3.4zM463.2,207.0h3.4v3.4h-3.4zM468.0,207.2h3.4v3.4h-3.4zM472.7,208.0h3.4v3.4h-3.4zM477.4,209.2h3.4v3.4h-3.4zM482.2,210.7h3.4v3.4h-3.4zM486.9,212.3h3.4v3.4h-3.4zM491.6,213.9h3.4v3.4h-3.4zM496.4,215.3h3.4v3.4h-3.4zM501.1,216.4h3.4v3.4h-3.4zM505.8,216.9h3.4v3.4h-3.4zM510.6,216.6h3.4v3.4h-3.4zM515.3,215.1h3.4v3.4h-3.4zM520.1,212.5h3.4v3.4h-3.4zM524.8,209.1h3.4v3.4h-3.4zM529.5,205.0h3.4v3.4h-3.4zM534.3,196.8h3.4v3.4h-3.4zM539.0,185.4h3.4v3.4h-3.4zM543.7,174.3h3.4v3.4h-3.4zM548.5,162.4h3.4v3.4h-3.4zM553.2,150.3h3.4v3.4h-3.4zM557.9,138.0h3.4v3.4h-3.4zM562.7,125.7h3.4v3.4h-3.4zM567.4,115.2h3.4v3.4h-3.4zM572.1,105.8h3.4v3.4h-3.4zM576.9,99.7h3.4v3.4h-3.4zM581.6,95.7h3.4v3.4h-3.4zM586.4,92.6h3.4v3.4h-3.4zM591.1,91.1h3.4v3.4h-3.4zM595.8,91.3h3.4v3.4h-3.4zM600.6,92.5h3.4v3.4h-3.4zM605.3,94.7h3.4v3.4h-3.4zM610.0,97.5h3.4v3.4h-3.4zM614.8,101.0h3.4v3.4h-3.4zM619.5,107.3h3.4v3.4h-3.4zM624.2,117.8h3.4v3.4h-3.4zM629.0,126.7h3.4v3.4h-3.4zM633.7,133.9h3.4v3.4h-3.4zM638.5,140.5h3.4v3.4h-3.4zM643.2,146.9h3.4v3.4h-3.4zM647.9,153.2h3.4v3.4h-3.4zM652.7,159.7h3.4v3.4h-3.4zM657.4,166.2h3.4v3.4h-3.4zM662.1,172.8h3.4v3.4h-3.4zM666.9,179.1h3.4v3.4h-3.4zM671.6,185.1h3.4v3.4h-3.4zM676.3,190.6h3.4v3.4h-3.4zM681.1,195.7h3.4v3.4h-3.4zM685.8,200.6h3.4v3.4h-3.4zM690.6,205.3h3.4v3.4h-3.4zM695.3,209.7h3.4v3.4h-3.4zM700.0,213.9h3.4v3.4h-3.4zM704.8,217.7h3.4v3.4h-3.4zM709.5,221.0h3.4v3.4h-3.4zM714.2,224.0h3.4v3.4h-3.4zM719.0,226.9h3.4v3.4h-3.4zM723.7,229.6h3.4v3.4h-3.4zM728.4,232.3h3.4v3.4h-3.4zM733.2,234.8h3.4v3.4h-3.4zM737.9,237.2h3.4v3.4h-3.4zM742.6,239.5h3.4v3.4h-3.4zM747.4,241.7h3.4v3.4h-3.4zM752.1,243.9h3.4v3.4h-3.4zM756.9,245.9h3.4v3.4h-3.4zM761.6,247.8h3.4v3.4h-3.4zM766.3,249.7h3.4v3.4h-3.4zM771.1,251.5h3.4v3.4h-3.4zM775.8,253.1h3.4v3.4h-3.4zM780.5,254.8h3.4v3.4h-3.4zM785.3,256.3h3.4v3.4h-3.4zM790.0,257.8h3.4v3.4h-3.4zM794.7,259.2h3.4v3.4h-3.4zM799.5,260.5h3.4v3.4h-3.4zM804.2,261.7h3.4v3.4h-3.4zM809.0,262.9h3.4v3.4h-3.4zM813.7,263.9h3.4v3.4h-3.4zM818.4,264.9h3.4v3.4h-3.4zM823.2,265.9h3.4v3.4h-3.4zM827.9,266.7h3.4v3.4h-3.4zM832.6,267.6h3.4v3.4h-3.4zM837.4,268.4h3.4v3.4h-3.4zM842.1,269.2h3.4v3.4h-3.4zM846.8,270.0h3.4v3.4h-3.4zM851.6,270.8h3.4v3.4h-3.4zM856.3,271.6h3.4v3.4h-3.4zM861.1,272.3h3.4v3.4h-3.4zM865.8,273.0h3.4v3.4h-3.4zM870.5,273.7h3.4v3.4h-3.4zM875.3,274.4h3.4v3.4h-3.4zM880.0,275.0h3.4v3.4h-3.4zM884.7,275.6h3.4v3.4h-3.4zM889.5,276.2h3.4v3.4h-3.4zM894.2,276.8h3.4v3.4h-3.4zM898.9,277.3h3.4v3.4h-3.4zM903.7,277.8h3.4v3.4h-3.4zM908.4,278.3h3.4v3.4h-3.4zM913.1,278.8h3.4v3.4h-3.4zM917.9,279.2h3.4v3.4h-3.4zM922.6,279.6h3.4v3.4h-3.4zM927.4,279.9h3.4v3.4h-3.4zM932.1,280.3h3.4v3.4h-3.4zM936.8,280.7h3.4v3.4h-3.4zM941.6,281.0h3.4v3.4h-3.4zM946.3,281.4h3.4v3.4h-3.4zM951.0,281.7h3.4v3.4h-3.4zM955.8,282.1h3.4v3.4h-3.4zM960.5,282.4h3.4v3.4h-3.4zM965.2,282.7h3.4v3.4h-3.4zM970.0,283.0h3.4v3.4h-3.4zM974.7,283.4h3.4v3.4h-3.4zM979.5,283.7h3.4v3.4h-3.4zM984.2,284.0h3.4v3.4h-3.4zM988.9,284.2h3.4v3.4h-3.4zM993.7,284.5h3.4v3.4h-3.4zM998.4,284.8h3.4v3.4h-3.4zM1003.1,285.0h3.4v3.4h-3.4zM1007.9,285.2h3.4v3.4h-3.4zM1012.6,285.5h3.4v3.4h-3.4zM1017.3,285.7h3.4v3.4h-3.4zM1022.1,285.8h3.4v3.4h-3.4zM1026.8,286.0h3.4v3.4h-3.4zM1031.6,286.2h3.4v3.4h-3.4zM1036.3,286.3h3.4v3.4h-3.4zM1041.0,286.4h3.4v3.4h-3.4zM1045.8,286.5h3.4v3.4h-3.4zM1050.5,286.6h3.4v3.4h-3.4zM1055.2,286.6h3.4v3.4h-3.4zM1060.0,286.6h3.4v3.4h-3.4z" stroke="rgb(156,148,136)" stroke-width="1.3" fill="none"/></g><rect x="95.5" y="92" width="3" height="233" fill="#00e000"/><line x1="95.5" y1="92" x2="95.5" y2="325" stroke="#000" stroke-width="1"/><path d="M95,92.5h3M95,99.2h3M95,105.9h3M95,112.6h3M95,119.3h3M95,126.0h3M95,132.7h3M95,139.4h3M95,146.1h3M95,152.8h3M95,159.5h3M95,166.2h3M95,172.9h3M95,179.6h3M95,186.3h3M95,193.0h3M95,199.7h3M95,206.4h3M95,213.1h3M95,219.8h3M95,226.5h3M95,233.2h3M95,239.9h3M95,246.6h3M95,253.3h3M95,260.0h3M95,266.7h3M95,273.4h3M95,280.1h3M95,286.8h3M95,293.5h3M95,300.2h3M95,306.9h3M95,313.6h3M95,320.3h3" stroke="#000" stroke-width="1"/><line x1="1061" y1="92" x2="1061" y2="325" stroke="#ff0000" stroke-width="2"/><line x1="95" y1="323.5" x2="1062" y2="323.5" stroke="#4a30e8" stroke-width="2"/><line x1="95" y1="325.2" x2="1062" y2="325.2" stroke="#000" stroke-width="1.2"/></svg>
<div class="t" style="right:1016px;top:120.0px;font-size:11px;text-align:right;letter-spacing:-0.2px">3<span style="display:inline-block;width:2px;height:2px;background:#111;margin:0 1.5px 0 1.5px;vertical-align:3px"></span>10<span style="font-size:8px;position:relative;top:-3px;margin-left:2px">-13</span></div>
<div class="t" style="right:1016px;top:153.5px;font-size:11px;text-align:right;letter-spacing:-0.2px">2.5<span style="display:inline-block;width:2px;height:2px;background:#111;margin:0 1.5px 0 1.5px;vertical-align:3px"></span>10<span style="font-size:8px;position:relative;top:-3px;margin-left:2px">-13</span></div>
<div class="t" style="right:1016px;top:187.0px;font-size:11px;text-align:right;letter-spacing:-0.2px">2<span style="display:inline-block;width:2px;height:2px;background:#111;margin:0 1.5px 0 1.5px;vertical-align:3px"></span>10<span style="font-size:8px;position:relative;top:-3px;margin-left:2px">-13</span></div>
<div class="t" style="right:1016px;top:220.5px;font-size:11px;text-align:right;letter-spacing:-0.2px">1.5<span style="display:inline-block;width:2px;height:2px;background:#111;margin:0 1.5px 0 1.5px;vertical-align:3px"></span>10<span style="font-size:8px;position:relative;top:-3px;margin-left:2px">-13</span></div>
<div class="t" style="right:1016px;top:254.0px;font-size:11px;text-align:right;letter-spacing:-0.2px">1<span style="display:inline-block;width:2px;height:2px;background:#111;margin:0 1.5px 0 1.5px;vertical-align:3px"></span>10<span style="font-size:8px;position:relative;top:-3px;margin-left:2px">-13</span></div>
<div class="t" style="right:1016px;top:287.5px;font-size:11px;text-align:right;letter-spacing:-0.2px">5<span style="display:inline-block;width:2px;height:2px;background:#111;margin:0 1.5px 0 1.5px;vertical-align:3px"></span>10<span style="font-size:8px;position:relative;top:-3px;margin-left:2px">-14</span></div>
<div class="t" style="right:1016px;top:320.4px;font-size:11px">0</div>
<div class="t" style="left:95.5px;top:330px;width:60px;margin-left:-31px;text-align:center;font-size:11px">0</div>
<div class="t" style="left:338.5px;top:330px;width:60px;margin-left:-31px;text-align:center;font-size:11px">500</div>
<div class="t" style="left:581.5px;top:330px;width:60px;margin-left:-31px;text-align:center;font-size:11px">1000</div>
<div class="t" style="left:824.5px;top:330px;width:60px;margin-left:-31px;text-align:center;font-size:11px">1500</div>
<div class="t" style="left:575px;top:346px;width:200px;margin-left:-100px;text-align:center;font-size:10.7px">Distance along line</div>
<div class="t" style="left:29px;top:209px;transform:translate(-50%,-50%) rotate(-90deg);font-size:11px">Iteration_0_z</div>
<div class="a" style="left:0;top:363px;width:1105px;height:1px;background:#a0a0a0"></div>
<div class="a" style="left:0;top:364px;width:1105px;height:1px;background:#fff"></div>
<div class="a" style="left:0;top:365px;width:1105px;height:1px;background:#a6a6a6"></div>
<div class="a" style="left:0;top:365px;width:63px;height:20px;background:#ebebeb;border:1px solid #dadada"></div>
<div class="a" style="left:63px;top:365px;width:106px;height:21px;background:#fafafa;border:1px solid #dadada;border-bottom:none"></div>
<div class="t" style="left:10px;top:370px;font-size:11px">Viewport</div>
<div class="t" style="left:76px;top:371px;font-size:10.6px">2D Profile Viewer</div>
<div class="a" style="left:0;top:391px;width:1032px;height:17px;background:#006e82"></div>
<div class="t" style="left:2px;top:394px;font-size:11px;color:#fff">Viewport 2</div>
<div class="a" style="left:1038px;top:390px;width:19px;height:19px;background:#dcdcdc;border:1px solid #b8b8b8"></div>
<div class="a" style="left:1063px;top:390px;width:19px;height:19px;background:#dcdcdc;border:1px solid #b8b8b8"></div>
<div class="a" style="left:1088px;top:390px;width:19px;height:19px;background:#dcdcdc;border:1px solid #b8b8b8"></div>
<svg class="a" style="left:1038px;top:390px" width="19" height="19" viewBox="0 0 19 19"><rect x="7.6" y="5.6" width="5.2" height="5.2" fill="none" stroke="#000" stroke-width="1.3"/><rect x="7" y="5" width="6.5" height="2.2" fill="#000"/><rect x="5.6" y="8.6" width="4.6" height="4.6" fill="#dcdcdc" stroke="#000" stroke-width="1.3"/><rect x="5" y="8" width="6" height="2.2" fill="#000"/></svg><svg class="a" style="left:1063px;top:390px" width="19" height="19" viewBox="0 0 19 19"><rect x="5.5" y="5.5" width="8" height="8" fill="none" stroke="#000" stroke-width="1.4"/><rect x="5" y="5" width="9" height="2" fill="#000"/></svg><svg class="a" style="left:1088px;top:390px" width="17" height="19" viewBox="0 0 17 19"><path d="M1,9.5 C5,3 13,3 17,9.5 C13,16 5,16 1,9.5Z" fill="#000"/><circle cx="9" cy="9.5" r="2.6" fill="#888"/><line x1="3.5" y1="15" x2="14.5" y2="3.5" stroke="#dcdcdc" stroke-width="2"/><line x1="3.5" y1="14" x2="14" y2="3" stroke="#000" stroke-width="1"/></svg>
<div class="a" style="left:0;top:410px;width:1105px;height:1px;background:#7c8490"></div>
<svg class="a" style="left:1px;top:411px" width="1065" height="431" viewBox="0 0 1065 431"><rect x="0" y="0" width="1065" height="431" fill="#d3d3d3"/><polygon points="-298.0,185.2 1156.4,165.1 1079.5,788.6 -67.5,1606.6" fill="#00d67c"/><polygon points="208.3,178.2 839.2,169.5 839.6,163.3 207.7,168.6" fill="#0000c0"/><defs><linearGradient id="tg" gradientUnits="userSpaceOnUse" x1="258.5" y1="0" x2="812.5" y2="0"><stop offset="0.001" stop-color="#0020e0"/><stop offset="0.046" stop-color="#0070ff"/><stop offset="0.082" stop-color="#00d8ff"/><stop offset="0.118" stop-color="#00f0e0"/><stop offset="0.163" stop-color="#00e060"/><stop offset="0.208" stop-color="#20e000"/><stop offset="0.245" stop-color="#a0f000"/><stop offset="0.290" stop-color="#f0f000"/><stop offset="0.362" stop-color="#ffd000"/><stop offset="0.434" stop-color="#ff9000"/><stop offset="0.542" stop-color="#f05000"/><stop offset="0.597" stop-color="#e01818"/><stop offset="0.642" stop-color="#e01818"/><stop offset="0.687" stop-color="#f04010"/><stop offset="0.732" stop-color="#ff9000"/><stop offset="0.777" stop-color="#ffd800"/><stop offset="0.817" stop-color="#f0f000"/><stop offset="0.858" stop-color="#80f000"/><stop offset="0.894" stop-color="#00e040"/><stop offset="0.931" stop-color="#00e8d0"/><stop offset="0.958" stop-color="#00c0ff"/><stop offset="0.976" stop-color="#0050ff"/><stop offset="0.997" stop-color="#0020d0"/></linearGradient></defs><polygon points="258.5,156.6 812.5,155.0 812.5,160.4 258.5,161.8" fill="url(#tg)"/><path d="M-134.9,-102.8L1109.5,49.0M-122.7,-4.2L1105.0,88.6M-111.0,90.8L1100.7,127.6M-105.3,137.0L1098.5,146.8M-102.5,159.9L1097.5,156.4M-99.7,182.5L1096.4,166.0M-94.2,227.1L1094.3,185.0M-88.8,271.0L1092.2,203.8M-48.8,596.2L1075.9,349.7M-68.1,439.0L1015.0,287.5M55.1,52.8L887.5,96.8M156.3,78.6L869.6,108.2M159.2,119.2L868.0,132.8M164.9,198.4L864.8,181.2M167.6,237.2L863.2,205.0M205.3,129.8L841.1,138.5M206.5,149.3L840.4,151.0M207.7,168.6L839.6,163.3M208.9,187.8L838.8,175.7M-22.2,350.9L907.9,258.9M171.7,294.2L843.6,241.8M471.7,423.5L836.3,357.9M581.3,563.0L891.7,471.6M676.1,486.8L830.7,447.0M544.1,212.1L598.7,209.9M544.0,227.4L598.5,224.6M529.7,251.1L660.4,242.2M529.7,281.3L659.7,269.8M557.9,241.7L611.2,238.4M571.5,255.6L611.0,252.7M571.4,270.3L623.4,266.0M584.6,283.7L623.1,280.1M529.7,326.0L681.7,307.9M557.5,308.2L659.0,297.1M557.3,337.2L658.3,324.1M584.4,298.1L635.2,292.8M597.3,310.9L622.6,308.0M529.6,384.4L680.0,360.3M558.2,196.4L585.6,195.5M996.5,476.2L1044.6,-14.2M1092.2,203.8L1109.5,49.0M1070.2,205.1L1087.3,46.3M1047.1,206.4L1063.9,43.4M1081.3,204.4L1089.8,127.2M1091.0,166.0L1093.1,146.8M1080.0,166.2L1082.1,146.7M1058.8,205.7L1067.1,126.5M1068.7,166.4L1070.8,146.6M1057.1,166.5L1059.2,146.5M1035.1,207.1L1043.3,125.8M1045.2,166.7L1047.3,146.4M1033.1,166.8L1035.1,146.3M888.7,511.9L930.3,-35.0M997.2,209.2L1013.2,37.2M955.7,376.1L985.7,33.9M941.6,212.4L956.5,30.3M1010.2,208.5L1018.2,125.1M1020.5,167.0L1022.5,146.2M1007.7,167.2L1009.7,146.1M983.9,210.0L991.6,124.3M994.5,167.4L996.4,146.0M980.9,167.6L982.8,145.9M956.1,211.6L963.6,123.4M966.9,167.8L968.8,145.8M952.6,168.0L954.4,145.7M926.7,213.2L933.8,122.5M937.8,168.2L939.6,145.5M922.6,168.4L924.3,145.4M825.2,532.9L861.8,-47.4M753.9,556.6L783.7,-61.6M872.8,307.4L892.7,22.5M862.4,216.9L872.1,71.0M853.8,217.4L861.7,95.4M793.1,500.6L820.3,13.7M824.3,267.2L836.2,68.2M836.2,218.4L843.8,94.5M818.1,219.4L825.3,93.5M787.1,270.9L797.8,65.3M799.3,220.5L806.2,92.5M779.9,221.6L786.5,91.4M895.5,215.0L902.3,121.5M906.9,168.6L908.6,145.3M890.7,168.8L892.4,145.2M874.1,169.0L875.7,145.0M834.0,181.9L837.0,132.2M824.8,182.2L827.8,132.0M815.6,182.4L818.4,131.8M806.1,182.6L808.9,131.6M796.5,182.9L799.3,131.5M786.8,183.1L789.5,131.3M776.9,183.3L779.5,131.1M673.1,583.3L693.7,-77.9M580.8,613.9L589.0,-97.0M716.6,523.2L737.4,3.6M747.4,274.8L756.8,62.2M759.9,222.7L766.0,90.3M739.2,223.9L744.9,89.2M704.9,279.0L712.7,58.9M717.8,225.1L723.0,88.1M695.6,226.4L700.3,86.9M631.8,447.0L641.7,-8.1M656.5,390.2L665.4,55.3M672.6,227.7L676.7,85.6M646.1,339.1L652.3,84.3M608.5,398.9L614.4,51.5M621.9,342.5L626.9,83.0M596.8,346.0L600.5,81.6M766.8,183.6L769.3,130.9M756.6,183.8L759.0,130.7M746.2,184.1L748.5,130.5M735.6,184.4L737.8,130.3M724.8,184.6L726.9,130.1M713.8,184.9L715.8,129.8M702.6,185.2L704.6,129.6M691.3,185.5L693.1,129.4M679.7,185.7L681.4,129.2M667.9,186.0L669.5,129.0M655.9,186.3L657.4,128.7M643.7,186.6L645.0,128.5M628.9,300.4L629.2,286.5M631.2,186.9L632.4,128.2M616.2,315.7L617.2,259.4M618.5,187.2L619.6,128.0M603.6,317.2L604.9,231.5M605.6,187.6L606.5,127.8M590.9,304.5L592.2,202.8M592.4,187.9L593.2,127.5M472.4,482.0L465.5,-119.4M350.1,690.3L317.8,-146.2M529.6,469.4L529.9,-21.7M556.9,408.2L559.1,47.3M570.7,349.6L573.1,80.2M543.8,294.9L544.5,78.6M500.6,299.2L499.3,42.8M515.1,236.6L514.8,77.1M485.1,238.3L483.8,75.4M407.4,372.5L397.4,-37.9M438.8,305.3L434.0,37.8M453.8,240.1L451.4,73.7M421.1,242.0L417.6,71.9M371.5,311.9L362.8,32.5M387.0,243.9L382.2,70.1M351.4,245.9L345.2,68.1M578.0,277.0L579.6,127.2M564.8,248.7L565.7,127.0M551.0,234.6L551.2,204.2M551.2,188.9L551.5,126.7M537.0,189.3L537.1,126.4M522.4,189.6L522.4,126.1M507.6,190.0L507.3,125.8M492.4,190.4L492.0,125.6M476.9,190.7L476.3,125.3M461.1,191.1L460.3,124.9M445.0,191.5L443.9,124.6M428.5,191.9L427.2,124.3M411.6,192.3L410.1,124.0M394.4,192.8L392.6,123.6M376.8,193.2L374.7,123.3M358.8,193.7L356.4,122.9M340.3,194.1L337.7,122.6M189.5,543.9L138.0,-178.9M27.5,797.2L-85.9,-219.6M262.6,392.8L238.2,-57.3M298.1,319.2L284.6,26.5M314.1,248.1L306.4,66.1M275.1,250.3L265.8,63.9M217.6,327.2L198.4,20.0M234.2,252.6L223.1,61.7M191.3,255.0L178.2,59.3M88.1,417.2L43.0,-81.1M122.7,258.9L102.9,12.8M321.5,194.6L318.6,122.2M302.2,195.0L299.0,121.8M282.4,195.5L278.9,121.5M262.2,196.0L258.3,121.1M241.5,196.5L237.2,120.7M220.3,197.1L215.6,120.2M140.2,179.2L137.2,139.0M91.8,179.8L88.3,138.6M22.7,264.6L5.5,94.3M40.8,180.5L36.8,138.2M-13.1,181.3L-17.7,137.8M-88.8,271.0L-111.0,90.8M-70.0,182.1L-75.3,137.3" stroke="#a0a0a0" stroke-width="1" fill="none" shape-rendering="crispEdges"/><polygon points="1032.5,125.8 1065.0,126.5 1065.0,206.3 1025.0,206.8" fill="#0000c0"/><path d="M850.0,169.4L863.7,-47.2" stroke="#a0a0a0" stroke-width="1" shape-rendering="crispEdges"/><defs><clipPath id="pc"><polygon points="576.3,197.7 725.6,223.8 789.0,368.1 759.2,394.2 605.0,310.9"/></clipPath><linearGradient id="crease" gradientUnits="userSpaceOnUse" x1="639.0" x2="621.0" y1="289.0" y2="324.0"><stop offset="0" stop-color="#b01010" stop-opacity="0"/><stop offset="0.55" stop-color="#601010" stop-opacity="0.85"/><stop offset="1" stop-color="#b01010" stop-opacity="0"/></linearGradient></defs><g clip-path="url(#pc)"><polygon points="576.3,197.7 725.6,223.8 789.0,368.1 759.2,394.2 605.0,310.9" fill="#b21212"/><polygon points="576.3,197.7 725.6,223.8 711.0,236.0 584.0,209.0" fill="#c61616"/><polygon points="725.6,223.8 789.0,368.1 777.0,365.0 708.0,238.0" fill="#c01414"/><polygon points="605.0,310.9 759.2,394.2 789.0,368.1 769.0,359.0 617.0,301.0" fill="#a81010"/><path d="M617.0,305.0 L774.0,380.0" stroke="#5a0808" stroke-width="4" opacity="0.85" fill="none" style="filter:blur(1.6px)"/><path d="M711.0,236.0 L777.0,365.0" stroke="#7a0e0e" stroke-width="3" opacity="0.6" fill="none" style="filter:blur(1.5px)"/><path d="M-134.9,-102.8L1109.5,49.0M-122.7,-4.2L1105.0,88.6M-111.0,90.8L1100.7,127.6M-105.3,137.0L1098.5,146.8M-102.5,159.9L1097.5,156.4M-99.7,182.5L1096.4,166.0M-94.2,227.1L1094.3,185.0M-88.8,271.0L1092.2,203.8M-48.8,596.2L1075.9,349.7M-68.1,439.0L1015.0,287.5M55.1,52.8L887.5,96.8M156.3,78.6L869.6,108.2M159.2,119.2L868.0,132.8M164.9,198.4L864.8,181.2M167.6,237.2L863.2,205.0M205.3,129.8L841.1,138.5M206.5,149.3L840.4,151.0M207.7,168.6L839.6,163.3M208.9,187.8L838.8,175.7M-22.2,350.9L907.9,258.9M171.7,294.2L843.6,241.8M471.7,423.5L836.3,357.9M581.3,563.0L891.7,471.6M676.1,486.8L830.7,447.0M544.1,212.1L598.7,209.9M544.0,227.4L598.5,224.6M529.7,251.1L660.4,242.2M529.7,281.3L659.7,269.8M557.9,241.7L611.2,238.4M571.5,255.6L611.0,252.7M571.4,270.3L623.4,266.0M584.6,283.7L623.1,280.1M529.7,326.0L681.7,307.9M557.5,308.2L659.0,297.1M557.3,337.2L658.3,324.1M584.4,298.1L635.2,292.8M597.3,310.9L622.6,308.0M529.6,384.4L680.0,360.3M558.2,196.4L585.6,195.5M996.5,476.2L1044.6,-14.2M1092.2,203.8L1109.5,49.0M1070.2,205.1L1087.3,46.3M1047.1,206.4L1063.9,43.4M1081.3,204.4L1089.8,127.2M1091.0,166.0L1093.1,146.8M1080.0,166.2L1082.1,146.7M1058.8,205.7L1067.1,126.5M1068.7,166.4L1070.8,146.6M1057.1,166.5L1059.2,146.5M1035.1,207.1L1043.3,125.8M1045.2,166.7L1047.3,146.4M1033.1,166.8L1035.1,146.3M888.7,511.9L930.3,-35.0M997.2,209.2L1013.2,37.2M955.7,376.1L985.7,33.9M941.6,212.4L956.5,30.3M1010.2,208.5L1018.2,125.1M1020.5,167.0L1022.5,146.2M1007.7,167.2L1009.7,146.1M983.9,210.0L991.6,124.3M994.5,167.4L996.4,146.0M980.9,167.6L982.8,145.9M956.1,211.6L963.6,123.4M966.9,167.8L968.8,145.8M952.6,168.0L954.4,145.7M926.7,213.2L933.8,122.5M937.8,168.2L939.6,145.5M922.6,168.4L924.3,145.4M825.2,532.9L861.8,-47.4M753.9,556.6L783.7,-61.6M872.8,307.4L892.7,22.5M862.4,216.9L872.1,71.0M853.8,217.4L861.7,95.4M793.1,500.6L820.3,13.7M824.3,267.2L836.2,68.2M836.2,218.4L843.8,94.5M818.1,219.4L825.3,93.5M787.1,270.9L797.8,65.3M799.3,220.5L806.2,92.5M779.9,221.6L786.5,91.4M895.5,215.0L902.3,121.5M906.9,168.6L908.6,145.3M890.7,168.8L892.4,145.2M874.1,169.0L875.7,145.0M834.0,181.9L837.0,132.2M824.8,182.2L827.8,132.0M815.6,182.4L818.4,131.8M806.1,182.6L808.9,131.6M796.5,182.9L799.3,131.5M786.8,183.1L789.5,131.3M776.9,183.3L779.5,131.1M673.1,583.3L693.7,-77.9M580.8,613.9L589.0,-97.0M716.6,523.2L737.4,3.6M747.4,274.8L756.8,62.2M759.9,222.7L766.0,90.3M739.2,223.9L744.9,89.2M704.9,279.0L712.7,58.9M717.8,225.1L723.0,88.1M695.6,226.4L700.3,86.9M631.8,447.0L641.7,-8.1M656.5,390.2L665.4,55.3M672.6,227.7L676.7,85.6M646.1,339.1L652.3,84.3M608.5,398.9L614.4,51.5M621.9,342.5L626.9,83.0M596.8,346.0L600.5,81.6M766.8,183.6L769.3,130.9M756.6,183.8L759.0,130.7M746.2,184.1L748.5,130.5M735.6,184.4L737.8,130.3M724.8,184.6L726.9,130.1M713.8,184.9L715.8,129.8M702.6,185.2L704.6,129.6M691.3,185.5L693.1,129.4M679.7,185.7L681.4,129.2M667.9,186.0L669.5,129.0M655.9,186.3L657.4,128.7M643.7,186.6L645.0,128.5M628.9,300.4L629.2,286.5M631.2,186.9L632.4,128.2M616.2,315.7L617.2,259.4M618.5,187.2L619.6,128.0M603.6,317.2L604.9,231.5M605.6,187.6L606.5,127.8M590.9,304.5L592.2,202.8M592.4,187.9L593.2,127.5M472.4,482.0L465.5,-119.4M350.1,690.3L317.8,-146.2M529.6,469.4L529.9,-21.7M556.9,408.2L559.1,47.3M570.7,349.6L573.1,80.2M543.8,294.9L544.5,78.6M500.6,299.2L499.3,42.8M515.1,236.6L514.8,77.1M485.1,238.3L483.8,75.4M407.4,372.5L397.4,-37.9M438.8,305.3L434.0,37.8M453.8,240.1L451.4,73.7M421.1,242.0L417.6,71.9M371.5,311.9L362.8,32.5M387.0,243.9L382.2,70.1M351.4,245.9L345.2,68.1M578.0,277.0L579.6,127.2M564.8,248.7L565.7,127.0M551.0,234.6L551.2,204.2M551.2,188.9L551.5,126.7M537.0,189.3L537.1,126.4M522.4,189.6L522.4,126.1M507.6,190.0L507.3,125.8M492.4,190.4L492.0,125.6M476.9,190.7L476.3,125.3M461.1,191.1L460.3,124.9M445.0,191.5L443.9,124.6M428.5,191.9L427.2,124.3M411.6,192.3L410.1,124.0M394.4,192.8L392.6,123.6M376.8,193.2L374.7,123.3M358.8,193.7L356.4,122.9M340.3,194.1L337.7,122.6M189.5,543.9L138.0,-178.9M27.5,797.2L-85.9,-219.6M262.6,392.8L238.2,-57.3M298.1,319.2L284.6,26.5M314.1,248.1L306.4,66.1M275.1,250.3L265.8,63.9M217.6,327.2L198.4,20.0M234.2,252.6L223.1,61.7M191.3,255.0L178.2,59.3M88.1,417.2L43.0,-81.1M122.7,258.9L102.9,12.8M321.5,194.6L318.6,122.2M302.2,195.0L299.0,121.8M282.4,195.5L278.9,121.5M262.2,196.0L258.3,121.1M241.5,196.5L237.2,120.7M220.3,197.1L215.6,120.2M140.2,179.2L137.2,139.0M91.8,179.8L88.3,138.6M22.7,264.6L5.5,94.3M40.8,180.5L36.8,138.2M-13.1,181.3L-17.7,137.8M-88.8,271.0L-111.0,90.8M-70.0,182.1L-75.3,137.3" stroke="#d42020" stroke-width="1" fill="none" opacity="0.55" shape-rendering="crispEdges"/></g><defs><clipPath id="pxc"><path d="M585.3,217.9 L592.0,217.6 L592.1,210.2 L585.4,210.4ZM585.3,225.3 L591.9,224.9 L592.0,217.6 L585.3,217.9ZM591.8,232.3 L598.4,231.9 L598.5,224.6 L591.9,224.9ZM585.2,232.6 L591.8,232.3 L591.9,224.9 L585.3,225.3ZM598.2,246.4 L604.7,246.0 L604.8,238.8 L598.3,239.2ZM591.7,239.6 L598.3,239.2 L598.4,231.9 L591.8,232.3ZM585.1,240.0 L591.7,239.6 L591.8,232.3 L585.2,232.6ZM591.6,246.9 L598.2,246.4 L598.3,239.2 L591.7,239.6ZM585.0,247.3 L591.6,246.9 L591.7,239.6 L585.1,240.0ZM598.1,253.7 L604.6,253.2 L604.7,246.0 L598.2,246.4ZM604.4,260.4 L610.9,259.9 L611.0,252.7 L604.6,253.2ZM598.0,260.9 L604.4,260.4 L604.6,253.2 L598.1,253.7ZM591.5,254.2 L598.1,253.7 L598.2,246.4 L591.6,246.9ZM584.9,254.6 L591.5,254.2 L591.6,246.9 L585.0,247.3ZM591.4,261.4 L598.0,260.9 L598.1,253.7 L591.5,254.2ZM584.8,261.9 L591.4,261.4 L591.5,254.2 L584.9,254.6ZM610.6,274.2 L617.0,273.6 L617.1,266.5 L610.7,267.0ZM610.5,281.3 L616.8,280.7 L617.0,273.6 L610.6,274.2ZM616.7,287.7 L623.0,287.1 L623.1,280.1 L616.8,280.7ZM610.4,288.3 L616.7,287.7 L616.8,280.7 L610.5,281.3ZM604.3,267.6 L610.7,267.0 L610.9,259.9 L604.4,260.4ZM597.9,268.1 L604.3,267.6 L604.4,260.4 L598.0,260.9ZM604.2,274.7 L610.6,274.2 L610.7,267.0 L604.3,267.6ZM597.8,275.3 L604.2,274.7 L604.3,267.6 L597.9,268.1ZM591.3,268.7 L597.9,268.1 L598.0,260.9 L591.4,261.4ZM584.8,269.2 L591.3,268.7 L591.4,261.4 L584.8,261.9ZM591.2,275.9 L597.8,275.3 L597.9,268.1 L591.3,268.7ZM584.7,276.5 L591.2,275.9 L591.3,268.7 L584.8,269.2ZM604.1,281.9 L610.5,281.3 L610.6,274.2 L604.2,274.7ZM597.7,282.5 L604.1,281.9 L604.2,274.7 L597.8,275.3ZM604.0,289.0 L610.4,288.3 L610.5,281.3 L604.1,281.9ZM597.6,289.6 L604.0,289.0 L604.1,281.9 L597.7,282.5ZM591.2,283.1 L597.7,282.5 L597.8,275.3 L591.2,275.9ZM591.1,290.2 L597.6,289.6 L597.7,282.5 L591.2,283.1ZM616.6,294.7 L622.8,294.1 L623.0,287.1 L616.7,287.7ZM610.3,295.4 L616.6,294.7 L616.7,287.7 L610.4,288.3ZM616.4,301.7 L622.7,301.1 L622.8,294.1 L616.6,294.7ZM610.1,302.4 L616.4,301.7 L616.6,294.7 L610.3,295.4ZM603.9,296.0 L610.3,295.4 L610.4,288.3 L604.0,289.0ZM597.5,296.7 L603.9,296.0 L604.0,289.0 L597.6,289.6ZM603.8,303.1 L610.1,302.4 L610.3,295.4 L603.9,296.0ZM597.4,303.8 L603.8,303.1 L603.9,296.0 L597.5,296.7ZM572.0,203.5 L578.8,203.2 L578.9,195.7 L572.1,195.9ZM578.7,210.7 L585.4,210.4 L585.5,203.0 L578.8,203.2ZM571.9,211.0 L578.7,210.7 L578.8,203.2 L572.0,203.5ZM578.6,218.2 L585.3,217.9 L585.4,210.4 L578.7,210.7ZM571.8,218.5 L578.6,218.2 L578.7,210.7 L571.9,211.0ZM565.1,211.3 L571.9,211.0 L572.0,203.5 L565.1,203.7ZM558.1,211.6 L565.1,211.3 L565.1,203.7 L558.2,204.0ZM565.0,218.8 L571.8,218.5 L571.9,211.0 L565.1,211.3ZM558.1,219.1 L565.0,218.8 L565.1,211.3 L558.1,211.6ZM578.6,225.6 L585.3,225.3 L585.3,217.9 L578.6,218.2ZM571.8,226.0 L578.6,225.6 L578.6,218.2 L571.8,218.5ZM578.5,233.0 L585.2,232.6 L585.3,225.3 L578.6,225.6ZM571.7,233.4 L578.5,233.0 L578.6,225.6 L571.8,226.0ZM564.9,226.3 L571.8,226.0 L571.8,218.5 L565.0,218.8ZM558.0,226.7 L564.9,226.3 L565.0,218.8 L558.1,219.1ZM564.9,233.8 L571.7,233.4 L571.8,226.0 L564.9,226.3ZM558.0,234.2 L564.9,233.8 L564.9,226.3 L558.0,226.7ZM551.1,219.4 L558.1,219.1 L558.1,211.6 L551.1,211.8ZM578.4,240.4 L585.1,240.0 L585.2,232.6 L578.5,233.0ZM571.6,240.8 L578.4,240.4 L578.5,233.0 L571.7,233.4ZM578.3,247.8 L585.0,247.3 L585.1,240.0 L578.4,240.4ZM571.6,248.2 L578.3,247.8 L578.4,240.4 L571.6,240.8ZM564.8,241.3 L571.6,240.8 L571.7,233.4 L564.9,233.8ZM578.3,255.1 L584.9,254.6 L585.0,247.3 L578.3,247.8ZM571.5,255.6 L578.3,255.1 L578.3,247.8 L571.6,248.2ZM578.2,262.5 L584.8,261.9 L584.9,254.6 L578.3,255.1Z"/></clipPath></defs><g clip-path="url(#pxc)"><path d="M585.3,217.9 L592.0,217.6 L592.1,210.2 L585.4,210.4ZM585.3,225.3 L591.9,224.9 L592.0,217.6 L585.3,217.9ZM591.8,232.3 L598.4,231.9 L598.5,224.6 L591.9,224.9ZM585.2,232.6 L591.8,232.3 L591.9,224.9 L585.3,225.3ZM598.2,246.4 L604.7,246.0 L604.8,238.8 L598.3,239.2ZM591.7,239.6 L598.3,239.2 L598.4,231.9 L591.8,232.3ZM585.1,240.0 L591.7,239.6 L591.8,232.3 L585.2,232.6ZM591.6,246.9 L598.2,246.4 L598.3,239.2 L591.7,239.6ZM585.0,247.3 L591.6,246.9 L591.7,239.6 L585.1,240.0ZM598.1,253.7 L604.6,253.2 L604.7,246.0 L598.2,246.4ZM604.4,260.4 L610.9,259.9 L611.0,252.7 L604.6,253.2ZM598.0,260.9 L604.4,260.4 L604.6,253.2 L598.1,253.7ZM591.5,254.2 L598.1,253.7 L598.2,246.4 L591.6,246.9ZM584.9,254.6 L591.5,254.2 L591.6,246.9 L585.0,247.3ZM591.4,261.4 L598.0,260.9 L598.1,253.7 L591.5,254.2ZM584.8,261.9 L591.4,261.4 L591.5,254.2 L584.9,254.6ZM610.6,274.2 L617.0,273.6 L617.1,266.5 L610.7,267.0ZM610.5,281.3 L616.8,280.7 L617.0,273.6 L610.6,274.2ZM616.7,287.7 L623.0,287.1 L623.1,280.1 L616.8,280.7ZM610.4,288.3 L616.7,287.7 L616.8,280.7 L610.5,281.3ZM604.3,267.6 L610.7,267.0 L610.9,259.9 L604.4,260.4ZM597.9,268.1 L604.3,267.6 L604.4,260.4 L598.0,260.9ZM604.2,274.7 L610.6,274.2 L610.7,267.0 L604.3,267.6ZM597.8,275.3 L604.2,274.7 L604.3,267.6 L597.9,268.1ZM591.3,268.7 L597.9,268.1 L598.0,260.9 L591.4,261.4ZM584.8,269.2 L591.3,268.7 L591.4,261.4 L584.8,261.9ZM591.2,275.9 L597.8,275.3 L597.9,268.1 L591.3,268.7ZM584.7,276.5 L591.2,275.9 L591.3,268.7 L584.8,269.2ZM604.1,281.9 L610.5,281.3 L610.6,274.2 L604.2,274.7ZM597.7,282.5 L604.1,281.9 L604.2,274.7 L597.8,275.3ZM604.0,289.0 L610.4,288.3 L610.5,281.3 L604.1,281.9ZM597.6,289.6 L604.0,289.0 L604.1,281.9 L597.7,282.5ZM591.2,283.1 L597.7,282.5 L597.8,275.3 L591.2,275.9ZM591.1,290.2 L597.6,289.6 L597.7,282.5 L591.2,283.1ZM616.6,294.7 L622.8,294.1 L623.0,287.1 L616.7,287.7ZM610.3,295.4 L616.6,294.7 L616.7,287.7 L610.4,288.3ZM616.4,301.7 L622.7,301.1 L622.8,294.1 L616.6,294.7ZM610.1,302.4 L616.4,301.7 L616.6,294.7 L610.3,295.4ZM603.9,296.0 L610.3,295.4 L610.4,288.3 L604.0,289.0ZM597.5,296.7 L603.9,296.0 L604.0,289.0 L597.6,289.6ZM603.8,303.1 L610.1,302.4 L610.3,295.4 L603.9,296.0ZM597.4,303.8 L603.8,303.1 L603.9,296.0 L597.5,296.7ZM572.0,203.5 L578.8,203.2 L578.9,195.7 L572.1,195.9ZM578.7,210.7 L585.4,210.4 L585.5,203.0 L578.8,203.2ZM571.9,211.0 L578.7,210.7 L578.8,203.2 L572.0,203.5ZM578.6,218.2 L585.3,217.9 L585.4,210.4 L578.7,210.7ZM571.8,218.5 L578.6,218.2 L578.7,210.7 L571.9,211.0ZM565.1,211.3 L571.9,211.0 L572.0,203.5 L565.1,203.7ZM558.1,211.6 L565.1,211.3 L565.1,203.7 L558.2,204.0ZM565.0,218.8 L571.8,218.5 L571.9,211.0 L565.1,211.3ZM558.1,219.1 L565.0,218.8 L565.1,211.3 L558.1,211.6ZM578.6,225.6 L585.3,225.3 L585.3,217.9 L578.6,218.2ZM571.8,226.0 L578.6,225.6 L578.6,218.2 L571.8,218.5ZM578.5,233.0 L585.2,232.6 L585.3,225.3 L578.6,225.6ZM571.7,233.4 L578.5,233.0 L578.6,225.6 L571.8,226.0ZM564.9,226.3 L571.8,226.0 L571.8,218.5 L565.0,218.8ZM558.0,226.7 L564.9,226.3 L565.0,218.8 L558.1,219.1ZM564.9,233.8 L571.7,233.4 L571.8,226.0 L564.9,226.3ZM558.0,234.2 L564.9,233.8 L564.9,226.3 L558.0,226.7ZM551.1,219.4 L558.1,219.1 L558.1,211.6 L551.1,211.8ZM578.4,240.4 L585.1,240.0 L585.2,232.6 L578.5,233.0ZM571.6,240.8 L578.4,240.4 L578.5,233.0 L571.7,233.4ZM578.3,247.8 L585.0,247.3 L585.1,240.0 L578.4,240.4ZM571.6,248.2 L578.3,247.8 L578.4,240.4 L571.6,240.8ZM564.8,241.3 L571.6,240.8 L571.7,233.4 L564.9,233.8ZM578.3,255.1 L584.9,254.6 L585.0,247.3 L578.3,247.8ZM571.5,255.6 L578.3,255.1 L578.3,247.8 L571.6,248.2ZM578.2,262.5 L584.8,261.9 L584.9,254.6 L578.3,255.1Z" fill="#c40808"/><polygon points="578.0,201.0 582.0,200.0 627.0,295.0 621.0,298.0" fill="#9a4a3a" opacity="0.7"/><path d="M-134.9,-102.8L1109.5,49.0M-122.7,-4.2L1105.0,88.6M-111.0,90.8L1100.7,127.6M-105.3,137.0L1098.5,146.8M-102.5,159.9L1097.5,156.4M-99.7,182.5L1096.4,166.0M-94.2,227.1L1094.3,185.0M-88.8,271.0L1092.2,203.8M-48.8,596.2L1075.9,349.7M-68.1,439.0L1015.0,287.5M55.1,52.8L887.5,96.8M156.3,78.6L869.6,108.2M159.2,119.2L868.0,132.8M164.9,198.4L864.8,181.2M167.6,237.2L863.2,205.0M205.3,129.8L841.1,138.5M206.5,149.3L840.4,151.0M207.7,168.6L839.6,163.3M208.9,187.8L838.8,175.7M-22.2,350.9L907.9,258.9M171.7,294.2L843.6,241.8M471.7,423.5L836.3,357.9M581.3,563.0L891.7,471.6M676.1,486.8L830.7,447.0M544.1,212.1L598.7,209.9M544.0,227.4L598.5,224.6M529.7,251.1L660.4,242.2M529.7,281.3L659.7,269.8M557.9,241.7L611.2,238.4M571.5,255.6L611.0,252.7M571.4,270.3L623.4,266.0M584.6,283.7L623.1,280.1M529.7,326.0L681.7,307.9M557.5,308.2L659.0,297.1M557.3,337.2L658.3,324.1M584.4,298.1L635.2,292.8M597.3,310.9L622.6,308.0M529.6,384.4L680.0,360.3M558.2,196.4L585.6,195.5M996.5,476.2L1044.6,-14.2M1092.2,203.8L1109.5,49.0M1070.2,205.1L1087.3,46.3M1047.1,206.4L1063.9,43.4M1081.3,204.4L1089.8,127.2M1091.0,166.0L1093.1,146.8M1080.0,166.2L1082.1,146.7M1058.8,205.7L1067.1,126.5M1068.7,166.4L1070.8,146.6M1057.1,166.5L1059.2,146.5M1035.1,207.1L1043.3,125.8M1045.2,166.7L1047.3,146.4M1033.1,166.8L1035.1,146.3M888.7,511.9L930.3,-35.0M997.2,209.2L1013.2,37.2M955.7,376.1L985.7,33.9M941.6,212.4L956.5,30.3M1010.2,208.5L1018.2,125.1M1020.5,167.0L1022.5,146.2M1007.7,167.2L1009.7,146.1M983.9,210.0L991.6,124.3M994.5,167.4L996.4,146.0M980.9,167.6L982.8,145.9M956.1,211.6L963.6,123.4M966.9,167.8L968.8,145.8M952.6,168.0L954.4,145.7M926.7,213.2L933.8,122.5M937.8,168.2L939.6,145.5M922.6,168.4L924.3,145.4M825.2,532.9L861.8,-47.4M753.9,556.6L783.7,-61.6M872.8,307.4L892.7,22.5M862.4,216.9L872.1,71.0M853.8,217.4L861.7,95.4M793.1,500.6L820.3,13.7M824.3,267.2L836.2,68.2M836.2,218.4L843.8,94.5M818.1,219.4L825.3,93.5M787.1,270.9L797.8,65.3M799.3,220.5L806.2,92.5M779.9,221.6L786.5,91.4M895.5,215.0L902.3,121.5M906.9,168.6L908.6,145.3M890.7,168.8L892.4,145.2M874.1,169.0L875.7,145.0M834.0,181.9L837.0,132.2M824.8,182.2L827.8,132.0M815.6,182.4L818.4,131.8M806.1,182.6L808.9,131.6M796.5,182.9L799.3,131.5M786.8,183.1L789.5,131.3M776.9,183.3L779.5,131.1M673.1,583.3L693.7,-77.9M580.8,613.9L589.0,-97.0M716.6,523.2L737.4,3.6M747.4,274.8L756.8,62.2M759.9,222.7L766.0,90.3M739.2,223.9L744.9,89.2M704.9,279.0L712.7,58.9M717.8,225.1L723.0,88.1M695.6,226.4L700.3,86.9M631.8,447.0L641.7,-8.1M656.5,390.2L665.4,55.3M672.6,227.7L676.7,85.6M646.1,339.1L652.3,84.3M608.5,398.9L614.4,51.5M621.9,342.5L626.9,83.0M596.8,346.0L600.5,81.6M766.8,183.6L769.3,130.9M756.6,183.8L759.0,130.7M746.2,184.1L748.5,130.5M735.6,184.4L737.8,130.3M724.8,184.6L726.9,130.1M713.8,184.9L715.8,129.8M702.6,185.2L704.6,129.6M691.3,185.5L693.1,129.4M679.7,185.7L681.4,129.2M667.9,186.0L669.5,129.0M655.9,186.3L657.4,128.7M643.7,186.6L645.0,128.5M628.9,300.4L629.2,286.5M631.2,186.9L632.4,128.2M616.2,315.7L617.2,259.4M618.5,187.2L619.6,128.0M603.6,317.2L604.9,231.5M605.6,187.6L606.5,127.8M590.9,304.5L592.2,202.8M592.4,187.9L593.2,127.5M472.4,482.0L465.5,-119.4M350.1,690.3L317.8,-146.2M529.6,469.4L529.9,-21.7M556.9,408.2L559.1,47.3M570.7,349.6L573.1,80.2M543.8,294.9L544.5,78.6M500.6,299.2L499.3,42.8M515.1,236.6L514.8,77.1M485.1,238.3L483.8,75.4M407.4,372.5L397.4,-37.9M438.8,305.3L434.0,37.8M453.8,240.1L451.4,73.7M421.1,242.0L417.6,71.9M371.5,311.9L362.8,32.5M387.0,243.9L382.2,70.1M351.4,245.9L345.2,68.1M578.0,277.0L579.6,127.2M564.8,248.7L565.7,127.0M551.0,234.6L551.2,204.2M551.2,188.9L551.5,126.7M537.0,189.3L537.1,126.4M522.4,189.6L522.4,126.1M507.6,190.0L507.3,125.8M492.4,190.4L492.0,125.6M476.9,190.7L476.3,125.3M461.1,191.1L460.3,124.9M445.0,191.5L443.9,124.6M428.5,191.9L427.2,124.3M411.6,192.3L410.1,124.0M394.4,192.8L392.6,123.6M376.8,193.2L374.7,123.3M358.8,193.7L356.4,122.9M340.3,194.1L337.7,122.6M189.5,543.9L138.0,-178.9M27.5,797.2L-85.9,-219.6M262.6,392.8L238.2,-57.3M298.1,319.2L284.6,26.5M314.1,248.1L306.4,66.1M275.1,250.3L265.8,63.9M217.6,327.2L198.4,20.0M234.2,252.6L223.1,61.7M191.3,255.0L178.2,59.3M88.1,417.2L43.0,-81.1M122.7,258.9L102.9,12.8M321.5,194.6L318.6,122.2M302.2,195.0L299.0,121.8M282.4,195.5L278.9,121.5M262.2,196.0L258.3,121.1M241.5,196.5L237.2,120.7M220.3,197.1L215.6,120.2M140.2,179.2L137.2,139.0M91.8,179.8L88.3,138.6M22.7,264.6L5.5,94.3M40.8,180.5L36.8,138.2M-13.1,181.3L-17.7,137.8M-88.8,271.0L-111.0,90.8M-70.0,182.1L-75.3,137.3" stroke="#d85050" stroke-width="1" fill="none" shape-rendering="crispEdges"/></g><polygon points="19.7,58.2 24.8,52.5 42.5,52.5 47.4,58.2 42.5,64.0 24.8,64.0" fill="#c2d840"/><polygon points="19.7,52.6 24.8,46.8 42.5,46.8 47.4,52.6 42.5,58.3 24.8,58.3" fill="#ffc633"/><polygon points="19.7,47.1 24.8,41.3 42.5,41.3 47.4,47.1 42.5,52.8 24.8,52.8" fill="#b0a070"/><polygon points="19.7,41.2 24.8,35.5 42.5,35.5 47.4,41.2 42.5,47.0 24.8,47.0" fill="#cc1840"/><polygon points="19.7,33.3 24.8,26.3 42.5,26.3 47.4,33.3 42.5,40.3 24.8,40.3" fill="#00707f"/><text x="73.0" y="41.5" font-family="Liberation Serif" font-size="22.5" fill="#b6c0c8" textLength="113" lengthAdjust="spacingAndGlyphs">Geoscience</text><text x="56.0" y="64.0" font-family="Liberation Serif" fill="#6b7b88" textLength="136" lengthAdjust="spacingAndGlyphs"><tspan font-size="38.5">A</tspan><tspan font-size="26.5">NALYST</tspan></text><line x1="948.3" y1="369.0" x2="961.4" y2="380.0" stroke="#a8a8a8" stroke-width="0.8"/><line x1="957.7" y1="368.3" x2="971.8" y2="378.6" stroke="#a8a8a8" stroke-width="0.8"/><line x1="967.1" y1="367.7" x2="982.2" y2="377.2" stroke="#a8a8a8" stroke-width="0.8"/><line x1="976.5" y1="367.0" x2="992.7" y2="375.7" stroke="#a8a8a8" stroke-width="0.8"/><line x1="985.9" y1="366.4" x2="1003.1" y2="374.3" stroke="#a8a8a8" stroke-width="0.8"/><line x1="995.3" y1="365.7" x2="1013.5" y2="372.9" stroke="#a8a8a8" stroke-width="0.8"/><line x1="948.3" y1="369.0" x2="995.3" y2="365.7" stroke="#a8a8a8" stroke-width="0.8"/><line x1="951.6" y1="371.8" x2="999.8" y2="367.5" stroke="#a8a8a8" stroke-width="0.8"/><line x1="954.8" y1="374.5" x2="1004.4" y2="369.3" stroke="#a8a8a8" stroke-width="0.8"/><line x1="958.1" y1="377.2" x2="1009.0" y2="371.1" stroke="#a8a8a8" stroke-width="0.8"/><line x1="961.4" y1="380.0" x2="1013.5" y2="372.9" stroke="#a8a8a8" stroke-width="0.8"/><polygon points="943.0,368.5 946.0,366.5 961.4,380.0 960.5,380.5" fill="#108a10"/><polygon points="943.0,368.5 946.0,366.5 953.0,373.0" fill="#40b840"/><polygon points="961.4,379.6 1014.2,372.8 1014.2,379.8 961.4,380.6" fill="#d00000"/><polygon points="974.0,378.0 1014.2,373.8 1014.2,375.6" fill="#ff5050" opacity="0.7"/><polygon points="1014.2,370.3 1027.2,375.5 1015.0,382.0" fill="#ff0a0a"/><polygon points="958.2,324.0 965.4,324.0 962.3,379.4 961.0,379.4" fill="#0808c8"/><polygon points="961.8,324.0 963.6,324.0 962.1,364.0 961.6,364.0" fill="#4050f0" opacity="0.8"/><polygon points="961.4,303.8 969.2,324.0 953.6,324.0" fill="#1020d8"/><polygon points="961.8,305.0 964.5,324.0 962.2,324.0" fill="#6070ff" opacity="0.8"/><text x="960.5" y="291.5" font-family="Liberation Sans" font-size="11" fill="#2030e0" font-style="italic">Z</text><text x="1034.5" y="371.0" font-family="Liberation Sans" font-size="10.5" fill="#e02020">X</text><text x="940.5" y="362.5" font-family="Liberation Sans" font-size="10" fill="#20e020">Y</text></svg>
<div class="a" style="left:1066px;top:412px;width:38px;height:430px;background:#efefef;border:1px solid #a8a8a8;border-radius:1px"></div>
<div class="a" style="left:1069px;top:441px;width:32px;height:1px;background:#a0a0a0"></div>
<div class="a" style="left:1069px;top:655px;width:32px;height:1px;background:#a0a0a0"></div>
<div class="a" style="left:1069px;top:763px;width:32px;height:1px;background:#a0a0a0"></div>
<div class="a" style="left:1070px;top:417px;width:28px;height:21px;background:#fdfdfd;border:1px solid #d4d4d4;border-radius:4px"></div>
<div class="a" style="left:1070px;top:447px;width:28px;height:21px;background:#fdfdfd;border:1px solid #d4d4d4;border-radius:4px"></div>
<div class="a" style="left:1070px;top:473px;width:28px;height:21px;background:#fdfdfd;border:1px solid #d4d4d4;border-radius:4px"></div>
<div class="a" style="left:1070px;top:499px;width:28px;height:21px;background:#fdfdfd;border:1px solid #d4d4d4;border-radius:4px"></div>
<div class="a" style="left:1070px;top:525px;width:28px;height:21px;background:#fdfdfd;border:1px solid #d4d4d4;border-radius:4px"></div>
<div class="a" style="left:1070px;top:551px;width:28px;height:21px;background:#fdfdfd;border:1px solid #d4d4d4;border-radius:4px"></div>
<div class="a" style="left:1070px;top:577px;width:28px;height:21px;background:#fdfdfd;border:1px solid #d4d4d4;border-radius:4px"></div>
<div class="a" style="left:1070px;top:604px;width:28px;height:21px;background:#fdfdfd;border:1px solid #d4d4d4;border-radius:4px"></div>
<div class="a" style="left:1070px;top:630px;width:28px;height:21px;background:#f5f5f5;border:1px solid #e6e6e6;border-radius:4px"></div>
<div class="a" style="left:1070px;top:660px;width:28px;height:22px;background:#cce4f7;border:1px solid #1f5fa0;border-radius:4px"></div>
<div class="a" style="left:1070px;top:686px;width:28px;height:21px;background:#fdfdfd;border:1px solid #d4d4d4;border-radius:4px"></div>
<div class="a" style="left:1070px;top:712px;width:28px;height:21px;background:#f5f5f5;border:1px solid #e6e6e6;border-radius:4px"></div>
<div class="a" style="left:1070px;top:738px;width:28px;height:21px;background:#f5f5f5;border:1px solid #e6e6e6;border-radius:4px"></div>
<div class="a" style="left:1070px;top:768px;width:28px;height:22px;background:#cce4f7;border:1px solid #1f5fa0;border-radius:4px"></div>
<div class="a" style="left:1070px;top:795px;width:28px;height:21px;background:#fdfdfd;border:1px solid #d4d4d4;border-radius:4px"></div>
<div class="a" style="left:1070px;top:821px;width:28px;height:21px;background:#fdfdfd;border:1px solid #d4d4d4;border-radius:4px"></div>
<svg class="a" style="left:1070px;top:417px" width="28" height="22" viewBox="0 0 28 22"><rect x="7" y="4" width="12" height="11" fill="#bfe0f8" stroke="#5a9ad8" stroke-width="1"/><rect x="5.5" y="2.5" width="4" height="4" fill="#3a8ad0"/><rect x="16.5" y="2.5" width="4" height="4" fill="#3a8ad0"/><rect x="5.5" y="13" width="4" height="4" fill="#3a8ad0"/><circle cx="14" cy="10" r="4" fill="#c8e8ff" stroke="#5aa0d8" stroke-width="1.3"/><line x1="17" y1="13" x2="22" y2="18" stroke="#f0a030" stroke-width="2.5"/></svg>
<svg class="a" style="left:1070px;top:447px" width="28" height="22" viewBox="0 0 28 22"><circle cx="14" cy="11" r="6" fill="none" stroke="#222" stroke-width="1.2"/><path d="M14,3v3M14,16v3M6,11h3M19,11h3" stroke="#222" stroke-width="1.2"/><path d="M8.5,11 L12,9 L12,13Z" fill="#222"/></svg>
<svg class="a" style="left:1070px;top:473px" width="28" height="22" viewBox="0 0 28 22"><circle cx="14" cy="11" r="6" fill="none" stroke="#222" stroke-width="1.2"/><path d="M14,3v3M14,16v3M6,11h3M19,11h3" stroke="#222" stroke-width="1.2"/><path d="M14,5.5 L12,9 L16,9Z" fill="#222"/></svg>
<svg class="a" style="left:1070px;top:499px" width="28" height="22" viewBox="0 0 28 22"><circle cx="14" cy="11" r="6" fill="none" stroke="#222" stroke-width="1.2"/><path d="M14,3v3M14,16v3M6,11h3M19,11h3" stroke="#222" stroke-width="1.2"/><circle cx="14" cy="11" r="2.6" fill="#222"/></svg>
<svg class="a" style="left:1070px;top:525px" width="28" height="22" viewBox="0 0 28 22"><circle cx="14" cy="11" r="6" fill="none" stroke="#222" stroke-width="1.2"/><path d="M14,3v3M14,16v3M6,11h3M19,11h3" stroke="#222" stroke-width="1.2"/><path d="M19.5,11 L16,9 L16,13Z" fill="#222"/></svg>
<svg class="a" style="left:1070px;top:551px" width="28" height="22" viewBox="0 0 28 22"><circle cx="14" cy="11" r="6" fill="none" stroke="#222" stroke-width="1.2"/><path d="M14,3v3M14,16v3M6,11h3M19,11h3" stroke="#222" stroke-width="1.2"/><path d="M14,16.5 L12,13 L16,13Z" fill="#222"/></svg>
<svg class="a" style="left:1070px;top:577px" width="28" height="22" viewBox="0 0 28 22"><g transform="rotate(-45 14 11)"><rect x="6" y="8.3" width="9" height="5.4" rx="2.7" fill="none" stroke="#8c8c8c" stroke-width="2"/><rect x="13" y="8.3" width="9" height="5.4" rx="2.7" fill="none" stroke="#8c8c8c" stroke-width="2"/></g></svg>
<svg class="a" style="left:1070px;top:604px" width="28" height="22" viewBox="0 0 28 22"><path d="M14.5,3v16M8,11.5h14M9,18L20,4" stroke="#e42a2a" stroke-width="1"/></svg>
<svg class="a" style="left:1070px;top:630px" width="28" height="22" viewBox="0 0 28 22"><path d="M8,6h12l-3,5h-6z" fill="none" stroke="#888" stroke-width="0.9"/><path d="M14,10v6M12,14l2,2l2,-2" stroke="#888" stroke-width="0.9" fill="none"/></svg>
<svg class="a" style="left:1070px;top:660px" width="28" height="22" viewBox="0 0 28 22"><path d="M8,10 L18,5 L21,7 L12,12Z" fill="#c8c8c8" stroke="#555" stroke-width="0.8"/><rect x="7" y="11" width="8" height="7" fill="#b8b8b8" stroke="#444" stroke-width="0.9"/><path d="M15,11 L21,7 M15,18 L21,12" stroke="#666" stroke-width="0.8"/></svg>
<svg class="a" style="left:1070px;top:686px" width="28" height="22" viewBox="0 0 28 22"><rect x="7" y="10" width="8" height="8" fill="#b8b8b8" stroke="#444" stroke-width="0.9"/><path d="M7,10 L11,6 L19,6 L15,10 M19,6 L19,14 L15,18" fill="#d0d0d0" stroke="#555" stroke-width="0.8"/><path d="M17,4 L22,4 M19,15 L23,12" stroke="#777" stroke-width="0.7"/></svg>
<svg class="a" style="left:1070px;top:712px" width="28" height="22" viewBox="0 0 28 22"><path d="M6,14h16M7,9v5M10,11v3M13,11v3M16,11v3M19,11v3M21,9v5" stroke="#333" stroke-width="0.9"/></svg>
<svg class="a" style="left:1070px;top:738px" width="28" height="22" viewBox="0 0 28 22"><path d="M8,4h12v14h-12z M12,4v14 M16,4v14 M8,9h12 M8,13.5h12" stroke="#bbb" stroke-width="0.8" fill="none" stroke-dasharray="1.2,0.8"/></svg>
<svg class="a" style="left:1070px;top:768px" width="28" height="22" viewBox="0 0 28 22"><path d="M8,5h12v12h-12z M11,5v12 M14,5v12 M17,5v12 M8,8h12 M8,11h12 M8,14h12" stroke="#888" stroke-width="0.6" fill="none"/><path d="M8,17h13" stroke="#e02020" stroke-width="1.3"/><path d="M8,17V4" stroke="#20c020" stroke-width="1.3"/><path d="M8,17L18,7" stroke="#1020ff" stroke-width="1.5"/></svg>
<svg class="a" style="left:1070px;top:795px" width="28" height="22" viewBox="0 0 28 22"><path d="M8,12 L14,6 L20,12 L14,18Z" fill="#7a8a9a" stroke="#556" stroke-width="0.8"/><path d="M17,4v12l3,3v-12z" fill="#5aa8d8"/></svg>
<svg class="a" style="left:1070px;top:821px" width="28" height="22" viewBox="0 0 28 22"><defs><linearGradient id="rb" x1="0" x2="1"><stop offset="0" stop-color="#0000ff"/><stop offset="0.25" stop-color="#00ff00"/><stop offset="0.5" stop-color="#ffff00"/><stop offset="0.75" stop-color="#ff0000"/><stop offset="1" stop-color="#ff00ff"/></linearGradient></defs><rect x="8" y="4" width="13" height="15" fill="url(#rb)"/><path d="M8,19V9M10,19V13M12,19V8M14,19V15M16,19V11M18,19V13M20,19V10" stroke="#111" stroke-width="1.4"/></svg>
<div class="a" style="left:0;top:843px;width:1105px;height:1px;background:#7c8490"></div>
</body></html>
